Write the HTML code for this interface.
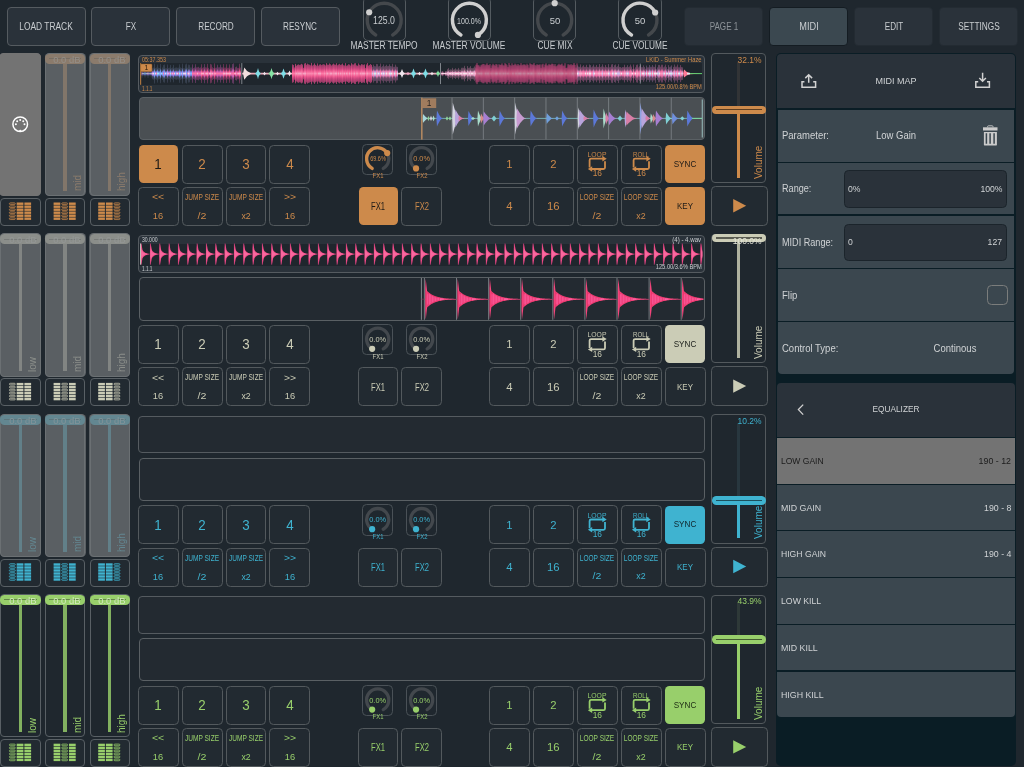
<!DOCTYPE html>
<html><head><meta charset="utf-8"><title>DJ</title>
<style>
html,body{margin:0;padding:0;}
body{width:1024px;height:767px;overflow:hidden;position:relative;background:#1f272e;
font-family:"Liberation Sans",sans-serif;}
.b{position:absolute;box-sizing:border-box;}
.t{position:absolute;white-space:nowrap;line-height:1;}
#root{position:absolute;left:0;top:0;width:1024px;height:767px;overflow:hidden;will-change:transform;}
svg{position:absolute;left:0;top:0;overflow:visible;}
</style></head><body><div id="root">
<div class="b" style="left:6.8px;top:6.8px;width:79.2px;height:39.2px;background:#2a323a;border:1px solid #555b60;border-radius:4px;"></div>
<div class="t" style="top:22px;font-size:10px;color:#c9cdd0;left:46.4px;transform:translateX(-50%) scaleX(0.84);">LOAD TRACK</div>
<div class="b" style="left:91.1px;top:6.8px;width:79.2px;height:39.2px;background:#2a323a;border:1px solid #555b60;border-radius:4px;"></div>
<div class="t" style="top:22px;font-size:10px;color:#c9cdd0;left:130.7px;transform:translateX(-50%) scaleX(0.81);">FX</div>
<div class="b" style="left:176px;top:6.8px;width:79.2px;height:39.2px;background:#2a323a;border:1px solid #555b60;border-radius:4px;"></div>
<div class="t" style="top:22px;font-size:10px;color:#c9cdd0;left:215.6px;transform:translateX(-50%) scaleX(0.82);">RECORD</div>
<div class="b" style="left:260.8px;top:6.8px;width:79.2px;height:39.2px;background:#2a323a;border:1px solid #555b60;border-radius:4px;"></div>
<div class="t" style="top:22px;font-size:10px;color:#c9cdd0;left:300.4px;transform:translateX(-50%) scaleX(0.81);">RESYNC</div>
<div class="b" style="left:362.6px;top:-3px;width:43.2px;height:44.4px;border:1px solid #545b60;border-radius:5px;"></div>
<div class="b" style="left:447.8px;top:-3px;width:43.2px;height:44.4px;border:1px solid #545b60;border-radius:5px;"></div>
<div class="b" style="left:533.1px;top:-3px;width:43.2px;height:44.4px;border:1px solid #545b60;border-radius:5px;"></div>
<div class="b" style="left:618.4px;top:-3px;width:43.2px;height:44.4px;border:1px solid #545b60;border-radius:5px;"></div>
<svg width="1024" height="767"><path d="M375.7 34.92A17 17 0 1 1 392.7 34.92" fill="none" stroke="#44484c" stroke-width="3.4" stroke-linecap="round"/><circle cx="369.18" cy="12.25" r="3.1" fill="#cfcfcf"/><path d="M460.9 34.92A17 17 0 1 1 477.9 34.92" fill="none" stroke="#44484c" stroke-width="3.4" stroke-linecap="round"/><path d="M460.9 34.92A17 17 0 1 1 477.9 34.92" fill="none" stroke="#cfcfcf" stroke-width="3.4" stroke-linecap="round"/><circle cx="477.9" cy="34.92" r="3.1" fill="#cfcfcf"/><path d="M546.2 34.92A17 17 0 1 1 563.2 34.92" fill="none" stroke="#44484c" stroke-width="3.4" stroke-linecap="round"/><circle cx="554.7" cy="3.2" r="3.1" fill="#cfcfcf"/><path d="M631.5 34.92A17 17 0 1 1 648.5 34.92" fill="none" stroke="#44484c" stroke-width="3.4" stroke-linecap="round"/><path d="M631.5 34.92A17 17 0 1 1 655.15 12.48" fill="none" stroke="#cfcfcf" stroke-width="3.4" stroke-linecap="round"/><circle cx="655.15" cy="12.48" r="3.1" fill="#cfcfcf"/></svg>
<div class="t" style="top:16px;font-size:10px;color:#c9cdd0;left:384.2px;transform:translateX(-50%) scaleX(0.87);">125.0</div>
<div class="t" style="top:41px;font-size:10px;color:#c9cdd0;left:384.2px;transform:translateX(-50%) scaleX(0.84);">MASTER TEMPO</div>
<div class="t" style="top:17px;font-size:8.3px;color:#c9cdd0;left:469.4px;transform:translateX(-50%) scaleX(0.85);">100.0%</div>
<div class="t" style="top:41px;font-size:10px;color:#c9cdd0;left:469.4px;transform:translateX(-50%) scaleX(0.84);">MASTER VOLUME</div>
<div class="t" style="top:16px;font-size:9.8px;color:#c9cdd0;left:554.7px;transform:translateX(-50%) scaleX(0.97);">50</div>
<div class="t" style="top:41px;font-size:10px;color:#c9cdd0;left:554.7px;transform:translateX(-50%) scaleX(0.84);">CUE MIX</div>
<div class="t" style="top:16px;font-size:9.8px;color:#c9cdd0;left:640px;transform:translateX(-50%) scaleX(0.97);">50</div>
<div class="t" style="top:41px;font-size:10px;color:#c9cdd0;left:640px;transform:translateX(-50%) scaleX(0.83);">CUE VOLUME</div>
<div class="b" style="left:684.4px;top:6.9px;width:79px;height:39px;background:#2a323a;border:1px solid #232b32;border-radius:4px;"></div>
<div class="t" style="top:22px;font-size:10px;color:#8d9398;left:723.9px;transform:translateX(-50%) scaleX(0.81);">PAGE 1</div>
<div class="b" style="left:769.3px;top:6.9px;width:79px;height:39px;background:#3b4850;border:1px solid #141c22;border-radius:4px;"></div>
<div class="t" style="top:22px;font-size:10px;color:#c9cdd0;left:808.8px;transform:translateX(-50%) scaleX(0.92);">MIDI</div>
<div class="b" style="left:854.2px;top:6.9px;width:79px;height:39px;background:#2a323a;border:1px solid #232b32;border-radius:4px;"></div>
<div class="t" style="top:22px;font-size:10px;color:#c9cdd0;left:893.7px;transform:translateX(-50%) scaleX(0.81);">EDIT</div>
<div class="b" style="left:939.1px;top:6.9px;width:79px;height:39px;background:#2a323a;border:1px solid #232b32;border-radius:4px;"></div>
<div class="t" style="top:22px;font-size:10px;color:#c9cdd0;left:978.6px;transform:translateX(-50%) scaleX(0.83);">SETTINGS</div>
<div class="b" style="left:0.3px;top:53px;width:40.5px;height:143.3px;border:1px solid #596065;border-radius:4px;"></div>
<div class="b" style="left:18.85px;top:59px;width:3.4px;height:132px;background:#ae7846"></div>
<div class="b" style="left:0.3px;top:53.7px;width:40.5px;height:10px;border-radius:4.5px;background:#cd8a4b"></div>
<div class="b" style="left:4.3px;top:58.2px;width:32.5px;height:1px;background:#855a31"></div>
<div class="t" style="top:55px;font-size:9.5px;color:#e8caae;right:987.8px;transform-origin:100% 50%;transform:scaleX(0.99);">0.0 dB</div>
<div class="t" style="left:32.2px;top:191.4px;font-size:10.5px;color:#cd8a4b;transform-origin:0 50%;transform:translate(0,-50%) rotate(-90deg) scaleX(0.95);">low</div>
<div class="b" style="left:-0.7px;top:52.8px;width:41.7px;height:143.6px;background:#737373;border-radius:4.5px;"></div>
<div class="b" style="left:0.3px;top:197.9px;width:40.5px;height:27.9px;background:#222a31;border:1px solid #596065;border-radius:4px;"></div>
<div class="b" style="left:44.9px;top:53px;width:40.5px;height:143.3px;border:1px solid #596065;border-radius:4px;"></div>
<div class="b" style="left:63.45px;top:59px;width:3.4px;height:132px;background:#ae7846"></div>
<div class="b" style="left:44.9px;top:53.7px;width:40.5px;height:10px;border-radius:4.5px;background:#cd8a4b"></div>
<div class="b" style="left:48.9px;top:58.2px;width:32.5px;height:1px;background:#855a31"></div>
<div class="t" style="top:55px;font-size:9.5px;color:#e8caae;right:943.2px;transform-origin:100% 50%;transform:scaleX(0.99);">0.0 dB</div>
<div class="t" style="left:76.8px;top:191.4px;font-size:10.5px;color:#cd8a4b;transform-origin:0 50%;transform:translate(0,-50%) rotate(-90deg) scaleX(0.95);">mid</div>
<div class="b" style="left:44.7px;top:52.8px;width:40.9px;height:143.6px;background:rgba(114,118,120,0.72);border-radius:4.5px;"></div>
<div class="b" style="left:44.9px;top:197.9px;width:40.5px;height:27.9px;background:#222a31;border:1px solid #596065;border-radius:4px;"></div>
<div class="b" style="left:89.5px;top:53px;width:40.5px;height:143.3px;border:1px solid #596065;border-radius:4px;"></div>
<div class="b" style="left:108.05px;top:59px;width:3.4px;height:132px;background:#ae7846"></div>
<div class="b" style="left:89.5px;top:53.7px;width:40.5px;height:10px;border-radius:4.5px;background:#cd8a4b"></div>
<div class="b" style="left:93.5px;top:58.2px;width:32.5px;height:1px;background:#855a31"></div>
<div class="t" style="top:55px;font-size:9.5px;color:#e8caae;right:898.6px;transform-origin:100% 50%;transform:scaleX(0.99);">0.0 dB</div>
<div class="t" style="left:121.4px;top:191.4px;font-size:10.5px;color:#cd8a4b;transform-origin:0 50%;transform:translate(0,-50%) rotate(-90deg) scaleX(0.95);">high</div>
<div class="b" style="left:89.3px;top:52.8px;width:40.9px;height:143.6px;background:rgba(114,118,120,0.72);border-radius:4.5px;"></div>
<div class="b" style="left:89.5px;top:197.9px;width:40.5px;height:27.9px;background:#222a31;border:1px solid #596065;border-radius:4px;"></div>
<div class="b" style="left:138.3px;top:54.9px;width:566.3px;height:37.7px;background:#2a323a;border:1px solid #555b60;border-radius:4px;"></div>
<div class="b" style="left:139.3px;top:63.2px;width:563.2px;height:22px;background:#1f262d"></div>
<div class="b" style="left:138.9px;top:97px;width:565.7px;height:43.2px;background:#4a4f53;border:1px solid #5a6064;border-radius:4px;"></div>
<div class="b" style="left:138.5px;top:145px;width:39.7px;height:38px;background:#cd8a4b;border-radius:4.5px;"></div>
<div class="t" style="top:156px;font-size:15.2px;color:#1d1a17;left:158.3px;transform:translateX(-50%) scaleX(0.88);">1</div>
<div class="b" style="left:138px;top:186.8px;width:40.7px;height:39.1px;background:#222a31;border:1px solid #53595d;border-radius:4.5px;"></div>
<div class="t" style="top:192px;font-size:9.5px;color:#cd8a4b;left:158.3px;transform:translateX(-50%) scaleX(1.1);">&lt;&lt;</div>
<div class="t" style="top:211px;font-size:9.6px;color:#cd8a4b;left:158.3px;transform:translateX(-50%) scaleX(0.97);">16</div>
<div class="b" style="left:181.83px;top:144.5px;width:40.7px;height:39px;background:#222a31;border:1px solid #53595d;border-radius:4.5px;"></div>
<div class="t" style="top:156px;font-size:15.2px;color:#cd8a4b;left:202.13px;transform:translateX(-50%) scaleX(0.88);">2</div>
<div class="b" style="left:181.83px;top:186.8px;width:40.7px;height:39.1px;background:#222a31;border:1px solid #53595d;border-radius:4.5px;"></div>
<div class="t" style="top:193px;font-size:8.6px;color:#cd8a4b;left:202.13px;transform:translateX(-50%) scaleX(0.76);">JUMP SIZE</div>
<div class="t" style="top:211px;font-size:9.6px;color:#cd8a4b;left:202.13px;transform:translateX(-50%) scaleX(1.11);">/2</div>
<div class="b" style="left:225.66px;top:144.5px;width:40.7px;height:39px;background:#222a31;border:1px solid #53595d;border-radius:4.5px;"></div>
<div class="t" style="top:156px;font-size:15.2px;color:#cd8a4b;left:245.96px;transform:translateX(-50%) scaleX(0.88);">3</div>
<div class="b" style="left:225.66px;top:186.8px;width:40.7px;height:39.1px;background:#222a31;border:1px solid #53595d;border-radius:4.5px;"></div>
<div class="t" style="top:193px;font-size:8.6px;color:#cd8a4b;left:245.96px;transform:translateX(-50%) scaleX(0.76);">JUMP SIZE</div>
<div class="t" style="top:211px;font-size:9.6px;color:#cd8a4b;left:245.96px;transform:translateX(-50%) scaleX(0.91);">x2</div>
<div class="b" style="left:269.49px;top:144.5px;width:40.7px;height:39px;background:#222a31;border:1px solid #53595d;border-radius:4.5px;"></div>
<div class="t" style="top:156px;font-size:15.2px;color:#cd8a4b;left:289.79px;transform:translateX(-50%) scaleX(0.88);">4</div>
<div class="b" style="left:269.49px;top:186.8px;width:40.7px;height:39.1px;background:#222a31;border:1px solid #53595d;border-radius:4.5px;"></div>
<div class="t" style="top:192px;font-size:9.5px;color:#cd8a4b;left:289.79px;transform:translateX(-50%) scaleX(1.1);">&gt;&gt;</div>
<div class="t" style="top:211px;font-size:9.6px;color:#cd8a4b;left:289.79px;transform:translateX(-50%) scaleX(0.97);">16</div>
<div class="b" style="left:362.3px;top:143.5px;width:30.6px;height:31.3px;border:1px solid #4a5157;border-radius:4.5px;"></div>
<div class="t" style="top:156px;font-size:6.4px;color:#cd8a4b;left:377.7px;transform:translateX(-50%) scaleX(0.86);">69.6%</div>
<div class="t" style="top:172px;font-size:7.4px;color:#cd8a4b;left:377.7px;transform:translateX(-50%) scaleX(0.8);">FX1</div>
<div class="b" style="left:358.5px;top:187.3px;width:39.4px;height:38.1px;background:#cd8a4b;border-radius:4.5px;"></div>
<div class="t" style="top:202px;font-size:10px;color:#1d1a17;left:378.2px;transform:translateX(-50%) scaleX(0.76);">FX1</div>
<div class="b" style="left:406.2px;top:143.5px;width:30.6px;height:31.3px;border:1px solid #4a5157;border-radius:4.5px;"></div>
<div class="t" style="top:155px;font-size:7.4px;color:#cd8a4b;left:421.6px;transform:translateX(-50%) scaleX(1);">0.0%</div>
<div class="t" style="top:172px;font-size:7.4px;color:#cd8a4b;left:421.6px;transform:translateX(-50%) scaleX(0.8);">FX2</div>
<div class="b" style="left:401.4px;top:186.8px;width:40.4px;height:39.1px;background:#222a31;border:1px solid #53595d;border-radius:4.5px;"></div>
<div class="t" style="top:202px;font-size:10px;color:#cd8a4b;left:421.6px;transform:translateX(-50%) scaleX(0.76);">FX2</div>
<div class="b" style="left:488.9px;top:144.5px;width:40.8px;height:39px;background:#222a31;border:1px solid #53595d;border-radius:4.5px;"></div>
<div class="b" style="left:488.9px;top:186.8px;width:40.8px;height:39.1px;background:#222a31;border:1px solid #53595d;border-radius:4.5px;"></div>
<div class="t" style="top:159px;font-size:11.3px;color:#cd8a4b;left:509.3px;transform:translateX(-50%) scaleX(1);">1</div>
<div class="t" style="top:201px;font-size:11.3px;color:#cd8a4b;left:509.3px;transform:translateX(-50%) scaleX(1);">4</div>
<div class="b" style="left:532.9px;top:144.5px;width:40.8px;height:39px;background:#222a31;border:1px solid #53595d;border-radius:4.5px;"></div>
<div class="b" style="left:532.9px;top:186.8px;width:40.8px;height:39.1px;background:#222a31;border:1px solid #53595d;border-radius:4.5px;"></div>
<div class="t" style="top:159px;font-size:11.3px;color:#cd8a4b;left:553.3px;transform:translateX(-50%) scaleX(1);">2</div>
<div class="t" style="top:201px;font-size:11.3px;color:#cd8a4b;left:553.3px;transform:translateX(-50%) scaleX(1);">16</div>
<div class="b" style="left:576.9px;top:144.5px;width:40.8px;height:39px;background:#222a31;border:1px solid #53595d;border-radius:4.5px;"></div>
<div class="b" style="left:576.9px;top:186.8px;width:40.8px;height:39.1px;background:#222a31;border:1px solid #53595d;border-radius:4.5px;"></div>
<div class="t" style="top:151px;font-size:7.8px;color:#cd8a4b;left:597.3px;transform:translateX(-50%) scaleX(0.87);">LOOP</div>
<div class="t" style="top:169px;font-size:8.4px;color:#cd8a4b;left:597.3px;transform:translateX(-50%) scaleX(1);">16</div>
<div class="t" style="top:193px;font-size:8.3px;color:#cd8a4b;left:597.3px;transform:translateX(-50%) scaleX(0.79);">LOOP SIZE</div>
<div class="t" style="top:211px;font-size:9.6px;color:#cd8a4b;left:597.3px;transform:translateX(-50%) scaleX(1.1);">/2</div>
<div class="b" style="left:620.9px;top:144.5px;width:40.8px;height:39px;background:#222a31;border:1px solid #53595d;border-radius:4.5px;"></div>
<div class="b" style="left:620.9px;top:186.8px;width:40.8px;height:39.1px;background:#222a31;border:1px solid #53595d;border-radius:4.5px;"></div>
<div class="t" style="top:151px;font-size:7.8px;color:#cd8a4b;left:641.3px;transform:translateX(-50%) scaleX(0.78);">ROLL</div>
<div class="t" style="top:169px;font-size:8.4px;color:#cd8a4b;left:641.3px;transform:translateX(-50%) scaleX(1);">16</div>
<div class="t" style="top:193px;font-size:8.3px;color:#cd8a4b;left:641.3px;transform:translateX(-50%) scaleX(0.79);">LOOP SIZE</div>
<div class="t" style="top:211px;font-size:9.6px;color:#cd8a4b;left:641.3px;transform:translateX(-50%) scaleX(0.92);">x2</div>
<div class="b" style="left:665.4px;top:145px;width:39.8px;height:38px;background:#cd8a4b;border-radius:4.5px;"></div>
<div class="b" style="left:665.4px;top:187.3px;width:39.8px;height:38.1px;background:#cd8a4b;border-radius:4.5px;"></div>
<div class="t" style="top:159px;font-size:9.6px;color:#1d1a17;left:685.3px;transform:translateX(-50%) scaleX(0.85);">SYNC</div>
<div class="t" style="top:201px;font-size:9.6px;color:#1d1a17;left:685.3px;transform:translateX(-50%) scaleX(0.83);">KEY</div>
<div class="b" style="left:710.9px;top:53.3px;width:54.9px;height:129.6px;border:1px solid #53595d;border-radius:4px;"></div>
<div class="b" style="left:737.1px;top:62px;width:3.4px;height:47.9px;background:#323436"></div>
<div class="b" style="left:737.1px;top:109.9px;width:3.4px;height:67.7px;background:#cd8a4b"></div>
<div class="b" style="left:711.9px;top:105.5px;width:54.2px;height:8.8px;border-radius:4.4px;background:#cd8a4b"></div>
<div class="b" style="left:716px;top:109.3px;width:46px;height:1.2px;background:#5c3e22"></div>
<div class="t" style="top:56px;font-size:9px;color:#cd8a4b;right:262.4px;transform-origin:100% 50%;transform:scaleX(0.94);">32.1%</div>
<div class="t" style="left:758.6px;top:178.6px;font-size:10px;color:#cd8a4b;transform-origin:0 50%;transform:translate(0,-50%) rotate(-90deg) scaleX(1);">Volume</div>
<div class="b" style="left:710.9px;top:185.8px;width:57.1px;height:40px;background:#222a31;border:1px solid #53595d;border-radius:4.5px;"></div>
<svg width="1024" height="767"><rect x="9.35" y="202.85" width="6" height="1.7" rx="1.1" fill="#423b34" stroke="#cd8a4b" stroke-width="0.7"/><rect x="9.35" y="205.85" width="6" height="1.7" rx="1.1" fill="#423b34" stroke="#cd8a4b" stroke-width="0.7"/><rect x="9.35" y="208.85" width="6" height="1.7" rx="1.1" fill="#423b34" stroke="#cd8a4b" stroke-width="0.7"/><rect x="9.35" y="211.85" width="6" height="1.7" rx="1.1" fill="#423b34" stroke="#cd8a4b" stroke-width="0.7"/><rect x="9.35" y="214.85" width="6" height="1.7" rx="1.1" fill="#423b34" stroke="#cd8a4b" stroke-width="0.7"/><rect x="9.35" y="217.85" width="6" height="1.7" rx="1.1" fill="#423b34" stroke="#cd8a4b" stroke-width="0.7"/><rect x="16.7" y="202.5" width="6.7" height="2.4" fill="#cd8a4b"/><rect x="16.7" y="205.5" width="6.7" height="2.4" fill="#cd8a4b"/><rect x="16.7" y="208.5" width="6.7" height="2.4" fill="#cd8a4b"/><rect x="16.7" y="211.5" width="6.7" height="2.4" fill="#cd8a4b"/><rect x="16.7" y="214.5" width="6.7" height="2.4" fill="#cd8a4b"/><rect x="16.7" y="217.5" width="6.7" height="2.4" fill="#cd8a4b"/><rect x="24.4" y="202.5" width="6.7" height="2.4" fill="#cd8a4b"/><rect x="24.4" y="205.5" width="6.7" height="2.4" fill="#cd8a4b"/><rect x="24.4" y="208.5" width="6.7" height="2.4" fill="#cd8a4b"/><rect x="24.4" y="211.5" width="6.7" height="2.4" fill="#cd8a4b"/><rect x="24.4" y="214.5" width="6.7" height="2.4" fill="#cd8a4b"/><rect x="24.4" y="217.5" width="6.7" height="2.4" fill="#cd8a4b"/><rect x="53.6" y="202.5" width="6.7" height="2.4" fill="#cd8a4b"/><rect x="53.6" y="205.5" width="6.7" height="2.4" fill="#cd8a4b"/><rect x="53.6" y="208.5" width="6.7" height="2.4" fill="#cd8a4b"/><rect x="53.6" y="211.5" width="6.7" height="2.4" fill="#cd8a4b"/><rect x="53.6" y="214.5" width="6.7" height="2.4" fill="#cd8a4b"/><rect x="53.6" y="217.5" width="6.7" height="2.4" fill="#cd8a4b"/><rect x="61.65" y="202.85" width="6" height="1.7" rx="1.1" fill="#423b34" stroke="#cd8a4b" stroke-width="0.7"/><rect x="61.65" y="205.85" width="6" height="1.7" rx="1.1" fill="#423b34" stroke="#cd8a4b" stroke-width="0.7"/><rect x="61.65" y="208.85" width="6" height="1.7" rx="1.1" fill="#423b34" stroke="#cd8a4b" stroke-width="0.7"/><rect x="61.65" y="211.85" width="6" height="1.7" rx="1.1" fill="#423b34" stroke="#cd8a4b" stroke-width="0.7"/><rect x="61.65" y="214.85" width="6" height="1.7" rx="1.1" fill="#423b34" stroke="#cd8a4b" stroke-width="0.7"/><rect x="61.65" y="217.85" width="6" height="1.7" rx="1.1" fill="#423b34" stroke="#cd8a4b" stroke-width="0.7"/><rect x="69" y="202.5" width="6.7" height="2.4" fill="#cd8a4b"/><rect x="69" y="205.5" width="6.7" height="2.4" fill="#cd8a4b"/><rect x="69" y="208.5" width="6.7" height="2.4" fill="#cd8a4b"/><rect x="69" y="211.5" width="6.7" height="2.4" fill="#cd8a4b"/><rect x="69" y="214.5" width="6.7" height="2.4" fill="#cd8a4b"/><rect x="69" y="217.5" width="6.7" height="2.4" fill="#cd8a4b"/><rect x="98.2" y="202.5" width="6.7" height="2.4" fill="#cd8a4b"/><rect x="98.2" y="205.5" width="6.7" height="2.4" fill="#cd8a4b"/><rect x="98.2" y="208.5" width="6.7" height="2.4" fill="#cd8a4b"/><rect x="98.2" y="211.5" width="6.7" height="2.4" fill="#cd8a4b"/><rect x="98.2" y="214.5" width="6.7" height="2.4" fill="#cd8a4b"/><rect x="98.2" y="217.5" width="6.7" height="2.4" fill="#cd8a4b"/><rect x="105.9" y="202.5" width="6.7" height="2.4" fill="#cd8a4b"/><rect x="105.9" y="205.5" width="6.7" height="2.4" fill="#cd8a4b"/><rect x="105.9" y="208.5" width="6.7" height="2.4" fill="#cd8a4b"/><rect x="105.9" y="211.5" width="6.7" height="2.4" fill="#cd8a4b"/><rect x="105.9" y="214.5" width="6.7" height="2.4" fill="#cd8a4b"/><rect x="105.9" y="217.5" width="6.7" height="2.4" fill="#cd8a4b"/><rect x="113.95" y="202.85" width="6" height="1.7" rx="1.1" fill="#423b34" stroke="#cd8a4b" stroke-width="0.7"/><rect x="113.95" y="205.85" width="6" height="1.7" rx="1.1" fill="#423b34" stroke="#cd8a4b" stroke-width="0.7"/><rect x="113.95" y="208.85" width="6" height="1.7" rx="1.1" fill="#423b34" stroke="#cd8a4b" stroke-width="0.7"/><rect x="113.95" y="211.85" width="6" height="1.7" rx="1.1" fill="#423b34" stroke="#cd8a4b" stroke-width="0.7"/><rect x="113.95" y="214.85" width="6" height="1.7" rx="1.1" fill="#423b34" stroke="#cd8a4b" stroke-width="0.7"/><rect x="113.95" y="217.85" width="6" height="1.7" rx="1.1" fill="#423b34" stroke="#cd8a4b" stroke-width="0.7"/><circle cx="20.2" cy="124.2" r="7.3" fill="none" stroke="#fff" stroke-width="1.5"/><circle cx="15.9" cy="124.2" r="1" fill="#fff"/><circle cx="17.16" cy="121.16" r="1" fill="#fff"/><circle cx="20.2" cy="119.9" r="1" fill="#fff"/><circle cx="23.24" cy="121.16" r="1" fill="#fff"/><circle cx="24.5" cy="124.2" r="1" fill="#fff"/><path d="M18.6 131.2L20.2 129.4L21.8 131.2Z" fill="#fff"/><defs><linearGradient id="wg0" x1="0" y1="0" x2="0" y2="1"><stop offset="0" stop-color="#6a6a90" stop-opacity="0.24"/><stop offset="0.22" stop-color="#6a6a90" stop-opacity="0.35"/><stop offset="0.36" stop-color="#a070d8"/><stop offset="0.5" stop-color="#e0b8f0"/><stop offset="0.64" stop-color="#a070d8"/><stop offset="0.78" stop-color="#6a6a90" stop-opacity="0.35"/><stop offset="1" stop-color="#6a6a90" stop-opacity="0.24"/></linearGradient><linearGradient id="wg1" x1="0" y1="0" x2="0" y2="1"><stop offset="0" stop-color="#5d6f8a" stop-opacity="0.24"/><stop offset="0.22" stop-color="#5d6f8a" stop-opacity="0.35"/><stop offset="0.36" stop-color="#8f74dc"/><stop offset="0.5" stop-color="#efe2f2"/><stop offset="0.64" stop-color="#8f74dc"/><stop offset="0.78" stop-color="#5d6f8a" stop-opacity="0.35"/><stop offset="1" stop-color="#5d6f8a" stop-opacity="0.24"/></linearGradient><linearGradient id="wg2" x1="0" y1="0" x2="0" y2="1"><stop offset="0" stop-color="#5d6f8a" stop-opacity="0.24"/><stop offset="0.22" stop-color="#5d6f8a" stop-opacity="0.35"/><stop offset="0.36" stop-color="#6f80e6"/><stop offset="0.5" stop-color="#a6ecf4"/><stop offset="0.64" stop-color="#6f80e6"/><stop offset="0.78" stop-color="#5d6f8a" stop-opacity="0.35"/><stop offset="1" stop-color="#5d6f8a" stop-opacity="0.24"/></linearGradient><linearGradient id="wg3" x1="0" y1="0" x2="0" y2="1"><stop offset="0" stop-color="#66728e" stop-opacity="0.24"/><stop offset="0.22" stop-color="#66728e" stop-opacity="0.35"/><stop offset="0.36" stop-color="#6f8ce8"/><stop offset="0.5" stop-color="#8fb4ff"/><stop offset="0.64" stop-color="#6f8ce8"/><stop offset="0.78" stop-color="#66728e" stop-opacity="0.35"/><stop offset="1" stop-color="#66728e" stop-opacity="0.24"/></linearGradient><linearGradient id="wg4" x1="0" y1="0" x2="0" y2="1"><stop offset="0" stop-color="#6a6a90" stop-opacity="0.28"/><stop offset="0.22" stop-color="#6a6a90" stop-opacity="0.4"/><stop offset="0.36" stop-color="#a070d8"/><stop offset="0.5" stop-color="#e0b8f0"/><stop offset="0.64" stop-color="#a070d8"/><stop offset="0.78" stop-color="#6a6a90" stop-opacity="0.4"/><stop offset="1" stop-color="#6a6a90" stop-opacity="0.28"/></linearGradient><linearGradient id="wg5" x1="0" y1="0" x2="0" y2="1"><stop offset="0" stop-color="#5d6f8a" stop-opacity="0.28"/><stop offset="0.22" stop-color="#5d6f8a" stop-opacity="0.4"/><stop offset="0.36" stop-color="#8f74dc"/><stop offset="0.5" stop-color="#efe2f2"/><stop offset="0.64" stop-color="#8f74dc"/><stop offset="0.78" stop-color="#5d6f8a" stop-opacity="0.4"/><stop offset="1" stop-color="#5d6f8a" stop-opacity="0.28"/></linearGradient><linearGradient id="wg6" x1="0" y1="0" x2="0" y2="1"><stop offset="0" stop-color="#66728e" stop-opacity="0.28"/><stop offset="0.22" stop-color="#66728e" stop-opacity="0.4"/><stop offset="0.36" stop-color="#6f8ce8"/><stop offset="0.5" stop-color="#8fb4ff"/><stop offset="0.64" stop-color="#6f8ce8"/><stop offset="0.78" stop-color="#66728e" stop-opacity="0.4"/><stop offset="1" stop-color="#66728e" stop-opacity="0.28"/></linearGradient><linearGradient id="wg7" x1="0" y1="0" x2="0" y2="1"><stop offset="0" stop-color="#5d6f8a" stop-opacity="0.28"/><stop offset="0.22" stop-color="#5d6f8a" stop-opacity="0.4"/><stop offset="0.36" stop-color="#7a7fe6"/><stop offset="0.5" stop-color="#ff80b4"/><stop offset="0.64" stop-color="#7a7fe6"/><stop offset="0.78" stop-color="#5d6f8a" stop-opacity="0.4"/><stop offset="1" stop-color="#5d6f8a" stop-opacity="0.28"/></linearGradient><linearGradient id="wg8" x1="0" y1="0" x2="0" y2="1"><stop offset="0" stop-color="#5d6f8a" stop-opacity="0.28"/><stop offset="0.22" stop-color="#5d6f8a" stop-opacity="0.4"/><stop offset="0.36" stop-color="#6f80e6"/><stop offset="0.5" stop-color="#a6ecf4"/><stop offset="0.64" stop-color="#6f80e6"/><stop offset="0.78" stop-color="#5d6f8a" stop-opacity="0.4"/><stop offset="1" stop-color="#5d6f8a" stop-opacity="0.28"/></linearGradient><linearGradient id="wg9" x1="0" y1="0" x2="0" y2="1"><stop offset="0" stop-color="#8c4680" stop-opacity="0.49"/><stop offset="0.22" stop-color="#8c4680" stop-opacity="0.7"/><stop offset="0.36" stop-color="#cc5cb0"/><stop offset="0.5" stop-color="#ff78a8"/><stop offset="0.64" stop-color="#cc5cb0"/><stop offset="0.78" stop-color="#8c4680" stop-opacity="0.7"/><stop offset="1" stop-color="#8c4680" stop-opacity="0.49"/></linearGradient><linearGradient id="wg10" x1="0" y1="0" x2="0" y2="1"><stop offset="0" stop-color="#9a3c6e" stop-opacity="0.49"/><stop offset="0.22" stop-color="#9a3c6e" stop-opacity="0.7"/><stop offset="0.36" stop-color="#e0569a"/><stop offset="0.5" stop-color="#f4b8d8"/><stop offset="0.64" stop-color="#e0569a"/><stop offset="0.78" stop-color="#9a3c6e" stop-opacity="0.7"/><stop offset="1" stop-color="#9a3c6e" stop-opacity="0.49"/></linearGradient><linearGradient id="wg11" x1="0" y1="0" x2="0" y2="1"><stop offset="0" stop-color="#9a3c6e" stop-opacity="0.49"/><stop offset="0.22" stop-color="#9a3c6e" stop-opacity="0.7"/><stop offset="0.36" stop-color="#ec4c86"/><stop offset="0.5" stop-color="#ffb0c8"/><stop offset="0.64" stop-color="#ec4c86"/><stop offset="0.78" stop-color="#9a3c6e" stop-opacity="0.7"/><stop offset="1" stop-color="#9a3c6e" stop-opacity="0.49"/></linearGradient><linearGradient id="wg12" x1="0" y1="0" x2="0" y2="1"><stop offset="0" stop-color="#9a3c6e" stop-opacity="0.49"/><stop offset="0.22" stop-color="#9a3c6e" stop-opacity="0.7"/><stop offset="0.36" stop-color="#e8508c"/><stop offset="0.5" stop-color="#ff9cc0"/><stop offset="0.64" stop-color="#e8508c"/><stop offset="0.78" stop-color="#9a3c6e" stop-opacity="0.7"/><stop offset="1" stop-color="#9a3c6e" stop-opacity="0.49"/></linearGradient><linearGradient id="wg13" x1="0" y1="0" x2="0" y2="1"><stop offset="0" stop-color="#c8427c" stop-opacity="0.66"/><stop offset="0.22" stop-color="#c8427c" stop-opacity="0.95"/><stop offset="0.36" stop-color="#ec568c"/><stop offset="0.5" stop-color="#ff7ca8"/><stop offset="0.64" stop-color="#ec568c"/><stop offset="0.78" stop-color="#c8427c" stop-opacity="0.95"/><stop offset="1" stop-color="#c8427c" stop-opacity="0.66"/></linearGradient><linearGradient id="wg14" x1="0" y1="0" x2="0" y2="1"><stop offset="0" stop-color="#d64a84" stop-opacity="0.66"/><stop offset="0.22" stop-color="#d64a84" stop-opacity="0.95"/><stop offset="0.36" stop-color="#f26698"/><stop offset="0.5" stop-color="#f896b8"/><stop offset="0.64" stop-color="#f26698"/><stop offset="0.78" stop-color="#d64a84" stop-opacity="0.95"/><stop offset="1" stop-color="#d64a84" stop-opacity="0.66"/></linearGradient><linearGradient id="wg15" x1="0" y1="0" x2="0" y2="1"><stop offset="0" stop-color="#d04680" stop-opacity="0.66"/><stop offset="0.22" stop-color="#d04680" stop-opacity="0.95"/><stop offset="0.36" stop-color="#f05c92"/><stop offset="0.5" stop-color="#f6a6c4"/><stop offset="0.64" stop-color="#f05c92"/><stop offset="0.78" stop-color="#d04680" stop-opacity="0.95"/><stop offset="1" stop-color="#d04680" stop-opacity="0.66"/></linearGradient><linearGradient id="wg16" x1="0" y1="0" x2="0" y2="1"><stop offset="0" stop-color="#d04680" stop-opacity="0.66"/><stop offset="0.22" stop-color="#d04680" stop-opacity="0.95"/><stop offset="0.36" stop-color="#f05c92"/><stop offset="0.5" stop-color="#fa8ab0"/><stop offset="0.64" stop-color="#f05c92"/><stop offset="0.78" stop-color="#d04680" stop-opacity="0.95"/><stop offset="1" stop-color="#d04680" stop-opacity="0.66"/></linearGradient><linearGradient id="wg17" x1="0" y1="0" x2="0" y2="1"><stop offset="0" stop-color="#8c5a80" stop-opacity="0.49"/><stop offset="0.22" stop-color="#8c5a80" stop-opacity="0.7"/><stop offset="0.36" stop-color="#d888c0"/><stop offset="0.5" stop-color="#d0c8f4"/><stop offset="0.64" stop-color="#d888c0"/><stop offset="0.78" stop-color="#8c5a80" stop-opacity="0.7"/><stop offset="1" stop-color="#8c5a80" stop-opacity="0.49"/></linearGradient><linearGradient id="wg18" x1="0" y1="0" x2="0" y2="1"><stop offset="0" stop-color="#94567c" stop-opacity="0.49"/><stop offset="0.22" stop-color="#94567c" stop-opacity="0.7"/><stop offset="0.36" stop-color="#ea7cae"/><stop offset="0.5" stop-color="#f8b8d2"/><stop offset="0.64" stop-color="#ea7cae"/><stop offset="0.78" stop-color="#94567c" stop-opacity="0.7"/><stop offset="1" stop-color="#94567c" stop-opacity="0.49"/></linearGradient><linearGradient id="wg19" x1="0" y1="0" x2="0" y2="1"><stop offset="0" stop-color="#84608c" stop-opacity="0.49"/><stop offset="0.22" stop-color="#84608c" stop-opacity="0.7"/><stop offset="0.36" stop-color="#c890d2"/><stop offset="0.5" stop-color="#d6f2f0"/><stop offset="0.64" stop-color="#c890d2"/><stop offset="0.78" stop-color="#84608c" stop-opacity="0.7"/><stop offset="1" stop-color="#84608c" stop-opacity="0.49"/></linearGradient><linearGradient id="wg20" x1="0" y1="0" x2="0" y2="1"><stop offset="0" stop-color="#8c5a80" stop-opacity="0.49"/><stop offset="0.22" stop-color="#8c5a80" stop-opacity="0.7"/><stop offset="0.36" stop-color="#e07cb0"/><stop offset="0.5" stop-color="#f6ecf2"/><stop offset="0.64" stop-color="#e07cb0"/><stop offset="0.78" stop-color="#8c5a80" stop-opacity="0.7"/><stop offset="1" stop-color="#8c5a80" stop-opacity="0.49"/></linearGradient><linearGradient id="wg21" x1="0" y1="0" x2="0" y2="1"><stop offset="0" stop-color="#9a507c" stop-opacity="0.49"/><stop offset="0.22" stop-color="#9a507c" stop-opacity="0.7"/><stop offset="0.36" stop-color="#ee6ca4"/><stop offset="0.5" stop-color="#ffa0c4"/><stop offset="0.64" stop-color="#ee6ca4"/><stop offset="0.78" stop-color="#9a507c" stop-opacity="0.7"/><stop offset="1" stop-color="#9a507c" stop-opacity="0.49"/></linearGradient><linearGradient id="wg22" x1="0" y1="0" x2="0" y2="1"><stop offset="0" stop-color="#94607e" stop-opacity="0.56"/><stop offset="0.22" stop-color="#94607e" stop-opacity="0.8"/><stop offset="0.36" stop-color="#dca0c6"/><stop offset="0.5" stop-color="#f2bcd4"/><stop offset="0.64" stop-color="#dca0c6"/><stop offset="0.78" stop-color="#94607e" stop-opacity="0.8"/><stop offset="1" stop-color="#94607e" stop-opacity="0.56"/></linearGradient><linearGradient id="wg23" x1="0" y1="0" x2="0" y2="1"><stop offset="0" stop-color="#94607e" stop-opacity="0.56"/><stop offset="0.22" stop-color="#94607e" stop-opacity="0.8"/><stop offset="0.36" stop-color="#e290b6"/><stop offset="0.5" stop-color="#f6e8f0"/><stop offset="0.64" stop-color="#e290b6"/><stop offset="0.78" stop-color="#94607e" stop-opacity="0.8"/><stop offset="1" stop-color="#94607e" stop-opacity="0.56"/></linearGradient><linearGradient id="wg24" x1="0" y1="0" x2="0" y2="1"><stop offset="0" stop-color="#94607e" stop-opacity="0.49"/><stop offset="0.22" stop-color="#94607e" stop-opacity="0.7"/><stop offset="0.36" stop-color="#dca0c6"/><stop offset="0.5" stop-color="#f2bcd4"/><stop offset="0.64" stop-color="#dca0c6"/><stop offset="0.78" stop-color="#94607e" stop-opacity="0.7"/><stop offset="1" stop-color="#94607e" stop-opacity="0.49"/></linearGradient><linearGradient id="wg25" x1="0" y1="0" x2="0" y2="1"><stop offset="0" stop-color="#94607e" stop-opacity="0.49"/><stop offset="0.22" stop-color="#94607e" stop-opacity="0.7"/><stop offset="0.36" stop-color="#e290b6"/><stop offset="0.5" stop-color="#f6e8f0"/><stop offset="0.64" stop-color="#e290b6"/><stop offset="0.78" stop-color="#94607e" stop-opacity="0.7"/><stop offset="1" stop-color="#94607e" stop-opacity="0.49"/></linearGradient><linearGradient id="wg26" x1="0" y1="0" x2="0" y2="1"><stop offset="0" stop-color="#8c5a80" stop-opacity="0.52"/><stop offset="0.22" stop-color="#8c5a80" stop-opacity="0.75"/><stop offset="0.36" stop-color="#e07cb0"/><stop offset="0.5" stop-color="#f6ecf2"/><stop offset="0.64" stop-color="#e07cb0"/><stop offset="0.78" stop-color="#8c5a80" stop-opacity="0.75"/><stop offset="1" stop-color="#8c5a80" stop-opacity="0.52"/></linearGradient><linearGradient id="wg27" x1="0" y1="0" x2="0" y2="1"><stop offset="0" stop-color="#8c5a80" stop-opacity="0.52"/><stop offset="0.22" stop-color="#8c5a80" stop-opacity="0.75"/><stop offset="0.36" stop-color="#d888c0"/><stop offset="0.5" stop-color="#d0c8f4"/><stop offset="0.64" stop-color="#d888c0"/><stop offset="0.78" stop-color="#8c5a80" stop-opacity="0.75"/><stop offset="1" stop-color="#8c5a80" stop-opacity="0.52"/></linearGradient><linearGradient id="wg28" x1="0" y1="0" x2="0" y2="1"><stop offset="0" stop-color="#94567c" stop-opacity="0.52"/><stop offset="0.22" stop-color="#94567c" stop-opacity="0.75"/><stop offset="0.36" stop-color="#ea7cae"/><stop offset="0.5" stop-color="#f8b8d2"/><stop offset="0.64" stop-color="#ea7cae"/><stop offset="0.78" stop-color="#94567c" stop-opacity="0.75"/><stop offset="1" stop-color="#94567c" stop-opacity="0.52"/></linearGradient><linearGradient id="wg29" x1="0" y1="0" x2="0" y2="1"><stop offset="0" stop-color="#9a507c" stop-opacity="0.52"/><stop offset="0.22" stop-color="#9a507c" stop-opacity="0.75"/><stop offset="0.36" stop-color="#ee6ca4"/><stop offset="0.5" stop-color="#ffa0c4"/><stop offset="0.64" stop-color="#ee6ca4"/><stop offset="0.78" stop-color="#9a507c" stop-opacity="0.75"/><stop offset="1" stop-color="#9a507c" stop-opacity="0.52"/></linearGradient></defs><rect x="141.5" y="69.43" width="1.02" height="8.34" fill="url(#wg0)"/><rect x="142.5" y="71.24" width="1.02" height="4.71" fill="url(#wg1)"/><rect x="143.5" y="71.01" width="1.02" height="5.19" fill="url(#wg2)"/><rect x="144.5" y="69.59" width="1.02" height="8.03" fill="url(#wg3)"/><rect x="145.5" y="71.05" width="1.02" height="5.11" fill="url(#wg2)"/><rect x="146.5" y="70.97" width="1.02" height="5.25" fill="url(#wg1)"/><rect x="147.5" y="69.25" width="1.02" height="8.7" fill="url(#wg1)"/><rect x="148.5" y="70.96" width="1.02" height="5.27" fill="url(#wg0)"/><rect x="149.5" y="71.02" width="1.02" height="5.16" fill="url(#wg2)"/><rect x="150.5" y="70.53" width="1.02" height="6.14" fill="url(#wg1)"/><rect x="151.5" y="69.22" width="1.02" height="8.75" fill="url(#wg1)"/><rect x="152" y="68.02" width="1.02" height="11.17" fill="url(#wg4)"/><rect x="153" y="67.51" width="1.02" height="12.18" fill="url(#wg5)"/><rect x="154" y="63.68" width="1.02" height="19.83" fill="url(#wg6)"/><rect x="155" y="68.01" width="1.02" height="11.18" fill="url(#wg5)"/><rect x="156" y="67.46" width="1.02" height="12.29" fill="url(#wg7)"/><rect x="157" y="64.58" width="1.02" height="18.04" fill="url(#wg8)"/><rect x="158" y="67.75" width="1.02" height="11.7" fill="url(#wg8)"/><rect x="159" y="68" width="1.02" height="11.2" fill="url(#wg6)"/><rect x="160" y="64.03" width="1.02" height="19.15" fill="url(#wg6)"/><rect x="161" y="69.44" width="1.02" height="8.32" fill="url(#wg8)"/><rect x="162" y="67.44" width="1.02" height="12.31" fill="url(#wg6)"/><rect x="163" y="64.97" width="1.02" height="17.25" fill="url(#wg7)"/><rect x="164" y="64.47" width="1.02" height="18.25" fill="url(#wg6)"/><rect x="165" y="68.23" width="1.02" height="10.75" fill="url(#wg5)"/><rect x="166" y="68.16" width="1.02" height="10.87" fill="url(#wg6)"/><rect x="167" y="64.52" width="1.02" height="18.16" fill="url(#wg4)"/><rect x="168" y="68.05" width="1.02" height="11.1" fill="url(#wg4)"/><rect x="169" y="67.62" width="1.02" height="11.96" fill="url(#wg7)"/><rect x="170" y="64.95" width="1.02" height="17.3" fill="url(#wg8)"/><rect x="171" y="68.09" width="1.02" height="11.03" fill="url(#wg7)"/><rect x="172" y="67.47" width="1.02" height="12.26" fill="url(#wg4)"/><rect x="173" y="64.87" width="1.02" height="17.46" fill="url(#wg7)"/><rect x="174" y="68.11" width="1.02" height="10.97" fill="url(#wg5)"/><rect x="175" y="67.64" width="1.02" height="11.92" fill="url(#wg6)"/><rect x="176" y="67.42" width="1.02" height="12.36" fill="url(#wg4)"/><rect x="177" y="67.8" width="1.02" height="11.59" fill="url(#wg5)"/><rect x="178" y="67.63" width="1.02" height="11.95" fill="url(#wg7)"/><rect x="179" y="64.36" width="1.02" height="18.48" fill="url(#wg8)"/><rect x="180" y="67.42" width="1.02" height="12.36" fill="url(#wg6)"/><rect x="181" y="67.98" width="1.02" height="11.24" fill="url(#wg4)"/><rect x="182" y="63.67" width="1.02" height="19.86" fill="url(#wg6)"/><rect x="183" y="68.18" width="1.02" height="10.85" fill="url(#wg5)"/><rect x="184" y="68.22" width="1.02" height="10.77" fill="url(#wg5)"/><rect x="185" y="64.37" width="1.02" height="18.47" fill="url(#wg5)"/><rect x="186" y="63.63" width="1.02" height="19.93" fill="url(#wg6)"/><rect x="187" y="67.67" width="1.02" height="11.86" fill="url(#wg7)"/><rect x="188" y="64.59" width="1.02" height="18.01" fill="url(#wg5)"/><rect x="189" y="64.84" width="1.02" height="17.52" fill="url(#wg4)"/><rect x="190" y="67.43" width="1.02" height="12.33" fill="url(#wg6)"/><rect x="191" y="67.51" width="1.02" height="12.17" fill="url(#wg6)"/><rect x="192" y="64.35" width="1.02" height="18.5" fill="url(#wg9)"/><rect x="193" y="68.05" width="1.02" height="11.1" fill="url(#wg9)"/><rect x="194" y="67.49" width="1.02" height="12.23" fill="url(#wg9)"/><rect x="195" y="64.22" width="1.02" height="18.76" fill="url(#wg9)"/><rect x="196" y="67.36" width="1.02" height="12.48" fill="url(#wg9)"/><rect x="197" y="67.25" width="1.02" height="12.69" fill="url(#wg10)"/><rect x="198" y="66.81" width="1.02" height="13.57" fill="url(#wg9)"/><rect x="199" y="67.82" width="1.02" height="11.57" fill="url(#wg9)"/><rect x="200" y="67.38" width="1.02" height="12.44" fill="url(#wg9)"/><rect x="201" y="64.24" width="1.02" height="18.72" fill="url(#wg11)"/><rect x="202" y="67.8" width="1.02" height="11.61" fill="url(#wg11)"/><rect x="203" y="67.24" width="1.02" height="12.73" fill="url(#wg10)"/><rect x="204" y="63.98" width="1.02" height="19.24" fill="url(#wg9)"/><rect x="205" y="67.27" width="1.02" height="12.66" fill="url(#wg12)"/><rect x="206" y="67.46" width="1.02" height="12.27" fill="url(#wg10)"/><rect x="207" y="63.85" width="1.02" height="19.49" fill="url(#wg11)"/><rect x="208" y="67.84" width="1.02" height="11.53" fill="url(#wg9)"/><rect x="209" y="69.3" width="1.02" height="8.59" fill="url(#wg10)"/><rect x="210" y="63.9" width="1.02" height="19.41" fill="url(#wg10)"/><rect x="211" y="64.43" width="1.02" height="18.35" fill="url(#wg12)"/><rect x="212" y="67.23" width="1.02" height="12.75" fill="url(#wg10)"/><rect x="213" y="68.06" width="1.02" height="11.08" fill="url(#wg9)"/><rect x="214" y="63.35" width="1.02" height="20.51" fill="url(#wg12)"/><rect x="215" y="67.74" width="1.02" height="11.73" fill="url(#wg12)"/><rect x="216" y="67.58" width="1.02" height="12.04" fill="url(#wg9)"/><rect x="217" y="64.74" width="1.02" height="17.72" fill="url(#wg9)"/><rect x="218" y="67.34" width="1.02" height="12.51" fill="url(#wg9)"/><rect x="219" y="67.25" width="1.02" height="12.71" fill="url(#wg9)"/><rect x="220" y="64.61" width="1.02" height="17.99" fill="url(#wg9)"/><rect x="221" y="67.26" width="1.02" height="12.68" fill="url(#wg9)"/><rect x="222" y="67.38" width="1.02" height="12.45" fill="url(#wg9)"/><rect x="223" y="64.07" width="1.02" height="19.06" fill="url(#wg11)"/><rect x="224" y="67.6" width="1.02" height="11.99" fill="url(#wg10)"/><rect x="225" y="67.56" width="1.02" height="12.07" fill="url(#wg12)"/><rect x="226" y="64.19" width="1.02" height="18.82" fill="url(#wg10)"/><rect x="227" y="67.82" width="1.02" height="11.57" fill="url(#wg11)"/><rect x="228" y="67.72" width="1.02" height="11.75" fill="url(#wg11)"/><rect x="229" y="64.32" width="1.02" height="18.56" fill="url(#wg11)"/><rect x="230" y="67.76" width="1.02" height="11.67" fill="url(#wg10)"/><rect x="231" y="67.58" width="1.02" height="12.05" fill="url(#wg9)"/><rect x="232" y="64.03" width="1.02" height="19.15" fill="url(#wg9)"/><rect x="233" y="63.38" width="1.02" height="20.44" fill="url(#wg9)"/><rect x="234" y="69.67" width="1.02" height="7.87" fill="url(#wg11)"/><rect x="235" y="67.15" width="1.02" height="12.9" fill="url(#wg10)"/><rect x="236" y="66.56" width="1.02" height="14.07" fill="url(#wg9)"/><rect x="237" y="67.89" width="1.02" height="11.42" fill="url(#wg12)"/><rect x="238" y="67.89" width="1.02" height="11.42" fill="url(#wg10)"/><rect x="239" y="63.7" width="1.02" height="19.8" fill="url(#wg11)"/><rect x="240" y="67.56" width="1.02" height="12.07" fill="url(#wg12)"/><rect x="292" y="64.37" width="1.02" height="18.45" fill="url(#wg13)"/><rect x="293" y="65" width="1.02" height="17.2" fill="url(#wg13)"/><rect x="294" y="67.4" width="1.02" height="12.4" fill="url(#wg13)"/><rect x="295" y="63.86" width="1.02" height="19.49" fill="url(#wg14)"/><rect x="296" y="65.64" width="1.02" height="15.92" fill="url(#wg15)"/><rect x="297" y="64.8" width="1.02" height="17.59" fill="url(#wg14)"/><rect x="298" y="64.38" width="1.02" height="18.45" fill="url(#wg15)"/><rect x="299" y="64.92" width="1.02" height="17.36" fill="url(#wg15)"/><rect x="300" y="64.58" width="1.02" height="18.04" fill="url(#wg15)"/><rect x="301" y="63.81" width="1.02" height="19.58" fill="url(#wg14)"/><rect x="302" y="64.53" width="1.02" height="18.14" fill="url(#wg16)"/><rect x="303" y="67.79" width="1.02" height="11.63" fill="url(#wg15)"/><rect x="304" y="63.53" width="1.02" height="20.15" fill="url(#wg15)"/><rect x="305" y="63.03" width="1.02" height="21.13" fill="url(#wg15)"/><rect x="306" y="64.79" width="1.02" height="17.62" fill="url(#wg13)"/><rect x="307" y="63.59" width="1.02" height="20.02" fill="url(#wg16)"/><rect x="308" y="64.3" width="1.02" height="18.61" fill="url(#wg16)"/><rect x="309" y="64.67" width="1.02" height="17.87" fill="url(#wg16)"/><rect x="310" y="65.26" width="1.02" height="16.69" fill="url(#wg16)"/><rect x="311" y="62.9" width="1.02" height="21.4" fill="url(#wg16)"/><rect x="312" y="65.53" width="1.02" height="16.15" fill="url(#wg16)"/><rect x="313" y="64.77" width="1.02" height="17.66" fill="url(#wg13)"/><rect x="314" y="63.34" width="1.02" height="20.52" fill="url(#wg14)"/><rect x="315" y="64.9" width="1.02" height="17.4" fill="url(#wg14)"/><rect x="316" y="65.6" width="1.02" height="16" fill="url(#wg16)"/><rect x="317" y="63.41" width="1.02" height="20.38" fill="url(#wg13)"/><rect x="318" y="65.61" width="1.02" height="15.98" fill="url(#wg15)"/><rect x="319" y="64.55" width="1.02" height="18.09" fill="url(#wg15)"/><rect x="320" y="64.26" width="1.02" height="18.68" fill="url(#wg15)"/><rect x="321" y="65.06" width="1.02" height="17.09" fill="url(#wg13)"/><rect x="322" y="64.51" width="1.02" height="18.18" fill="url(#wg13)"/><rect x="323" y="64.17" width="1.02" height="18.86" fill="url(#wg13)"/><rect x="324" y="64.51" width="1.02" height="18.17" fill="url(#wg14)"/><rect x="325" y="65.35" width="1.02" height="16.51" fill="url(#wg13)"/><rect x="326" y="63.15" width="1.02" height="20.9" fill="url(#wg14)"/><rect x="327" y="64.65" width="1.02" height="17.91" fill="url(#wg15)"/><rect x="328" y="64.74" width="1.02" height="17.73" fill="url(#wg16)"/><rect x="329" y="63.42" width="1.02" height="20.37" fill="url(#wg16)"/><rect x="330" y="64.26" width="1.02" height="18.68" fill="url(#wg15)"/><rect x="331" y="65.38" width="1.02" height="16.44" fill="url(#wg15)"/><rect x="332" y="64.45" width="1.02" height="18.31" fill="url(#wg16)"/><rect x="333" y="63.59" width="1.02" height="20.03" fill="url(#wg14)"/><rect x="334" y="64.47" width="1.02" height="18.26" fill="url(#wg14)"/><rect x="335" y="64.72" width="1.02" height="17.76" fill="url(#wg15)"/><rect x="336" y="63.17" width="1.02" height="20.86" fill="url(#wg15)"/><rect x="337" y="65.23" width="1.02" height="16.74" fill="url(#wg13)"/><rect x="338" y="64.49" width="1.02" height="18.23" fill="url(#wg15)"/><rect x="339" y="63.83" width="1.02" height="19.54" fill="url(#wg13)"/><rect x="340" y="64.85" width="1.02" height="17.5" fill="url(#wg15)"/><rect x="341" y="64.45" width="1.02" height="18.3" fill="url(#wg16)"/><rect x="342" y="63.51" width="1.02" height="20.18" fill="url(#wg14)"/><rect x="343" y="65.18" width="1.02" height="16.85" fill="url(#wg16)"/><rect x="344" y="65.45" width="1.02" height="16.31" fill="url(#wg15)"/><rect x="345" y="63.07" width="1.02" height="21.07" fill="url(#wg13)"/><rect x="346" y="65.69" width="1.02" height="15.83" fill="url(#wg15)"/><rect x="347" y="65.27" width="1.02" height="16.66" fill="url(#wg14)"/><rect x="348" y="64.17" width="1.02" height="18.87" fill="url(#wg13)"/><rect x="349" y="64.57" width="1.02" height="18.07" fill="url(#wg15)"/><rect x="350" y="65.49" width="1.02" height="16.22" fill="url(#wg13)"/><rect x="351" y="63.17" width="1.02" height="20.86" fill="url(#wg14)"/><rect x="352" y="64.35" width="1.02" height="18.5" fill="url(#wg13)"/><rect x="353" y="64.5" width="1.02" height="18.21" fill="url(#wg16)"/><rect x="354" y="63.37" width="1.02" height="20.46" fill="url(#wg15)"/><rect x="355" y="63.13" width="1.02" height="20.95" fill="url(#wg13)"/><rect x="356" y="65.31" width="1.02" height="16.58" fill="url(#wg14)"/><rect x="357" y="65.64" width="1.02" height="15.91" fill="url(#wg14)"/><rect x="358" y="63.41" width="1.02" height="20.37" fill="url(#wg13)"/><rect x="359" y="64.81" width="1.02" height="17.58" fill="url(#wg13)"/><rect x="360" y="65.32" width="1.02" height="16.56" fill="url(#wg15)"/><rect x="361" y="64.15" width="1.02" height="18.89" fill="url(#wg14)"/><rect x="362" y="64.47" width="1.02" height="18.25" fill="url(#wg15)"/><rect x="363" y="64.75" width="1.02" height="17.7" fill="url(#wg15)"/><rect x="364" y="64.31" width="1.02" height="18.59" fill="url(#wg15)"/><rect x="365" y="67.91" width="1.02" height="11.39" fill="url(#wg13)"/><rect x="366" y="64.48" width="1.02" height="18.25" fill="url(#wg14)"/><rect x="367" y="63.05" width="1.02" height="21.1" fill="url(#wg15)"/><rect x="368" y="65.62" width="1.02" height="15.97" fill="url(#wg16)"/><rect x="369" y="65.05" width="1.02" height="17.11" fill="url(#wg16)"/><rect x="370" y="64.02" width="1.02" height="19.17" fill="url(#wg13)"/><rect x="371" y="64.86" width="1.02" height="17.48" fill="url(#wg14)"/><rect x="372" y="66.74" width="1.02" height="13.72" fill="url(#wg17)"/><rect x="373" y="64.56" width="1.02" height="18.08" fill="url(#wg18)"/><rect x="374" y="66.08" width="1.02" height="15.05" fill="url(#wg19)"/><rect x="375" y="66.28" width="1.02" height="14.63" fill="url(#wg19)"/><rect x="376" y="63.94" width="1.02" height="19.33" fill="url(#wg18)"/><rect x="377" y="64.13" width="1.02" height="18.93" fill="url(#wg17)"/><rect x="378" y="66.37" width="1.02" height="14.47" fill="url(#wg20)"/><rect x="379" y="65.94" width="1.02" height="15.32" fill="url(#wg17)"/><rect x="380" y="63.55" width="1.02" height="20.09" fill="url(#wg21)"/><rect x="381" y="66.81" width="1.02" height="13.58" fill="url(#wg20)"/><rect x="382" y="66.09" width="1.02" height="15.03" fill="url(#wg17)"/><rect x="383" y="64.38" width="1.02" height="18.44" fill="url(#wg20)"/><rect x="384" y="66.42" width="1.02" height="14.36" fill="url(#wg17)"/><rect x="385" y="65.88" width="1.02" height="15.43" fill="url(#wg18)"/><rect x="386" y="64.74" width="1.02" height="17.72" fill="url(#wg20)"/><rect x="387" y="66.17" width="1.02" height="14.86" fill="url(#wg18)"/><rect x="388" y="65.97" width="1.02" height="15.26" fill="url(#wg18)"/><rect x="389" y="64.29" width="1.02" height="18.63" fill="url(#wg20)"/><rect x="390" y="65.96" width="1.02" height="15.28" fill="url(#wg19)"/><rect x="391" y="66.31" width="1.02" height="14.58" fill="url(#wg20)"/><rect x="392" y="63.79" width="1.02" height="19.62" fill="url(#wg18)"/><rect x="393" y="66.82" width="1.02" height="13.56" fill="url(#wg21)"/><rect x="394" y="66.79" width="1.02" height="13.62" fill="url(#wg19)"/><rect x="395" y="64.63" width="1.02" height="17.94" fill="url(#wg18)"/><rect x="396" y="66.62" width="1.02" height="13.95" fill="url(#wg21)"/><rect x="397" y="66.9" width="1.02" height="13.39" fill="url(#wg19)"/><rect x="441" y="71.67" width="1.02" height="3.86" fill="url(#wg22)"/><rect x="442" y="71.02" width="1.02" height="5.16" fill="url(#wg23)"/><rect x="443" y="71.75" width="1.02" height="3.69" fill="url(#wg23)"/><rect x="444" y="72.35" width="1.02" height="2.51" fill="url(#wg23)"/><rect x="445" y="71.1" width="1.02" height="5" fill="url(#wg23)"/><rect x="446" y="71.13" width="1.02" height="4.93" fill="url(#wg22)"/><rect x="447" y="69.17" width="1.02" height="8.86" fill="url(#wg24)"/><rect x="448" y="68.07" width="1.02" height="11.07" fill="url(#wg24)"/><rect x="449" y="69.89" width="1.02" height="7.43" fill="url(#wg25)"/><rect x="450" y="69.34" width="1.02" height="8.52" fill="url(#wg25)"/><rect x="451" y="69.61" width="1.02" height="7.98" fill="url(#wg24)"/><rect x="452" y="67.86" width="1.02" height="11.47" fill="url(#wg25)"/><rect x="453" y="69.66" width="1.02" height="7.89" fill="url(#wg24)"/><rect x="454" y="69.23" width="1.02" height="8.74" fill="url(#wg24)"/><rect x="455" y="68.26" width="1.02" height="10.68" fill="url(#wg25)"/><rect x="456" y="69.48" width="1.02" height="8.23" fill="url(#wg25)"/><rect x="457" y="69.44" width="1.02" height="8.31" fill="url(#wg25)"/><rect x="458" y="67.92" width="1.02" height="11.36" fill="url(#wg25)"/><rect x="459" y="69.59" width="1.02" height="8.03" fill="url(#wg24)"/><rect x="460" y="69.65" width="1.02" height="7.89" fill="url(#wg25)"/><rect x="461" y="67.81" width="1.02" height="11.59" fill="url(#wg25)"/><rect x="462" y="67.69" width="1.02" height="11.81" fill="url(#wg24)"/><rect x="463" y="67.79" width="1.02" height="11.62" fill="url(#wg25)"/><rect x="464" y="65.82" width="1.02" height="15.55" fill="url(#wg25)"/><rect x="465" y="68.28" width="1.02" height="10.63" fill="url(#wg25)"/><rect x="466" y="69.46" width="1.02" height="8.29" fill="url(#wg25)"/><rect x="467" y="66.04" width="1.02" height="15.13" fill="url(#wg24)"/><rect x="468" y="67.91" width="1.02" height="11.39" fill="url(#wg24)"/><rect x="469" y="67.53" width="1.02" height="12.13" fill="url(#wg25)"/><rect x="470" y="66.12" width="1.02" height="14.96" fill="url(#wg24)"/><rect x="471" y="68.03" width="1.02" height="11.13" fill="url(#wg25)"/><rect x="472" y="68.13" width="1.02" height="10.94" fill="url(#wg25)"/><rect x="473" y="67.71" width="1.02" height="11.77" fill="url(#wg24)"/><rect x="474" y="66.38" width="1.02" height="14.45" fill="url(#wg24)"/><rect x="475" y="67.58" width="1.02" height="12.04" fill="url(#wg25)"/><rect x="475.5" y="64.72" width="1.02" height="17.77" fill="url(#wg13)"/><rect x="476.5" y="63.05" width="1.02" height="21.09" fill="url(#wg14)"/><rect x="477.5" y="65.06" width="1.02" height="17.07" fill="url(#wg16)"/><rect x="478.5" y="65.38" width="1.02" height="16.44" fill="url(#wg15)"/><rect x="479.5" y="66.75" width="1.02" height="13.71" fill="url(#wg15)"/><rect x="480.5" y="65.2" width="1.02" height="16.8" fill="url(#wg14)"/><rect x="481.5" y="64.51" width="1.02" height="18.17" fill="url(#wg15)"/><rect x="482.5" y="63.91" width="1.02" height="19.38" fill="url(#wg13)"/><rect x="483.5" y="64.02" width="1.02" height="19.15" fill="url(#wg13)"/><rect x="484.5" y="65.29" width="1.02" height="16.61" fill="url(#wg16)"/><rect x="485.5" y="64.53" width="1.02" height="18.14" fill="url(#wg15)"/><rect x="486.5" y="63.25" width="1.02" height="20.7" fill="url(#wg16)"/><rect x="487.5" y="64.95" width="1.02" height="17.3" fill="url(#wg15)"/><rect x="488.5" y="65.15" width="1.02" height="16.9" fill="url(#wg14)"/><rect x="489.5" y="63.95" width="1.02" height="19.31" fill="url(#wg13)"/><rect x="490.5" y="67.89" width="1.02" height="11.42" fill="url(#wg16)"/><rect x="491.5" y="65.31" width="1.02" height="16.59" fill="url(#wg14)"/><rect x="492.5" y="63.75" width="1.02" height="19.7" fill="url(#wg16)"/><rect x="493.5" y="64.85" width="1.02" height="17.49" fill="url(#wg16)"/><rect x="494.5" y="65.61" width="1.02" height="15.99" fill="url(#wg16)"/><rect x="495.5" y="63.92" width="1.02" height="19.36" fill="url(#wg15)"/><rect x="496.5" y="64.49" width="1.02" height="18.22" fill="url(#wg15)"/><rect x="497.5" y="67.3" width="1.02" height="12.59" fill="url(#wg14)"/><rect x="498.5" y="64.23" width="1.02" height="18.74" fill="url(#wg13)"/><rect x="499.5" y="64.89" width="1.02" height="17.41" fill="url(#wg15)"/><rect x="500.5" y="64.74" width="1.02" height="17.72" fill="url(#wg14)"/><rect x="501.5" y="63.33" width="1.02" height="20.54" fill="url(#wg16)"/><rect x="502.5" y="65.22" width="1.02" height="16.77" fill="url(#wg14)"/><rect x="503.5" y="65.42" width="1.02" height="16.36" fill="url(#wg15)"/><rect x="504.5" y="63.06" width="1.02" height="21.07" fill="url(#wg16)"/><rect x="505.5" y="64.03" width="1.02" height="19.14" fill="url(#wg15)"/><rect x="506.5" y="65.2" width="1.02" height="16.79" fill="url(#wg13)"/><rect x="507.5" y="67.02" width="1.02" height="13.16" fill="url(#wg15)"/><rect x="508.5" y="62.96" width="1.02" height="21.29" fill="url(#wg16)"/><rect x="509.5" y="65.05" width="1.02" height="17.09" fill="url(#wg13)"/><rect x="510.5" y="65.67" width="1.02" height="15.87" fill="url(#wg13)"/><rect x="511.5" y="63.27" width="1.02" height="20.65" fill="url(#wg13)"/><rect x="512.5" y="65.19" width="1.02" height="16.81" fill="url(#wg15)"/><rect x="513.5" y="64.86" width="1.02" height="17.48" fill="url(#wg16)"/><rect x="514.5" y="63.54" width="1.02" height="20.13" fill="url(#wg13)"/><rect x="515.5" y="64.47" width="1.02" height="18.26" fill="url(#wg15)"/><rect x="516.5" y="65.62" width="1.02" height="15.96" fill="url(#wg14)"/><rect x="517.5" y="63.99" width="1.02" height="19.22" fill="url(#wg14)"/><rect x="518.5" y="65.34" width="1.02" height="16.53" fill="url(#wg15)"/><rect x="519.5" y="65.13" width="1.02" height="16.94" fill="url(#wg15)"/><rect x="520.5" y="63.12" width="1.02" height="20.97" fill="url(#wg15)"/><rect x="521.5" y="65.23" width="1.02" height="16.74" fill="url(#wg16)"/><rect x="522.5" y="64.63" width="1.02" height="17.94" fill="url(#wg16)"/><rect x="523.5" y="64.37" width="1.02" height="18.47" fill="url(#wg15)"/><rect x="524.5" y="64.57" width="1.02" height="18.06" fill="url(#wg14)"/><rect x="525.5" y="65.44" width="1.02" height="16.33" fill="url(#wg16)"/><rect x="526.5" y="63.69" width="1.02" height="19.82" fill="url(#wg13)"/><rect x="527.5" y="64.92" width="1.02" height="17.37" fill="url(#wg15)"/><rect x="528.5" y="67.6" width="1.02" height="12" fill="url(#wg15)"/><rect x="529.5" y="63.24" width="1.02" height="20.71" fill="url(#wg16)"/><rect x="530.5" y="64.08" width="1.02" height="19.05" fill="url(#wg15)"/><rect x="531.5" y="64.64" width="1.02" height="17.92" fill="url(#wg15)"/><rect x="532.5" y="64.51" width="1.02" height="18.19" fill="url(#wg14)"/><rect x="533.5" y="63.06" width="1.02" height="21.08" fill="url(#wg14)"/><rect x="534.5" y="65.14" width="1.02" height="16.92" fill="url(#wg13)"/><rect x="535.5" y="65.41" width="1.02" height="16.39" fill="url(#wg13)"/><rect x="536.5" y="64.19" width="1.02" height="18.82" fill="url(#wg16)"/><rect x="537.5" y="64.83" width="1.02" height="17.54" fill="url(#wg14)"/><rect x="538.5" y="64.71" width="1.02" height="17.78" fill="url(#wg15)"/><rect x="539.5" y="64.34" width="1.02" height="18.51" fill="url(#wg14)"/><rect x="540.5" y="67.88" width="1.02" height="11.43" fill="url(#wg15)"/><rect x="541.5" y="64.45" width="1.02" height="18.3" fill="url(#wg14)"/><rect x="542.5" y="63.7" width="1.02" height="19.81" fill="url(#wg13)"/><rect x="543.5" y="67.21" width="1.02" height="12.77" fill="url(#wg14)"/><rect x="544.5" y="64.64" width="1.02" height="17.92" fill="url(#wg14)"/><rect x="545.5" y="63.27" width="1.02" height="20.66" fill="url(#wg14)"/><rect x="546.5" y="65.49" width="1.02" height="16.22" fill="url(#wg16)"/><rect x="547.5" y="65.32" width="1.02" height="16.56" fill="url(#wg15)"/><rect x="548.5" y="63.84" width="1.02" height="19.53" fill="url(#wg15)"/><rect x="549.5" y="64.98" width="1.02" height="17.24" fill="url(#wg14)"/><rect x="550.5" y="64.44" width="1.02" height="18.31" fill="url(#wg16)"/><rect x="551.5" y="63.58" width="1.02" height="20.04" fill="url(#wg14)"/><rect x="552.5" y="64.04" width="1.02" height="19.12" fill="url(#wg16)"/><rect x="553.5" y="65.68" width="1.02" height="15.85" fill="url(#wg15)"/><rect x="554.5" y="64.05" width="1.02" height="19.1" fill="url(#wg14)"/><rect x="555.5" y="66.33" width="1.02" height="14.55" fill="url(#wg14)"/><rect x="556.5" y="65.64" width="1.02" height="15.93" fill="url(#wg13)"/><rect x="557.5" y="64.69" width="1.02" height="17.83" fill="url(#wg15)"/><rect x="558.5" y="63.72" width="1.02" height="19.75" fill="url(#wg13)"/><rect x="559.5" y="64.95" width="1.02" height="17.29" fill="url(#wg15)"/><rect x="560.5" y="64.41" width="1.02" height="18.37" fill="url(#wg14)"/><rect x="561.5" y="63.51" width="1.02" height="20.17" fill="url(#wg15)"/><rect x="562.5" y="65.62" width="1.02" height="15.97" fill="url(#wg15)"/><rect x="563.5" y="65.56" width="1.02" height="16.08" fill="url(#wg13)"/><rect x="564.5" y="63.16" width="1.02" height="20.89" fill="url(#wg13)"/><rect x="565.5" y="68" width="1.02" height="11.19" fill="url(#wg14)"/><rect x="566.5" y="67.55" width="1.02" height="12.1" fill="url(#wg16)"/><rect x="567.5" y="64.22" width="1.02" height="18.75" fill="url(#wg13)"/><rect x="568.5" y="64.44" width="1.02" height="18.32" fill="url(#wg13)"/><rect x="569.5" y="65.06" width="1.02" height="17.07" fill="url(#wg16)"/><rect x="570.5" y="64.01" width="1.02" height="19.19" fill="url(#wg13)"/><rect x="571.5" y="65.19" width="1.02" height="16.83" fill="url(#wg14)"/><rect x="572.5" y="64.78" width="1.02" height="17.64" fill="url(#wg15)"/><rect x="573.5" y="63.03" width="1.02" height="21.15" fill="url(#wg14)"/><rect x="574.5" y="64.96" width="1.02" height="17.28" fill="url(#wg13)"/><rect x="575.5" y="67.55" width="1.02" height="12.09" fill="url(#wg16)"/><rect x="576.5" y="63.36" width="1.02" height="20.48" fill="url(#wg16)"/><rect x="577" y="65.31" width="1.02" height="16.58" fill="url(#wg26)"/><rect x="578" y="66.59" width="1.02" height="14.02" fill="url(#wg27)"/><rect x="579" y="66.78" width="1.02" height="13.64" fill="url(#wg28)"/><rect x="580" y="64.38" width="1.02" height="18.45" fill="url(#wg28)"/><rect x="581" y="67.26" width="1.02" height="12.69" fill="url(#wg28)"/><rect x="582" y="66.35" width="1.02" height="14.5" fill="url(#wg29)"/><rect x="583" y="65.18" width="1.02" height="16.84" fill="url(#wg29)"/><rect x="584" y="66.86" width="1.02" height="13.48" fill="url(#wg29)"/><rect x="585" y="66.8" width="1.02" height="13.6" fill="url(#wg26)"/><rect x="586" y="64.83" width="1.02" height="17.54" fill="url(#wg29)"/><rect x="587" y="67" width="1.02" height="13.19" fill="url(#wg26)"/><rect x="588" y="67.24" width="1.02" height="12.73" fill="url(#wg28)"/><rect x="589" y="64.48" width="1.02" height="18.23" fill="url(#wg26)"/><rect x="590" y="65.11" width="1.02" height="16.98" fill="url(#wg26)"/><rect x="591" y="67.15" width="1.02" height="12.9" fill="url(#wg29)"/><rect x="592" y="66.39" width="1.02" height="14.41" fill="url(#wg29)"/><rect x="593" y="64.59" width="1.02" height="18.03" fill="url(#wg27)"/><rect x="594" y="66.76" width="1.02" height="13.68" fill="url(#wg26)"/><rect x="595" y="66.76" width="1.02" height="13.68" fill="url(#wg29)"/><rect x="596" y="64.95" width="1.02" height="17.3" fill="url(#wg29)"/><rect x="597" y="66.89" width="1.02" height="13.42" fill="url(#wg29)"/><rect x="598" y="66.83" width="1.02" height="13.54" fill="url(#wg28)"/><rect x="599" y="64.06" width="1.02" height="19.08" fill="url(#wg28)"/><rect x="600" y="66.98" width="1.02" height="13.24" fill="url(#wg29)"/><rect x="601" y="66.46" width="1.02" height="14.27" fill="url(#wg28)"/><rect x="602" y="64.3" width="1.02" height="18.6" fill="url(#wg27)"/><rect x="603" y="66.68" width="1.02" height="13.85" fill="url(#wg29)"/><rect x="604" y="67.22" width="1.02" height="12.75" fill="url(#wg28)"/><rect x="605" y="64.92" width="1.02" height="17.35" fill="url(#wg29)"/><rect x="606" y="66.91" width="1.02" height="13.39" fill="url(#wg28)"/><rect x="607" y="67.26" width="1.02" height="12.68" fill="url(#wg28)"/><rect x="608" y="64.08" width="1.02" height="19.05" fill="url(#wg26)"/><rect x="609" y="67.22" width="1.02" height="12.76" fill="url(#wg27)"/><rect x="610" y="66.89" width="1.02" height="13.41" fill="url(#wg29)"/><rect x="611" y="64.47" width="1.02" height="18.26" fill="url(#wg29)"/><rect x="612" y="64.09" width="1.02" height="19.02" fill="url(#wg26)"/><rect x="613" y="66.94" width="1.02" height="13.33" fill="url(#wg27)"/><rect x="614" y="65.19" width="1.02" height="16.82" fill="url(#wg28)"/><rect x="615" y="64.46" width="1.02" height="18.27" fill="url(#wg26)"/><rect x="616" y="66.88" width="1.02" height="13.44" fill="url(#wg26)"/><rect x="617" y="66.33" width="1.02" height="14.54" fill="url(#wg27)"/><rect x="618" y="64.16" width="1.02" height="18.88" fill="url(#wg27)"/><rect x="619" y="66.94" width="1.02" height="13.33" fill="url(#wg27)"/><rect x="620" y="66.99" width="1.02" height="13.21" fill="url(#wg28)"/><rect x="621" y="67.69" width="1.02" height="11.82" fill="url(#wg26)"/><rect x="622" y="67.01" width="1.02" height="13.18" fill="url(#wg29)"/><rect x="623" y="67.04" width="1.02" height="13.13" fill="url(#wg29)"/><rect x="624" y="64.73" width="1.02" height="17.74" fill="url(#wg28)"/><rect x="625" y="67.19" width="1.02" height="12.82" fill="url(#wg28)"/><rect x="626" y="66.87" width="1.02" height="13.46" fill="url(#wg27)"/><rect x="627" y="65.12" width="1.02" height="16.96" fill="url(#wg26)"/><rect x="628" y="67.06" width="1.02" height="13.07" fill="url(#wg27)"/><rect x="629" y="66.51" width="1.02" height="14.19" fill="url(#wg29)"/><rect x="630" y="64.56" width="1.02" height="18.07" fill="url(#wg29)"/><rect x="631" y="66.61" width="1.02" height="13.97" fill="url(#wg28)"/><rect x="632" y="69.06" width="1.02" height="9.08" fill="url(#wg26)"/><rect x="633" y="64.49" width="1.02" height="18.23" fill="url(#wg29)"/><rect x="634" y="68.77" width="1.02" height="9.65" fill="url(#wg29)"/><rect x="635" y="67.19" width="1.02" height="12.82" fill="url(#wg26)"/><rect x="636" y="64.85" width="1.02" height="17.51" fill="url(#wg29)"/><rect x="637" y="64.46" width="1.02" height="18.27" fill="url(#wg28)"/><rect x="638" y="67.32" width="1.02" height="12.55" fill="url(#wg29)"/><rect x="639" y="66.34" width="1.02" height="14.52" fill="url(#wg29)"/><rect x="640" y="64.96" width="1.02" height="17.28" fill="url(#wg17)"/><rect x="641" y="67.12" width="1.02" height="12.97" fill="url(#wg21)"/><rect x="642" y="67.13" width="1.02" height="12.94" fill="url(#wg20)"/><rect x="643" y="65.31" width="1.02" height="16.59" fill="url(#wg20)"/><rect x="644" y="66.92" width="1.02" height="13.37" fill="url(#wg17)"/><rect x="645" y="68.71" width="1.02" height="9.77" fill="url(#wg21)"/><rect x="646" y="65.51" width="1.02" height="16.17" fill="url(#wg19)"/><rect x="647" y="67.29" width="1.02" height="12.63" fill="url(#wg21)"/><rect x="648" y="67.22" width="1.02" height="12.76" fill="url(#wg20)"/><rect x="649" y="65.01" width="1.02" height="17.18" fill="url(#wg19)"/><rect x="650" y="66.81" width="1.02" height="13.58" fill="url(#wg19)"/><rect x="651" y="66.8" width="1.02" height="13.6" fill="url(#wg21)"/><rect x="652" y="65.02" width="1.02" height="17.15" fill="url(#wg19)"/><rect x="653" y="66.72" width="1.02" height="13.76" fill="url(#wg21)"/><rect x="654" y="66.91" width="1.02" height="13.39" fill="url(#wg20)"/><rect x="655" y="64.34" width="1.02" height="18.52" fill="url(#wg20)"/><rect x="656" y="69.2" width="1.02" height="8.81" fill="url(#wg20)"/><rect x="657" y="67.27" width="1.02" height="12.67" fill="url(#wg19)"/><rect x="658" y="64.91" width="1.02" height="17.37" fill="url(#wg17)"/><rect x="659" y="64.89" width="1.02" height="17.42" fill="url(#wg20)"/><rect x="660" y="66.69" width="1.02" height="13.83" fill="url(#wg21)"/><rect x="661" y="64.7" width="1.02" height="17.81" fill="url(#wg21)"/><rect x="662" y="64.72" width="1.02" height="17.76" fill="url(#wg21)"/><rect x="663" y="67.25" width="1.02" height="12.7" fill="url(#wg17)"/><rect x="664" y="66.47" width="1.02" height="14.27" fill="url(#wg20)"/><rect x="665" y="64.6" width="1.02" height="18" fill="url(#wg21)"/><rect x="666" y="67.09" width="1.02" height="13.03" fill="url(#wg19)"/><rect x="667" y="69.02" width="1.02" height="9.16" fill="url(#wg20)"/><rect x="668" y="65.12" width="1.02" height="16.96" fill="url(#wg17)"/><rect x="669" y="67.06" width="1.02" height="13.07" fill="url(#wg20)"/><rect x="670" y="66.56" width="1.02" height="14.08" fill="url(#wg19)"/><rect x="671" y="65.34" width="1.02" height="16.52" fill="url(#wg19)"/><rect x="672" y="69.01" width="1.02" height="9.17" fill="url(#wg17)"/><rect x="673" y="66.93" width="1.02" height="13.34" fill="url(#wg18)"/><rect x="674" y="64.51" width="1.02" height="18.18" fill="url(#wg17)"/><rect x="675" y="66.66" width="1.02" height="13.87" fill="url(#wg21)"/><rect x="676" y="66.57" width="1.02" height="14.05" fill="url(#wg17)"/><rect x="677" y="64.55" width="1.02" height="18.1" fill="url(#wg21)"/><rect x="678" y="67.21" width="1.02" height="12.79" fill="url(#wg20)"/><rect x="679" y="67.26" width="1.02" height="12.67" fill="url(#wg19)"/><rect x="680" y="65.03" width="1.02" height="17.13" fill="url(#wg21)"/><rect x="681" y="67.02" width="1.02" height="13.15" fill="url(#wg18)"/><rect x="682" y="67.27" width="1.02" height="12.65" fill="url(#wg17)"/><path d="M242 73.6H292M398 73.6H441" stroke="#eaa8b8" stroke-width="1.7"/><path d="M243 73.6L244.3 67.4L247 71L251.5 73.6L247 76.2L244.3 79.8Z" fill="#f3dede"/><path d="M255 73.6Q257.1 72.48 258 68Q258.9 72.48 261 73.6Q258.9 74.72 258 79.2Q257.1 74.72 255 73.6Z" fill="#7fdde6"/><path d="M262.5 73.6Q263.9 73.24 264.5 71.8Q265.1 73.24 266.5 73.6Q265.1 73.96 264.5 75.4Q263.9 73.96 262.5 73.6Z" fill="#efe6ee"/><path d="M268.2 73.6Q270.51 72.48 271.5 68Q272.49 72.48 274.8 73.6Q272.49 74.72 271.5 79.2Q270.51 74.72 268.2 73.6Z" fill="#86e3a4"/><path d="M275.5 73.6Q276.9 73.24 277.5 71.8Q278.1 73.24 279.5 73.6Q278.1 73.96 277.5 75.4Q276.9 73.96 275.5 73.6Z" fill="#efe6ee"/><path d="M280.5 73.6Q282.6 72.56 283.5 68.4Q284.4 72.56 286.5 73.6Q284.4 74.64 283.5 78.8Q282.6 74.64 280.5 73.6Z" fill="#7fdde6"/><path d="M287.3 73.6Q288.84 73 289.5 70.6Q290.16 73 291.7 73.6Q290.16 74.2 289.5 76.6Q288.84 74.2 287.3 73.6Z" fill="#efe6ee"/><path d="M399 73.6Q401.1 72.7 402 69.1Q402.9 72.7 405 73.6Q402.9 74.5 402 78.1Q401.1 74.5 399 73.6Z" fill="#efe6ee"/><path d="M406 73.6Q407.4 73.24 408 71.8Q408.6 73.24 410 73.6Q408.6 73.96 408 75.4Q407.4 73.96 406 73.6Z" fill="#f0a8c8"/><path d="M410.5 73.6Q412.6 72.6 413.5 68.6Q414.4 72.6 416.5 73.6Q414.4 74.6 413.5 78.6Q412.6 74.6 410.5 73.6Z" fill="#7fdde6"/><path d="M417.5 73.6Q418.9 73.24 419.5 71.8Q420.1 73.24 421.5 73.6Q420.1 73.96 419.5 75.4Q418.9 73.96 417.5 73.6Z" fill="#efe6ee"/><path d="M422.5 73.6Q424.6 72.6 425.5 68.6Q426.4 72.6 428.5 73.6Q426.4 74.6 425.5 78.6Q424.6 74.6 422.5 73.6Z" fill="#7fdde6"/><path d="M430 73.6Q431.4 73.24 432 71.8Q432.6 73.24 434 73.6Q432.6 73.96 432 75.4Q431.4 73.96 430 73.6Z" fill="#efe6ee"/><path d="M435.8 73.6Q437.34 72.92 438 70.2Q438.66 72.92 440.2 73.6Q438.66 74.28 438 77Q437.34 74.28 435.8 73.6Z" fill="#86e3a4"/><path d="M241.8 63.1V84.1M440.5 63.1V84.1" stroke="#8a9096" stroke-width="0.9"/><path d="M640.3 63.6V83.6" stroke="#c8ccd8" stroke-opacity="0.6" stroke-width="0.9"/><path d="M683 73.6L684.2 69.6L686.5 71.8L690 72.9L702 73.6L690 74.3L686.5 75.4L684.2 77.6Z" fill="#ff7a98"/><path d="M687 73.6H690" stroke="#d8f0f0" stroke-width="1.6"/><path d="M690 73.6H702" stroke="#5fd070" stroke-width="1"/><path d="M452.02 97.6V139.4M483.34 97.6V139.4M514.66 97.6V139.4M545.98 97.6V139.4M577.3 97.6V139.4M608.62 97.6V139.4M639.94 97.6V139.4M671.26 97.6V139.4" stroke="#7b8084" stroke-width="0.9"/><path d="M423 118.4H702" stroke="#7fc4c6" stroke-width="0.8"/><filter id="soft" x="-5%" y="-20%" width="110%" height="140%"><feGaussianBlur stdDeviation="0.45"/></filter><g filter="url(#soft)"><path d="M422.4 118.4L423 113.9L423.7 114.77L424.41 115.56L425.11 116.28L425.81 116.92L426.52 117.46L427.22 117.95L427.92 118.03L428.62 118.1L428.62 118.7L427.92 118.78L427.22 118.85L426.52 119.34L425.81 119.88L425.11 120.52L424.41 121.24L423.7 122.03L423 122.9Z" fill="#a8d8dc"/><path d="M436.4 118.4L437 110.4L437.7 111.94L438.41 113.35L439.11 114.63L439.81 115.76L440.52 116.73L441.22 117.53L441.92 118.03L442.62 118.1L442.62 118.7L441.92 118.78L441.22 119.27L440.52 120.07L439.81 121.04L439.11 122.17L438.41 123.45L437.7 124.86L437 126.4Z" fill="#5b78d8"/><path d="M452.2 118.4L452.8 102.4L453.58 105.48L454.36 108.3L455.14 110.86L455.93 113.12L456.71 115.07L457.49 116.66L458.27 118.03L459.05 118.1L459.05 118.7L458.27 118.78L457.49 120.14L456.71 121.73L455.93 123.68L455.14 125.94L454.36 128.5L453.58 131.32L452.8 134.4Z" fill="#d4d4e0"/><path d="M454.9 118.4L455.5 109.4L456.36 111.13L457.22 112.72L458.08 114.16L458.94 115.43L459.8 116.53L460.66 117.42L461.52 118.03L462.38 118.1L462.38 118.7L461.52 118.78L460.66 119.38L459.8 120.27L458.94 121.37L458.08 122.64L457.22 124.08L456.36 125.67L455.5 127.4Z" fill="#b8a4dc"/><path d="M458.4 118.4L459 115.4L459.62 115.98L460.25 116.51L460.88 116.99L461.5 117.41L462.12 117.78L462.75 117.95L463.38 118.03L464 118.1L464 118.7L463.38 118.78L462.75 118.85L462.12 119.02L461.5 119.39L460.88 119.81L460.25 120.29L459.62 120.82L459 121.4Z" fill="#d87ea6"/><path d="M467.9 118.4L468.5 110.9L469.2 112.34L469.91 113.67L470.61 114.86L471.31 115.93L472.02 116.84L472.72 117.58L473.42 118.03L474.12 118.1L474.12 118.7L473.42 118.78L472.72 119.22L472.02 119.96L471.31 120.87L470.61 121.94L469.91 123.13L469.2 124.46L468.5 125.9Z" fill="#5b78d8"/><path d="M477.4 118.4L478 110.4L478.55 111.94L479.09 113.35L479.64 114.63L480.19 115.76L480.73 116.73L481.28 117.53L481.83 118.03L482.38 118.1L482.38 118.7L481.83 118.78L481.28 119.27L480.73 120.07L480.19 121.04L479.64 122.17L479.09 123.45L478.55 124.86L478 126.4Z" fill="#a9dccb"/><path d="M480.4 118.4L481 113.4L481.47 114.36L481.94 115.24L482.41 116.04L482.88 116.75L483.34 117.36L483.81 117.95L484.28 118.03L484.75 118.1L484.75 118.7L484.28 118.78L483.81 118.85L483.34 119.44L482.88 120.05L482.41 120.76L481.94 121.56L481.47 122.44L481 123.4Z" fill="#d88a8a"/><path d="M483.2 118.4L483.8 111.4L484.74 112.75L485.68 113.98L486.61 115.1L487.55 116.09L488.49 116.94L489.43 117.64L490.36 118.03L491.3 118.1L491.3 118.7L490.36 118.78L489.43 119.16L488.49 119.86L487.55 120.71L486.61 121.7L485.68 122.82L484.74 124.05L483.8 125.4Z" fill="#a77fd2"/><path d="M499.1 118.4L499.7 110.4L500.4 111.94L501.11 113.35L501.81 114.63L502.51 115.76L503.22 116.73L503.92 117.53L504.62 118.03L505.32 118.1L505.32 118.7L504.62 118.78L503.92 119.27L503.22 120.07L502.51 121.04L501.81 122.17L501.11 123.45L500.4 124.86L499.7 126.4Z" fill="#5b78d8"/><path d="M514.7 118.4L515.3 102.4L515.85 105.48L516.39 108.3L516.94 110.86L517.49 113.12L518.03 115.07L518.58 116.66L519.13 118.03L519.67 118.1L519.67 118.7L519.13 118.78L518.58 120.14L518.03 121.73L517.49 123.68L516.94 125.94L516.39 128.5L515.85 131.32L515.3 134.4Z" fill="#d4d4e0"/><path d="M516.4 118.4L517 108.4L518.09 110.32L519.19 112.09L520.28 113.69L521.38 115.1L522.47 116.32L523.56 117.31L524.66 118.03L525.75 118.1L525.75 118.7L524.66 118.78L523.56 119.49L522.47 120.48L521.38 121.7L520.28 123.11L519.19 124.71L518.09 126.48L517 128.4Z" fill="#c79ad0"/><path d="M530.1 118.4L530.7 110.4L531.48 111.94L532.26 113.35L533.04 114.63L533.83 115.76L534.61 116.73L535.39 117.53L536.17 118.03L536.95 118.1L536.95 118.7L536.17 118.78L535.39 119.27L534.61 120.07L533.83 121.04L533.04 122.17L532.26 123.45L531.48 124.86L530.7 126.4Z" fill="#5b78d8"/><path d="M546.2 118.4L546.8 112.9L547.58 113.96L548.36 114.93L549.14 115.81L549.92 116.59L550.71 117.25L551.49 117.95L552.27 118.03L553.05 118.1L553.05 118.7L552.27 118.78L551.49 118.85L550.71 119.55L549.92 120.21L549.14 120.99L548.36 121.87L547.58 122.84L546.8 123.9Z" fill="#6f9fdc"/><path d="M561.6 118.4L562.2 110.4L562.9 111.94L563.61 113.35L564.31 114.63L565.01 115.76L565.72 116.73L566.42 117.53L567.12 118.03L567.83 118.1L567.83 118.7L567.12 118.78L566.42 119.27L565.72 120.07L565.01 121.04L564.31 122.17L563.61 123.45L562.9 124.86L562.2 126.4Z" fill="#5b78d8"/><path d="M577.7 118.4L578.3 107.4L578.85 109.52L579.39 111.46L579.94 113.21L580.49 114.77L581.03 116.11L581.58 117.2L582.13 118.03L582.67 118.1L582.67 118.7L582.13 118.78L581.58 119.6L581.03 120.69L580.49 122.03L579.94 123.59L579.39 125.34L578.85 127.28L578.3 129.4Z" fill="#d4d4e0"/><path d="M578.9 118.4L579.5 109.4L580.59 111.13L581.69 112.72L582.78 114.16L583.88 115.43L584.97 116.53L586.06 117.42L587.16 118.03L588.25 118.1L588.25 118.7L587.16 118.78L586.06 119.38L584.97 120.27L583.88 121.37L582.78 122.64L581.69 124.08L580.59 125.67L579.5 127.4Z" fill="#b8a4dc"/><path d="M583.4 118.4L584 115.9L584.62 116.38L585.25 116.82L585.88 117.22L586.5 117.58L587.12 117.88L587.75 117.95L588.38 118.03L589 118.1L589 118.7L588.38 118.78L587.75 118.85L587.12 118.93L586.5 119.22L585.88 119.58L585.25 119.98L584.62 120.42L584 120.9Z" fill="#d87ea6"/><path d="M593.1 118.4L593.7 109.4L594.4 111.13L595.11 112.72L595.81 114.16L596.51 115.43L597.22 116.53L597.92 117.42L598.62 118.03L599.33 118.1L599.33 118.7L598.62 118.78L597.92 119.38L597.22 120.27L596.51 121.37L595.81 122.64L595.11 124.08L594.4 125.67L593.7 127.4Z" fill="#5b78d8"/><path d="M603 118.4L603.6 108.4L604.07 110.32L604.54 112.09L605.01 113.69L605.48 115.1L605.94 116.32L606.41 117.31L606.88 118.03L607.35 118.1L607.35 118.7L606.88 118.78L606.41 119.49L605.94 120.48L605.48 121.7L605.01 123.11L604.54 124.71L604.07 126.48L603.6 128.4Z" fill="#a9dccb"/><path d="M605.4 118.4L606 112.4L606.47 113.55L606.94 114.61L607.41 115.57L607.88 116.42L608.34 117.15L608.81 117.75L609.28 118.03L609.75 118.1L609.75 118.7L609.28 118.78L608.81 119.05L608.34 119.65L607.88 120.38L607.41 121.23L606.94 122.19L606.47 123.25L606 124.4Z" fill="#d87ea6"/><path d="M608.4 118.4L609 111.6L609.94 112.91L610.88 114.11L611.81 115.19L612.75 116.16L613.69 116.98L614.62 117.66L615.56 118.03L616.5 118.1L616.5 118.7L615.56 118.78L614.62 119.14L613.69 119.82L612.75 120.64L611.81 121.61L610.88 122.69L609.94 123.89L609 125.2Z" fill="#a77fd2"/><path d="M624.6 118.4L625.2 109.4L625.67 111.13L626.14 112.72L626.61 114.16L627.08 115.43L627.54 116.53L628.01 117.42L628.48 118.03L628.95 118.1L628.95 118.7L628.48 118.78L628.01 119.38L627.54 120.27L627.08 121.37L626.61 122.64L626.14 124.08L625.67 125.67L625.2 127.4Z" fill="#b8a4dc"/><path d="M625.9 118.4L626.5 111.4L627.75 112.75L629 113.98L630.25 115.1L631.5 116.09L632.75 116.94L634 117.64L635.25 118.03L636.5 118.1L636.5 118.7L635.25 118.78L634 119.16L632.75 119.86L631.5 120.71L630.25 121.7L629 122.82L627.75 124.05L626.5 125.4Z" fill="#d87ea6"/><path d="M639.7 118.4L640.3 102.4L640.77 105.48L641.24 108.3L641.71 110.86L642.17 113.12L642.64 115.07L643.11 116.66L643.58 118.03L644.05 118.1L644.05 118.7L643.58 118.78L643.11 120.14L642.64 121.73L642.17 123.68L641.71 125.94L641.24 128.5L640.77 131.32L640.3 134.4Z" fill="#8fa2e0"/><path d="M641.2 118.4L641.8 108.4L642.89 110.32L643.99 112.09L645.08 113.69L646.17 115.1L647.27 116.32L648.36 117.31L649.46 118.03L650.55 118.1L650.55 118.7L649.46 118.78L648.36 119.49L647.27 120.48L646.17 121.7L645.08 123.11L643.99 124.71L642.89 126.48L641.8 128.4Z" fill="#b8a4dc"/><path d="M645.4 118.4L646 115.4L646.62 115.98L647.25 116.51L647.88 116.99L648.5 117.41L649.12 117.78L649.75 117.95L650.38 118.03L651 118.1L651 118.7L650.38 118.78L649.75 118.85L649.12 119.02L648.5 119.39L647.88 119.81L647.25 120.29L646.62 120.82L646 121.4Z" fill="#d87ea6"/><path d="M650.2 118.4L650.8 113.4L651.24 114.36L651.67 115.24L652.11 116.04L652.55 116.75L652.99 117.36L653.42 117.95L653.86 118.03L654.3 118.1L654.3 118.7L653.86 118.78L653.42 118.85L652.99 119.44L652.55 120.05L652.11 120.76L651.67 121.56L651.24 122.44L650.8 123.4Z" fill="#a9dccb"/><path d="M652.4 118.4L653 113.9L653.47 114.77L653.94 115.56L654.41 116.28L654.88 116.92L655.34 117.46L655.81 117.95L656.28 118.03L656.75 118.1L656.75 118.7L656.28 118.78L655.81 118.85L655.34 119.34L654.88 119.88L654.41 120.52L653.94 121.24L653.47 122.03L653 122.9Z" fill="#d88a8a"/><path d="M655.4 118.4L656 110.4L656.94 111.94L657.88 113.35L658.81 114.63L659.75 115.76L660.69 116.73L661.62 117.53L662.56 118.03L663.5 118.1L663.5 118.7L662.56 118.78L661.62 119.27L660.69 120.07L659.75 121.04L658.81 122.17L657.88 123.45L656.94 124.86L656 126.4Z" fill="#a77fd2"/><path d="M665.6 118.4L666.2 112.4L666.9 113.55L667.61 114.61L668.31 115.57L669.01 116.42L669.72 117.15L670.42 117.75L671.12 118.03L671.83 118.1L671.83 118.7L671.12 118.78L670.42 119.05L669.72 119.65L669.01 120.38L668.31 121.23L667.61 122.19L666.9 123.25L666.2 124.4Z" fill="#7fcfd4"/><path d="M671.9 118.4L672.5 112.4L673.28 113.55L674.06 114.61L674.84 115.57L675.62 116.42L676.41 117.15L677.19 117.75L677.97 118.03L678.75 118.1L678.75 118.7L677.97 118.78L677.19 119.05L676.41 119.65L675.62 120.38L674.84 121.23L674.06 122.19L673.28 123.25L672.5 124.4Z" fill="#6f8fdc"/><path d="M686.8 118.4L687.4 110.4L688.18 111.94L688.96 113.35L689.74 114.63L690.52 115.76L691.31 116.73L692.09 117.53L692.87 118.03L693.65 118.1L693.65 118.7L692.87 118.78L692.09 119.27L691.31 120.07L690.52 121.04L689.74 122.17L688.96 123.45L688.18 124.86L687.4 126.4Z" fill="#5b78d8"/><path d="M427.3 118.4L428.5 115.9L429.7 118.4L428.5 120.9Z" fill="#8fd39a"/><path d="M429.8 118.4L431 115.8L432.2 118.4L431 121Z" fill="#d4d4e0"/><path d="M432.3 118.4L433.5 115.6L434.7 118.4L433.5 121.2Z" fill="#a9dccb"/><path d="M445.6 118.4L447 116.2L448.4 118.4L447 120.6Z" fill="#8fd39a"/><path d="M448.6 118.4L450 116.2L451.4 118.4L450 120.6Z" fill="#8fd39a"/><path d="M471 118.4L473 116.9L475 118.4L473 119.9Z" fill="#a9dccb"/><path d="M491.5 118.4L494 115.4L496.5 118.4L494 121.4Z" fill="#7fcfd4"/><path d="M555 118.4L557 116.2L559 118.4L557 120.6Z" fill="#6f9fdc"/><path d="M617.6 118.4L620 115.6L622.4 118.4L620 121.2Z" fill="#7fcfd4"/><path d="M680.1 118.4L682.3 116.2L684.5 118.4L682.3 120.6Z" fill="#7fcfd4"/></g><path d="M692 118.4H702" stroke="#7fdc9a" stroke-width="0.9"/><path d="M702.3 99.6V137.4" stroke="#9cc4c4" stroke-opacity="0.8" stroke-width="1.2"/><rect x="421" y="97.6" width="1.6" height="42" fill="#b08760"/><rect x="421.4" y="98.3" width="14.8" height="9.7" fill="#a07c5e"/><rect x="140" y="63.2" width="1.2" height="21.6" fill="#a8733f"/><rect x="140.6" y="64" width="11.4" height="7.8" rx="0.8" fill="#cd8a4b" stroke="#8a5a2c" stroke-width="0.5"/><path d="M372.15 168.41A11.1 11.1 0 1 1 383.25 168.41" fill="none" stroke="#43484d" stroke-width="3.3" stroke-linecap="round"/><path d="M372.15 168.41A11.1 11.1 0 1 1 387.19 153.05" fill="none" stroke="#cd8a4b" stroke-width="3.3" stroke-linecap="round"/><circle cx="387.19" cy="153.05" r="3.1" fill="#cd8a4b"/><path d="M416.05 168.41A11.1 11.1 0 1 1 427.15 168.41" fill="none" stroke="#43484d" stroke-width="3.3" stroke-linecap="round"/><circle cx="416.05" cy="168.41" r="3.1" fill="#cd8a4b"/><path d="M589.6 167.5V160.2Q589.6 158.7 591.1 158.7H604M605 161.2V167.5Q605 169 603.5 169H590.6" fill="none" stroke="#cd8a4b" stroke-width="1.8"/><path d="M602.4 156L606.7 158.7L602.4 161.4Z" fill="#cd8a4b"/><path d="M592.2 166.3L587.9 169L592.2 171.7Z" fill="#cd8a4b"/><path d="M633.6 167.5V160.2Q633.6 158.7 635.1 158.7H648M649 161.2V167.5Q649 169 647.5 169H634.6" fill="none" stroke="#cd8a4b" stroke-width="1.8"/><path d="M646.4 156L650.7 158.7L646.4 161.4Z" fill="#cd8a4b"/><path d="M636.2 166.3L631.9 169L636.2 171.7Z" fill="#cd8a4b"/><path d="M733.2 199L746.2 205.7L733.2 212.4Z" fill="#cd8a4b"/></svg>
<div class="t" style="top:57px;font-size:6.8px;color:#cd8a4b;left:141.6px;transform-origin:0 50%;transform:scaleX(0.79);">05:37.353</div>
<div class="t" style="top:86px;font-size:6.8px;color:#cd8a4b;left:141.8px;transform-origin:0 50%;transform:scaleX(0.69);">1.1.1</div>
<div class="t" style="top:57px;font-size:6.8px;color:#cd8a4b;right:322.7px;transform-origin:100% 50%;transform:scaleX(0.86);">LKID - Summer Haze</div>
<div class="t" style="top:84px;font-size:6.8px;color:#cd8a4b;right:322.7px;transform-origin:100% 50%;transform:scaleX(0.84);">125.00/0.8% BPM</div>
<div class="t" style="top:65px;font-size:6.8px;color:#2a1a0c;left:146.4px;transform:translateX(-50%) scaleX(1);">1</div>
<div class="t" style="top:99px;font-size:8.4px;color:#2b2622;left:429px;transform:translateX(-50%) scaleX(1);">1</div>
<div class="b" style="left:0.3px;top:233.4px;width:40.5px;height:143.3px;border:1px solid #596065;border-radius:4px;"></div>
<div class="b" style="left:18.85px;top:239.4px;width:3.4px;height:132px;background:#acae9e"></div>
<div class="b" style="left:0.3px;top:234.1px;width:40.5px;height:10px;border-radius:4.5px;background:#cbccb6"></div>
<div class="b" style="left:4.3px;top:238.6px;width:32.5px;height:1px;background:#848576"></div>
<div class="t" style="top:235px;font-size:9.5px;color:#e8e8de;right:987.8px;transform-origin:100% 50%;transform:scaleX(0.99);">0.0 dB</div>
<div class="t" style="left:32.2px;top:371.8px;font-size:10.5px;color:#cbccb6;transform-origin:0 50%;transform:translate(0,-50%) rotate(-90deg) scaleX(0.95);">low</div>
<div class="b" style="left:0.1px;top:233.2px;width:40.9px;height:143.6px;background:rgba(114,118,120,0.72);border-radius:4.5px;"></div>
<div class="b" style="left:0.3px;top:378.3px;width:40.5px;height:27.9px;background:#222a31;border:1px solid #596065;border-radius:4px;"></div>
<div class="b" style="left:44.9px;top:233.4px;width:40.5px;height:143.3px;border:1px solid #596065;border-radius:4px;"></div>
<div class="b" style="left:63.45px;top:239.4px;width:3.4px;height:132px;background:#acae9e"></div>
<div class="b" style="left:44.9px;top:234.1px;width:40.5px;height:10px;border-radius:4.5px;background:#cbccb6"></div>
<div class="b" style="left:48.9px;top:238.6px;width:32.5px;height:1px;background:#848576"></div>
<div class="t" style="top:235px;font-size:9.5px;color:#e8e8de;right:943.2px;transform-origin:100% 50%;transform:scaleX(0.99);">0.0 dB</div>
<div class="t" style="left:76.8px;top:371.8px;font-size:10.5px;color:#cbccb6;transform-origin:0 50%;transform:translate(0,-50%) rotate(-90deg) scaleX(0.95);">mid</div>
<div class="b" style="left:44.7px;top:233.2px;width:40.9px;height:143.6px;background:rgba(114,118,120,0.72);border-radius:4.5px;"></div>
<div class="b" style="left:44.9px;top:378.3px;width:40.5px;height:27.9px;background:#222a31;border:1px solid #596065;border-radius:4px;"></div>
<div class="b" style="left:89.5px;top:233.4px;width:40.5px;height:143.3px;border:1px solid #596065;border-radius:4px;"></div>
<div class="b" style="left:108.05px;top:239.4px;width:3.4px;height:132px;background:#acae9e"></div>
<div class="b" style="left:89.5px;top:234.1px;width:40.5px;height:10px;border-radius:4.5px;background:#cbccb6"></div>
<div class="b" style="left:93.5px;top:238.6px;width:32.5px;height:1px;background:#848576"></div>
<div class="t" style="top:235px;font-size:9.5px;color:#e8e8de;right:898.6px;transform-origin:100% 50%;transform:scaleX(0.99);">0.0 dB</div>
<div class="t" style="left:121.4px;top:371.8px;font-size:10.5px;color:#cbccb6;transform-origin:0 50%;transform:translate(0,-50%) rotate(-90deg) scaleX(0.95);">high</div>
<div class="b" style="left:89.3px;top:233.2px;width:40.9px;height:143.6px;background:rgba(114,118,120,0.72);border-radius:4.5px;"></div>
<div class="b" style="left:89.5px;top:378.3px;width:40.5px;height:27.9px;background:#222a31;border:1px solid #596065;border-radius:4px;"></div>
<div class="b" style="left:138.3px;top:235.3px;width:566.3px;height:37.7px;background:#2a323a;border:1px solid #555b60;border-radius:4px;"></div>
<div class="b" style="left:139.3px;top:243.6px;width:563.2px;height:22px;background:#1f262d"></div>
<div class="b" style="left:138.9px;top:277.4px;width:565.7px;height:43.2px;background:#232a31;border:1px solid #5a6064;border-radius:4px;"></div>
<div class="b" style="left:138px;top:324.9px;width:40.7px;height:39px;background:#222a31;border:1px solid #53595d;border-radius:4.5px;"></div>
<div class="t" style="top:336px;font-size:15.2px;color:#cbccb6;left:158.3px;transform:translateX(-50%) scaleX(0.88);">1</div>
<div class="b" style="left:138px;top:367.2px;width:40.7px;height:39.1px;background:#222a31;border:1px solid #53595d;border-radius:4.5px;"></div>
<div class="t" style="top:373px;font-size:9.5px;color:#cbccb6;left:158.3px;transform:translateX(-50%) scaleX(1.1);">&lt;&lt;</div>
<div class="t" style="top:391px;font-size:9.6px;color:#cbccb6;left:158.3px;transform:translateX(-50%) scaleX(0.97);">16</div>
<div class="b" style="left:181.83px;top:324.9px;width:40.7px;height:39px;background:#222a31;border:1px solid #53595d;border-radius:4.5px;"></div>
<div class="t" style="top:336px;font-size:15.2px;color:#cbccb6;left:202.13px;transform:translateX(-50%) scaleX(0.88);">2</div>
<div class="b" style="left:181.83px;top:367.2px;width:40.7px;height:39.1px;background:#222a31;border:1px solid #53595d;border-radius:4.5px;"></div>
<div class="t" style="top:373px;font-size:8.6px;color:#cbccb6;left:202.13px;transform:translateX(-50%) scaleX(0.76);">JUMP SIZE</div>
<div class="t" style="top:391px;font-size:9.6px;color:#cbccb6;left:202.13px;transform:translateX(-50%) scaleX(1.11);">/2</div>
<div class="b" style="left:225.66px;top:324.9px;width:40.7px;height:39px;background:#222a31;border:1px solid #53595d;border-radius:4.5px;"></div>
<div class="t" style="top:336px;font-size:15.2px;color:#cbccb6;left:245.96px;transform:translateX(-50%) scaleX(0.88);">3</div>
<div class="b" style="left:225.66px;top:367.2px;width:40.7px;height:39.1px;background:#222a31;border:1px solid #53595d;border-radius:4.5px;"></div>
<div class="t" style="top:373px;font-size:8.6px;color:#cbccb6;left:245.96px;transform:translateX(-50%) scaleX(0.76);">JUMP SIZE</div>
<div class="t" style="top:391px;font-size:9.6px;color:#cbccb6;left:245.96px;transform:translateX(-50%) scaleX(0.91);">x2</div>
<div class="b" style="left:269.49px;top:324.9px;width:40.7px;height:39px;background:#222a31;border:1px solid #53595d;border-radius:4.5px;"></div>
<div class="t" style="top:336px;font-size:15.2px;color:#cbccb6;left:289.79px;transform:translateX(-50%) scaleX(0.88);">4</div>
<div class="b" style="left:269.49px;top:367.2px;width:40.7px;height:39.1px;background:#222a31;border:1px solid #53595d;border-radius:4.5px;"></div>
<div class="t" style="top:373px;font-size:9.5px;color:#cbccb6;left:289.79px;transform:translateX(-50%) scaleX(1.1);">&gt;&gt;</div>
<div class="t" style="top:391px;font-size:9.6px;color:#cbccb6;left:289.79px;transform:translateX(-50%) scaleX(0.97);">16</div>
<div class="b" style="left:362.3px;top:323.9px;width:30.6px;height:31.3px;border:1px solid #4a5157;border-radius:4.5px;"></div>
<div class="t" style="top:336px;font-size:7.4px;color:#cbccb6;left:377.7px;transform:translateX(-50%) scaleX(1);">0.0%</div>
<div class="t" style="top:353px;font-size:7.4px;color:#cbccb6;left:377.7px;transform:translateX(-50%) scaleX(0.8);">FX1</div>
<div class="b" style="left:358px;top:367.2px;width:40.4px;height:39.1px;background:#222a31;border:1px solid #53595d;border-radius:4.5px;"></div>
<div class="t" style="top:383px;font-size:10px;color:#cbccb6;left:378.2px;transform:translateX(-50%) scaleX(0.76);">FX1</div>
<div class="b" style="left:406.2px;top:323.9px;width:30.6px;height:31.3px;border:1px solid #4a5157;border-radius:4.5px;"></div>
<div class="t" style="top:336px;font-size:7.4px;color:#cbccb6;left:421.6px;transform:translateX(-50%) scaleX(1);">0.0%</div>
<div class="t" style="top:353px;font-size:7.4px;color:#cbccb6;left:421.6px;transform:translateX(-50%) scaleX(0.8);">FX2</div>
<div class="b" style="left:401.4px;top:367.2px;width:40.4px;height:39.1px;background:#222a31;border:1px solid #53595d;border-radius:4.5px;"></div>
<div class="t" style="top:383px;font-size:10px;color:#cbccb6;left:421.6px;transform:translateX(-50%) scaleX(0.76);">FX2</div>
<div class="b" style="left:488.9px;top:324.9px;width:40.8px;height:39px;background:#222a31;border:1px solid #53595d;border-radius:4.5px;"></div>
<div class="b" style="left:488.9px;top:367.2px;width:40.8px;height:39.1px;background:#222a31;border:1px solid #53595d;border-radius:4.5px;"></div>
<div class="t" style="top:339px;font-size:11.3px;color:#cbccb6;left:509.3px;transform:translateX(-50%) scaleX(1);">1</div>
<div class="t" style="top:382px;font-size:11.3px;color:#cbccb6;left:509.3px;transform:translateX(-50%) scaleX(1);">4</div>
<div class="b" style="left:532.9px;top:324.9px;width:40.8px;height:39px;background:#222a31;border:1px solid #53595d;border-radius:4.5px;"></div>
<div class="b" style="left:532.9px;top:367.2px;width:40.8px;height:39.1px;background:#222a31;border:1px solid #53595d;border-radius:4.5px;"></div>
<div class="t" style="top:339px;font-size:11.3px;color:#cbccb6;left:553.3px;transform:translateX(-50%) scaleX(1);">2</div>
<div class="t" style="top:382px;font-size:11.3px;color:#cbccb6;left:553.3px;transform:translateX(-50%) scaleX(1);">16</div>
<div class="b" style="left:576.9px;top:324.9px;width:40.8px;height:39px;background:#222a31;border:1px solid #53595d;border-radius:4.5px;"></div>
<div class="b" style="left:576.9px;top:367.2px;width:40.8px;height:39.1px;background:#222a31;border:1px solid #53595d;border-radius:4.5px;"></div>
<div class="t" style="top:331px;font-size:7.8px;color:#cbccb6;left:597.3px;transform:translateX(-50%) scaleX(0.87);">LOOP</div>
<div class="t" style="top:350px;font-size:8.4px;color:#cbccb6;left:597.3px;transform:translateX(-50%) scaleX(1);">16</div>
<div class="t" style="top:373px;font-size:8.3px;color:#cbccb6;left:597.3px;transform:translateX(-50%) scaleX(0.79);">LOOP SIZE</div>
<div class="t" style="top:391px;font-size:9.6px;color:#cbccb6;left:597.3px;transform:translateX(-50%) scaleX(1.1);">/2</div>
<div class="b" style="left:620.9px;top:324.9px;width:40.8px;height:39px;background:#222a31;border:1px solid #53595d;border-radius:4.5px;"></div>
<div class="b" style="left:620.9px;top:367.2px;width:40.8px;height:39.1px;background:#222a31;border:1px solid #53595d;border-radius:4.5px;"></div>
<div class="t" style="top:331px;font-size:7.8px;color:#cbccb6;left:641.3px;transform:translateX(-50%) scaleX(0.78);">ROLL</div>
<div class="t" style="top:350px;font-size:8.4px;color:#cbccb6;left:641.3px;transform:translateX(-50%) scaleX(1);">16</div>
<div class="t" style="top:373px;font-size:8.3px;color:#cbccb6;left:641.3px;transform:translateX(-50%) scaleX(0.79);">LOOP SIZE</div>
<div class="t" style="top:391px;font-size:9.6px;color:#cbccb6;left:641.3px;transform:translateX(-50%) scaleX(0.92);">x2</div>
<div class="b" style="left:665.4px;top:325.4px;width:39.8px;height:38px;background:#cbccb6;border-radius:4.5px;"></div>
<div class="b" style="left:664.9px;top:367.2px;width:40.8px;height:39.1px;background:#222a31;border:1px solid #53595d;border-radius:4.5px;"></div>
<div class="t" style="top:339px;font-size:9.6px;color:#20231f;left:685.3px;transform:translateX(-50%) scaleX(0.85);">SYNC</div>
<div class="t" style="top:382px;font-size:9.6px;color:#cbccb6;left:685.3px;transform:translateX(-50%) scaleX(0.83);">KEY</div>
<div class="b" style="left:710.9px;top:233.7px;width:54.9px;height:129.6px;border:1px solid #53595d;border-radius:4px;"></div>
<div class="b" style="left:737.1px;top:242.4px;width:3.4px;height:-4.4px;background:#32393d"></div>
<div class="b" style="left:737.1px;top:238px;width:3.4px;height:120px;background:#afb2a0"></div>
<div class="b" style="left:711.9px;top:233.6px;width:54.2px;height:8.8px;border-radius:4.4px;background:#cbccb6"></div>
<div class="b" style="left:716px;top:237.4px;width:46px;height:1.2px;background:#5b5c52"></div>
<div class="t" style="top:237px;font-size:9px;color:#e5e6da;right:262.4px;transform-origin:100% 50%;transform:scaleX(0.94);">100.0%</div>
<div class="t" style="left:758.6px;top:359px;font-size:10px;color:#cbccb6;transform-origin:0 50%;transform:translate(0,-50%) rotate(-90deg) scaleX(1);">Volume</div>
<div class="b" style="left:710.9px;top:366.2px;width:57.1px;height:40px;background:#222a31;border:1px solid #53595d;border-radius:4.5px;"></div>
<svg width="1024" height="767"><rect x="9.35" y="383.25" width="6" height="1.7" rx="1.1" fill="#414849" stroke="#cbccb6" stroke-width="0.7"/><rect x="9.35" y="386.25" width="6" height="1.7" rx="1.1" fill="#414849" stroke="#cbccb6" stroke-width="0.7"/><rect x="9.35" y="389.25" width="6" height="1.7" rx="1.1" fill="#414849" stroke="#cbccb6" stroke-width="0.7"/><rect x="9.35" y="392.25" width="6" height="1.7" rx="1.1" fill="#414849" stroke="#cbccb6" stroke-width="0.7"/><rect x="9.35" y="395.25" width="6" height="1.7" rx="1.1" fill="#414849" stroke="#cbccb6" stroke-width="0.7"/><rect x="9.35" y="398.25" width="6" height="1.7" rx="1.1" fill="#414849" stroke="#cbccb6" stroke-width="0.7"/><rect x="16.7" y="382.9" width="6.7" height="2.4" fill="#cbccb6"/><rect x="16.7" y="385.9" width="6.7" height="2.4" fill="#cbccb6"/><rect x="16.7" y="388.9" width="6.7" height="2.4" fill="#cbccb6"/><rect x="16.7" y="391.9" width="6.7" height="2.4" fill="#cbccb6"/><rect x="16.7" y="394.9" width="6.7" height="2.4" fill="#cbccb6"/><rect x="16.7" y="397.9" width="6.7" height="2.4" fill="#cbccb6"/><rect x="24.4" y="382.9" width="6.7" height="2.4" fill="#cbccb6"/><rect x="24.4" y="385.9" width="6.7" height="2.4" fill="#cbccb6"/><rect x="24.4" y="388.9" width="6.7" height="2.4" fill="#cbccb6"/><rect x="24.4" y="391.9" width="6.7" height="2.4" fill="#cbccb6"/><rect x="24.4" y="394.9" width="6.7" height="2.4" fill="#cbccb6"/><rect x="24.4" y="397.9" width="6.7" height="2.4" fill="#cbccb6"/><rect x="53.6" y="382.9" width="6.7" height="2.4" fill="#cbccb6"/><rect x="53.6" y="385.9" width="6.7" height="2.4" fill="#cbccb6"/><rect x="53.6" y="388.9" width="6.7" height="2.4" fill="#cbccb6"/><rect x="53.6" y="391.9" width="6.7" height="2.4" fill="#cbccb6"/><rect x="53.6" y="394.9" width="6.7" height="2.4" fill="#cbccb6"/><rect x="53.6" y="397.9" width="6.7" height="2.4" fill="#cbccb6"/><rect x="61.65" y="383.25" width="6" height="1.7" rx="1.1" fill="#414849" stroke="#cbccb6" stroke-width="0.7"/><rect x="61.65" y="386.25" width="6" height="1.7" rx="1.1" fill="#414849" stroke="#cbccb6" stroke-width="0.7"/><rect x="61.65" y="389.25" width="6" height="1.7" rx="1.1" fill="#414849" stroke="#cbccb6" stroke-width="0.7"/><rect x="61.65" y="392.25" width="6" height="1.7" rx="1.1" fill="#414849" stroke="#cbccb6" stroke-width="0.7"/><rect x="61.65" y="395.25" width="6" height="1.7" rx="1.1" fill="#414849" stroke="#cbccb6" stroke-width="0.7"/><rect x="61.65" y="398.25" width="6" height="1.7" rx="1.1" fill="#414849" stroke="#cbccb6" stroke-width="0.7"/><rect x="69" y="382.9" width="6.7" height="2.4" fill="#cbccb6"/><rect x="69" y="385.9" width="6.7" height="2.4" fill="#cbccb6"/><rect x="69" y="388.9" width="6.7" height="2.4" fill="#cbccb6"/><rect x="69" y="391.9" width="6.7" height="2.4" fill="#cbccb6"/><rect x="69" y="394.9" width="6.7" height="2.4" fill="#cbccb6"/><rect x="69" y="397.9" width="6.7" height="2.4" fill="#cbccb6"/><rect x="98.2" y="382.9" width="6.7" height="2.4" fill="#cbccb6"/><rect x="98.2" y="385.9" width="6.7" height="2.4" fill="#cbccb6"/><rect x="98.2" y="388.9" width="6.7" height="2.4" fill="#cbccb6"/><rect x="98.2" y="391.9" width="6.7" height="2.4" fill="#cbccb6"/><rect x="98.2" y="394.9" width="6.7" height="2.4" fill="#cbccb6"/><rect x="98.2" y="397.9" width="6.7" height="2.4" fill="#cbccb6"/><rect x="105.9" y="382.9" width="6.7" height="2.4" fill="#cbccb6"/><rect x="105.9" y="385.9" width="6.7" height="2.4" fill="#cbccb6"/><rect x="105.9" y="388.9" width="6.7" height="2.4" fill="#cbccb6"/><rect x="105.9" y="391.9" width="6.7" height="2.4" fill="#cbccb6"/><rect x="105.9" y="394.9" width="6.7" height="2.4" fill="#cbccb6"/><rect x="105.9" y="397.9" width="6.7" height="2.4" fill="#cbccb6"/><rect x="113.95" y="383.25" width="6" height="1.7" rx="1.1" fill="#414849" stroke="#cbccb6" stroke-width="0.7"/><rect x="113.95" y="386.25" width="6" height="1.7" rx="1.1" fill="#414849" stroke="#cbccb6" stroke-width="0.7"/><rect x="113.95" y="389.25" width="6" height="1.7" rx="1.1" fill="#414849" stroke="#cbccb6" stroke-width="0.7"/><rect x="113.95" y="392.25" width="6" height="1.7" rx="1.1" fill="#414849" stroke="#cbccb6" stroke-width="0.7"/><rect x="113.95" y="395.25" width="6" height="1.7" rx="1.1" fill="#414849" stroke="#cbccb6" stroke-width="0.7"/><rect x="113.95" y="398.25" width="6" height="1.7" rx="1.1" fill="#414849" stroke="#cbccb6" stroke-width="0.7"/><clipPath id="co2"><rect x="140" y="243.1" width="562.4" height="22"/></clipPath><g clip-path="url(#co2)"><path d="M141.1 243.5V264.7M150.43 243.5V264.7M159.76 243.5V264.7M169.09 243.5V264.7M178.42 243.5V264.7M187.75 243.5V264.7M197.08 243.5V264.7M206.41 243.5V264.7M215.74 243.5V264.7M225.07 243.5V264.7M234.4 243.5V264.7M243.73 243.5V264.7M253.06 243.5V264.7M262.39 243.5V264.7M271.72 243.5V264.7M281.05 243.5V264.7M290.38 243.5V264.7M299.71 243.5V264.7M309.04 243.5V264.7M318.37 243.5V264.7M327.7 243.5V264.7M337.03 243.5V264.7M346.36 243.5V264.7M355.69 243.5V264.7M365.02 243.5V264.7M374.35 243.5V264.7M383.68 243.5V264.7M393.01 243.5V264.7M402.34 243.5V264.7M411.67 243.5V264.7M421 243.5V264.7M430.33 243.5V264.7M439.66 243.5V264.7M448.99 243.5V264.7M458.32 243.5V264.7M467.65 243.5V264.7M476.98 243.5V264.7M486.31 243.5V264.7M495.64 243.5V264.7M504.97 243.5V264.7M514.3 243.5V264.7M523.63 243.5V264.7M532.96 243.5V264.7M542.29 243.5V264.7M551.62 243.5V264.7M560.95 243.5V264.7M570.28 243.5V264.7M579.61 243.5V264.7M588.94 243.5V264.7M598.27 243.5V264.7M607.6 243.5V264.7M616.93 243.5V264.7M626.26 243.5V264.7M635.59 243.5V264.7M644.92 243.5V264.7M654.25 243.5V264.7M663.58 243.5V264.7M672.91 243.5V264.7M682.24 243.5V264.7M691.57 243.5V264.7M700.9 243.5V264.7" stroke="#a83a6c" stroke-width="0.9"/><path d="M140.7 248.27L141.2 243.5L141.7 245.62L142.6 250.25L143.6 251.48L144.6 252.32L145.6 252.88L146.6 253.27L147.6 253.54L148.6 253.72L149.6 253.84L149.6 254.36L148.6 254.48L147.6 254.66L146.6 254.93L145.6 255.32L144.6 255.88L143.6 256.72L142.6 257.95L141.7 262.58L141.2 264.7L140.7 259.93ZM150.03 248.27L150.53 243.5L151.03 245.62L151.93 250.25L152.93 251.48L153.93 252.32L154.93 252.88L155.93 253.27L156.93 253.54L157.93 253.72L158.93 253.84L158.93 254.36L157.93 254.48L156.93 254.66L155.93 254.93L154.93 255.32L153.93 255.88L152.93 256.72L151.93 257.95L151.03 262.58L150.53 264.7L150.03 259.93ZM159.36 248.27L159.86 243.5L160.36 245.62L161.26 250.25L162.26 251.48L163.26 252.32L164.26 252.88L165.26 253.27L166.26 253.54L167.26 253.72L168.26 253.84L168.26 254.36L167.26 254.48L166.26 254.66L165.26 254.93L164.26 255.32L163.26 255.88L162.26 256.72L161.26 257.95L160.36 262.58L159.86 264.7L159.36 259.93ZM168.69 248.27L169.19 243.5L169.69 245.62L170.59 250.25L171.59 251.48L172.59 252.32L173.59 252.88L174.59 253.27L175.59 253.54L176.59 253.72L177.59 253.84L177.59 254.36L176.59 254.48L175.59 254.66L174.59 254.93L173.59 255.32L172.59 255.88L171.59 256.72L170.59 257.95L169.69 262.58L169.19 264.7L168.69 259.93ZM178.02 248.27L178.52 243.5L179.02 245.62L179.92 250.25L180.92 251.48L181.92 252.32L182.92 252.88L183.92 253.27L184.92 253.54L185.92 253.72L186.92 253.84L186.92 254.36L185.92 254.48L184.92 254.66L183.92 254.93L182.92 255.32L181.92 255.88L180.92 256.72L179.92 257.95L179.02 262.58L178.52 264.7L178.02 259.93ZM187.35 248.27L187.85 243.5L188.35 245.62L189.25 250.25L190.25 251.48L191.25 252.32L192.25 252.88L193.25 253.27L194.25 253.54L195.25 253.72L196.25 253.84L196.25 254.36L195.25 254.48L194.25 254.66L193.25 254.93L192.25 255.32L191.25 255.88L190.25 256.72L189.25 257.95L188.35 262.58L187.85 264.7L187.35 259.93ZM196.68 248.27L197.18 243.5L197.68 245.62L198.58 250.25L199.58 251.48L200.58 252.32L201.58 252.88L202.58 253.27L203.58 253.54L204.58 253.72L205.58 253.84L205.58 254.36L204.58 254.48L203.58 254.66L202.58 254.93L201.58 255.32L200.58 255.88L199.58 256.72L198.58 257.95L197.68 262.58L197.18 264.7L196.68 259.93ZM206.01 248.27L206.51 243.5L207.01 245.62L207.91 250.25L208.91 251.48L209.91 252.32L210.91 252.88L211.91 253.27L212.91 253.54L213.91 253.72L214.91 253.84L214.91 254.36L213.91 254.48L212.91 254.66L211.91 254.93L210.91 255.32L209.91 255.88L208.91 256.72L207.91 257.95L207.01 262.58L206.51 264.7L206.01 259.93ZM215.34 248.27L215.84 243.5L216.34 245.62L217.24 250.25L218.24 251.48L219.24 252.32L220.24 252.88L221.24 253.27L222.24 253.54L223.24 253.72L224.24 253.84L224.24 254.36L223.24 254.48L222.24 254.66L221.24 254.93L220.24 255.32L219.24 255.88L218.24 256.72L217.24 257.95L216.34 262.58L215.84 264.7L215.34 259.93ZM224.67 248.27L225.17 243.5L225.67 245.62L226.57 250.25L227.57 251.48L228.57 252.32L229.57 252.88L230.57 253.27L231.57 253.54L232.57 253.72L233.57 253.84L233.57 254.36L232.57 254.48L231.57 254.66L230.57 254.93L229.57 255.32L228.57 255.88L227.57 256.72L226.57 257.95L225.67 262.58L225.17 264.7L224.67 259.93ZM234 248.27L234.5 243.5L235 245.62L235.9 250.25L236.9 251.48L237.9 252.32L238.9 252.88L239.9 253.27L240.9 253.54L241.9 253.72L242.9 253.84L242.9 254.36L241.9 254.48L240.9 254.66L239.9 254.93L238.9 255.32L237.9 255.88L236.9 256.72L235.9 257.95L235 262.58L234.5 264.7L234 259.93ZM243.33 248.27L243.83 243.5L244.33 245.62L245.23 250.25L246.23 251.48L247.23 252.32L248.23 252.88L249.23 253.27L250.23 253.54L251.23 253.72L252.23 253.84L252.23 254.36L251.23 254.48L250.23 254.66L249.23 254.93L248.23 255.32L247.23 255.88L246.23 256.72L245.23 257.95L244.33 262.58L243.83 264.7L243.33 259.93ZM252.66 248.27L253.16 243.5L253.66 245.62L254.56 250.25L255.56 251.48L256.56 252.32L257.56 252.88L258.56 253.27L259.56 253.54L260.56 253.72L261.56 253.84L261.56 254.36L260.56 254.48L259.56 254.66L258.56 254.93L257.56 255.32L256.56 255.88L255.56 256.72L254.56 257.95L253.66 262.58L253.16 264.7L252.66 259.93ZM261.99 248.27L262.49 243.5L262.99 245.62L263.89 250.25L264.89 251.48L265.89 252.32L266.89 252.88L267.89 253.27L268.89 253.54L269.89 253.72L270.89 253.84L270.89 254.36L269.89 254.48L268.89 254.66L267.89 254.93L266.89 255.32L265.89 255.88L264.89 256.72L263.89 257.95L262.99 262.58L262.49 264.7L261.99 259.93ZM271.32 248.27L271.82 243.5L272.32 245.62L273.22 250.25L274.22 251.48L275.22 252.32L276.22 252.88L277.22 253.27L278.22 253.54L279.22 253.72L280.22 253.84L280.22 254.36L279.22 254.48L278.22 254.66L277.22 254.93L276.22 255.32L275.22 255.88L274.22 256.72L273.22 257.95L272.32 262.58L271.82 264.7L271.32 259.93ZM280.65 248.27L281.15 243.5L281.65 245.62L282.55 250.25L283.55 251.48L284.55 252.32L285.55 252.88L286.55 253.27L287.55 253.54L288.55 253.72L289.55 253.84L289.55 254.36L288.55 254.48L287.55 254.66L286.55 254.93L285.55 255.32L284.55 255.88L283.55 256.72L282.55 257.95L281.65 262.58L281.15 264.7L280.65 259.93ZM289.98 248.27L290.48 243.5L290.98 245.62L291.88 250.25L292.88 251.48L293.88 252.32L294.88 252.88L295.88 253.27L296.88 253.54L297.88 253.72L298.88 253.84L298.88 254.36L297.88 254.48L296.88 254.66L295.88 254.93L294.88 255.32L293.88 255.88L292.88 256.72L291.88 257.95L290.98 262.58L290.48 264.7L289.98 259.93ZM299.31 248.27L299.81 243.5L300.31 245.62L301.21 250.25L302.21 251.48L303.21 252.32L304.21 252.88L305.21 253.27L306.21 253.54L307.21 253.72L308.21 253.84L308.21 254.36L307.21 254.48L306.21 254.66L305.21 254.93L304.21 255.32L303.21 255.88L302.21 256.72L301.21 257.95L300.31 262.58L299.81 264.7L299.31 259.93ZM308.64 248.27L309.14 243.5L309.64 245.62L310.54 250.25L311.54 251.48L312.54 252.32L313.54 252.88L314.54 253.27L315.54 253.54L316.54 253.72L317.54 253.84L317.54 254.36L316.54 254.48L315.54 254.66L314.54 254.93L313.54 255.32L312.54 255.88L311.54 256.72L310.54 257.95L309.64 262.58L309.14 264.7L308.64 259.93ZM317.97 248.27L318.47 243.5L318.97 245.62L319.87 250.25L320.87 251.48L321.87 252.32L322.87 252.88L323.87 253.27L324.87 253.54L325.87 253.72L326.87 253.84L326.87 254.36L325.87 254.48L324.87 254.66L323.87 254.93L322.87 255.32L321.87 255.88L320.87 256.72L319.87 257.95L318.97 262.58L318.47 264.7L317.97 259.93ZM327.3 248.27L327.8 243.5L328.3 245.62L329.2 250.25L330.2 251.48L331.2 252.32L332.2 252.88L333.2 253.27L334.2 253.54L335.2 253.72L336.2 253.84L336.2 254.36L335.2 254.48L334.2 254.66L333.2 254.93L332.2 255.32L331.2 255.88L330.2 256.72L329.2 257.95L328.3 262.58L327.8 264.7L327.3 259.93ZM336.63 248.27L337.13 243.5L337.63 245.62L338.53 250.25L339.53 251.48L340.53 252.32L341.53 252.88L342.53 253.27L343.53 253.54L344.53 253.72L345.53 253.84L345.53 254.36L344.53 254.48L343.53 254.66L342.53 254.93L341.53 255.32L340.53 255.88L339.53 256.72L338.53 257.95L337.63 262.58L337.13 264.7L336.63 259.93ZM345.96 248.27L346.46 243.5L346.96 245.62L347.86 250.25L348.86 251.48L349.86 252.32L350.86 252.88L351.86 253.27L352.86 253.54L353.86 253.72L354.86 253.84L354.86 254.36L353.86 254.48L352.86 254.66L351.86 254.93L350.86 255.32L349.86 255.88L348.86 256.72L347.86 257.95L346.96 262.58L346.46 264.7L345.96 259.93ZM355.29 248.27L355.79 243.5L356.29 245.62L357.19 250.25L358.19 251.48L359.19 252.32L360.19 252.88L361.19 253.27L362.19 253.54L363.19 253.72L364.19 253.84L364.19 254.36L363.19 254.48L362.19 254.66L361.19 254.93L360.19 255.32L359.19 255.88L358.19 256.72L357.19 257.95L356.29 262.58L355.79 264.7L355.29 259.93ZM364.62 248.27L365.12 243.5L365.62 245.62L366.52 250.25L367.52 251.48L368.52 252.32L369.52 252.88L370.52 253.27L371.52 253.54L372.52 253.72L373.52 253.84L373.52 254.36L372.52 254.48L371.52 254.66L370.52 254.93L369.52 255.32L368.52 255.88L367.52 256.72L366.52 257.95L365.62 262.58L365.12 264.7L364.62 259.93ZM373.95 248.27L374.45 243.5L374.95 245.62L375.85 250.25L376.85 251.48L377.85 252.32L378.85 252.88L379.85 253.27L380.85 253.54L381.85 253.72L382.85 253.84L382.85 254.36L381.85 254.48L380.85 254.66L379.85 254.93L378.85 255.32L377.85 255.88L376.85 256.72L375.85 257.95L374.95 262.58L374.45 264.7L373.95 259.93ZM383.28 248.27L383.78 243.5L384.28 245.62L385.18 250.25L386.18 251.48L387.18 252.32L388.18 252.88L389.18 253.27L390.18 253.54L391.18 253.72L392.18 253.84L392.18 254.36L391.18 254.48L390.18 254.66L389.18 254.93L388.18 255.32L387.18 255.88L386.18 256.72L385.18 257.95L384.28 262.58L383.78 264.7L383.28 259.93ZM392.61 248.27L393.11 243.5L393.61 245.62L394.51 250.25L395.51 251.48L396.51 252.32L397.51 252.88L398.51 253.27L399.51 253.54L400.51 253.72L401.51 253.84L401.51 254.36L400.51 254.48L399.51 254.66L398.51 254.93L397.51 255.32L396.51 255.88L395.51 256.72L394.51 257.95L393.61 262.58L393.11 264.7L392.61 259.93ZM401.94 248.27L402.44 243.5L402.94 245.62L403.84 250.25L404.84 251.48L405.84 252.32L406.84 252.88L407.84 253.27L408.84 253.54L409.84 253.72L410.84 253.84L410.84 254.36L409.84 254.48L408.84 254.66L407.84 254.93L406.84 255.32L405.84 255.88L404.84 256.72L403.84 257.95L402.94 262.58L402.44 264.7L401.94 259.93ZM411.27 248.27L411.77 243.5L412.27 245.62L413.17 250.25L414.17 251.48L415.17 252.32L416.17 252.88L417.17 253.27L418.17 253.54L419.17 253.72L420.17 253.84L420.17 254.36L419.17 254.48L418.17 254.66L417.17 254.93L416.17 255.32L415.17 255.88L414.17 256.72L413.17 257.95L412.27 262.58L411.77 264.7L411.27 259.93ZM420.6 248.27L421.1 243.5L421.6 245.62L422.5 250.25L423.5 251.48L424.5 252.32L425.5 252.88L426.5 253.27L427.5 253.54L428.5 253.72L429.5 253.84L429.5 254.36L428.5 254.48L427.5 254.66L426.5 254.93L425.5 255.32L424.5 255.88L423.5 256.72L422.5 257.95L421.6 262.58L421.1 264.7L420.6 259.93ZM429.93 248.27L430.43 243.5L430.93 245.62L431.83 250.25L432.83 251.48L433.83 252.32L434.83 252.88L435.83 253.27L436.83 253.54L437.83 253.72L438.83 253.84L438.83 254.36L437.83 254.48L436.83 254.66L435.83 254.93L434.83 255.32L433.83 255.88L432.83 256.72L431.83 257.95L430.93 262.58L430.43 264.7L429.93 259.93ZM439.26 248.27L439.76 243.5L440.26 245.62L441.16 250.25L442.16 251.48L443.16 252.32L444.16 252.88L445.16 253.27L446.16 253.54L447.16 253.72L448.16 253.84L448.16 254.36L447.16 254.48L446.16 254.66L445.16 254.93L444.16 255.32L443.16 255.88L442.16 256.72L441.16 257.95L440.26 262.58L439.76 264.7L439.26 259.93ZM448.59 248.27L449.09 243.5L449.59 245.62L450.49 250.25L451.49 251.48L452.49 252.32L453.49 252.88L454.49 253.27L455.49 253.54L456.49 253.72L457.49 253.84L457.49 254.36L456.49 254.48L455.49 254.66L454.49 254.93L453.49 255.32L452.49 255.88L451.49 256.72L450.49 257.95L449.59 262.58L449.09 264.7L448.59 259.93ZM457.92 248.27L458.42 243.5L458.92 245.62L459.82 250.25L460.82 251.48L461.82 252.32L462.82 252.88L463.82 253.27L464.82 253.54L465.82 253.72L466.82 253.84L466.82 254.36L465.82 254.48L464.82 254.66L463.82 254.93L462.82 255.32L461.82 255.88L460.82 256.72L459.82 257.95L458.92 262.58L458.42 264.7L457.92 259.93ZM467.25 248.27L467.75 243.5L468.25 245.62L469.15 250.25L470.15 251.48L471.15 252.32L472.15 252.88L473.15 253.27L474.15 253.54L475.15 253.72L476.15 253.84L476.15 254.36L475.15 254.48L474.15 254.66L473.15 254.93L472.15 255.32L471.15 255.88L470.15 256.72L469.15 257.95L468.25 262.58L467.75 264.7L467.25 259.93ZM476.58 248.27L477.08 243.5L477.58 245.62L478.48 250.25L479.48 251.48L480.48 252.32L481.48 252.88L482.48 253.27L483.48 253.54L484.48 253.72L485.48 253.84L485.48 254.36L484.48 254.48L483.48 254.66L482.48 254.93L481.48 255.32L480.48 255.88L479.48 256.72L478.48 257.95L477.58 262.58L477.08 264.7L476.58 259.93ZM485.91 248.27L486.41 243.5L486.91 245.62L487.81 250.25L488.81 251.48L489.81 252.32L490.81 252.88L491.81 253.27L492.81 253.54L493.81 253.72L494.81 253.84L494.81 254.36L493.81 254.48L492.81 254.66L491.81 254.93L490.81 255.32L489.81 255.88L488.81 256.72L487.81 257.95L486.91 262.58L486.41 264.7L485.91 259.93ZM495.24 248.27L495.74 243.5L496.24 245.62L497.14 250.25L498.14 251.48L499.14 252.32L500.14 252.88L501.14 253.27L502.14 253.54L503.14 253.72L504.14 253.84L504.14 254.36L503.14 254.48L502.14 254.66L501.14 254.93L500.14 255.32L499.14 255.88L498.14 256.72L497.14 257.95L496.24 262.58L495.74 264.7L495.24 259.93ZM504.57 248.27L505.07 243.5L505.57 245.62L506.47 250.25L507.47 251.48L508.47 252.32L509.47 252.88L510.47 253.27L511.47 253.54L512.47 253.72L513.47 253.84L513.47 254.36L512.47 254.48L511.47 254.66L510.47 254.93L509.47 255.32L508.47 255.88L507.47 256.72L506.47 257.95L505.57 262.58L505.07 264.7L504.57 259.93ZM513.9 248.27L514.4 243.5L514.9 245.62L515.8 250.25L516.8 251.48L517.8 252.32L518.8 252.88L519.8 253.27L520.8 253.54L521.8 253.72L522.8 253.84L522.8 254.36L521.8 254.48L520.8 254.66L519.8 254.93L518.8 255.32L517.8 255.88L516.8 256.72L515.8 257.95L514.9 262.58L514.4 264.7L513.9 259.93ZM523.23 248.27L523.73 243.5L524.23 245.62L525.13 250.25L526.13 251.48L527.13 252.32L528.13 252.88L529.13 253.27L530.13 253.54L531.13 253.72L532.13 253.84L532.13 254.36L531.13 254.48L530.13 254.66L529.13 254.93L528.13 255.32L527.13 255.88L526.13 256.72L525.13 257.95L524.23 262.58L523.73 264.7L523.23 259.93ZM532.56 248.27L533.06 243.5L533.56 245.62L534.46 250.25L535.46 251.48L536.46 252.32L537.46 252.88L538.46 253.27L539.46 253.54L540.46 253.72L541.46 253.84L541.46 254.36L540.46 254.48L539.46 254.66L538.46 254.93L537.46 255.32L536.46 255.88L535.46 256.72L534.46 257.95L533.56 262.58L533.06 264.7L532.56 259.93ZM541.89 248.27L542.39 243.5L542.89 245.62L543.79 250.25L544.79 251.48L545.79 252.32L546.79 252.88L547.79 253.27L548.79 253.54L549.79 253.72L550.79 253.84L550.79 254.36L549.79 254.48L548.79 254.66L547.79 254.93L546.79 255.32L545.79 255.88L544.79 256.72L543.79 257.95L542.89 262.58L542.39 264.7L541.89 259.93ZM551.22 248.27L551.72 243.5L552.22 245.62L553.12 250.25L554.12 251.48L555.12 252.32L556.12 252.88L557.12 253.27L558.12 253.54L559.12 253.72L560.12 253.84L560.12 254.36L559.12 254.48L558.12 254.66L557.12 254.93L556.12 255.32L555.12 255.88L554.12 256.72L553.12 257.95L552.22 262.58L551.72 264.7L551.22 259.93ZM560.55 248.27L561.05 243.5L561.55 245.62L562.45 250.25L563.45 251.48L564.45 252.32L565.45 252.88L566.45 253.27L567.45 253.54L568.45 253.72L569.45 253.84L569.45 254.36L568.45 254.48L567.45 254.66L566.45 254.93L565.45 255.32L564.45 255.88L563.45 256.72L562.45 257.95L561.55 262.58L561.05 264.7L560.55 259.93ZM569.88 248.27L570.38 243.5L570.88 245.62L571.78 250.25L572.78 251.48L573.78 252.32L574.78 252.88L575.78 253.27L576.78 253.54L577.78 253.72L578.78 253.84L578.78 254.36L577.78 254.48L576.78 254.66L575.78 254.93L574.78 255.32L573.78 255.88L572.78 256.72L571.78 257.95L570.88 262.58L570.38 264.7L569.88 259.93ZM579.21 248.27L579.71 243.5L580.21 245.62L581.11 250.25L582.11 251.48L583.11 252.32L584.11 252.88L585.11 253.27L586.11 253.54L587.11 253.72L588.11 253.84L588.11 254.36L587.11 254.48L586.11 254.66L585.11 254.93L584.11 255.32L583.11 255.88L582.11 256.72L581.11 257.95L580.21 262.58L579.71 264.7L579.21 259.93ZM588.54 248.27L589.04 243.5L589.54 245.62L590.44 250.25L591.44 251.48L592.44 252.32L593.44 252.88L594.44 253.27L595.44 253.54L596.44 253.72L597.44 253.84L597.44 254.36L596.44 254.48L595.44 254.66L594.44 254.93L593.44 255.32L592.44 255.88L591.44 256.72L590.44 257.95L589.54 262.58L589.04 264.7L588.54 259.93ZM597.87 248.27L598.37 243.5L598.87 245.62L599.77 250.25L600.77 251.48L601.77 252.32L602.77 252.88L603.77 253.27L604.77 253.54L605.77 253.72L606.77 253.84L606.77 254.36L605.77 254.48L604.77 254.66L603.77 254.93L602.77 255.32L601.77 255.88L600.77 256.72L599.77 257.95L598.87 262.58L598.37 264.7L597.87 259.93ZM607.2 248.27L607.7 243.5L608.2 245.62L609.1 250.25L610.1 251.48L611.1 252.32L612.1 252.88L613.1 253.27L614.1 253.54L615.1 253.72L616.1 253.84L616.1 254.36L615.1 254.48L614.1 254.66L613.1 254.93L612.1 255.32L611.1 255.88L610.1 256.72L609.1 257.95L608.2 262.58L607.7 264.7L607.2 259.93ZM616.53 248.27L617.03 243.5L617.53 245.62L618.43 250.25L619.43 251.48L620.43 252.32L621.43 252.88L622.43 253.27L623.43 253.54L624.43 253.72L625.43 253.84L625.43 254.36L624.43 254.48L623.43 254.66L622.43 254.93L621.43 255.32L620.43 255.88L619.43 256.72L618.43 257.95L617.53 262.58L617.03 264.7L616.53 259.93ZM625.86 248.27L626.36 243.5L626.86 245.62L627.76 250.25L628.76 251.48L629.76 252.32L630.76 252.88L631.76 253.27L632.76 253.54L633.76 253.72L634.76 253.84L634.76 254.36L633.76 254.48L632.76 254.66L631.76 254.93L630.76 255.32L629.76 255.88L628.76 256.72L627.76 257.95L626.86 262.58L626.36 264.7L625.86 259.93ZM635.19 248.27L635.69 243.5L636.19 245.62L637.09 250.25L638.09 251.48L639.09 252.32L640.09 252.88L641.09 253.27L642.09 253.54L643.09 253.72L644.09 253.84L644.09 254.36L643.09 254.48L642.09 254.66L641.09 254.93L640.09 255.32L639.09 255.88L638.09 256.72L637.09 257.95L636.19 262.58L635.69 264.7L635.19 259.93ZM644.52 248.27L645.02 243.5L645.52 245.62L646.42 250.25L647.42 251.48L648.42 252.32L649.42 252.88L650.42 253.27L651.42 253.54L652.42 253.72L653.42 253.84L653.42 254.36L652.42 254.48L651.42 254.66L650.42 254.93L649.42 255.32L648.42 255.88L647.42 256.72L646.42 257.95L645.52 262.58L645.02 264.7L644.52 259.93ZM653.85 248.27L654.35 243.5L654.85 245.62L655.75 250.25L656.75 251.48L657.75 252.32L658.75 252.88L659.75 253.27L660.75 253.54L661.75 253.72L662.75 253.84L662.75 254.36L661.75 254.48L660.75 254.66L659.75 254.93L658.75 255.32L657.75 255.88L656.75 256.72L655.75 257.95L654.85 262.58L654.35 264.7L653.85 259.93ZM663.18 248.27L663.68 243.5L664.18 245.62L665.08 250.25L666.08 251.48L667.08 252.32L668.08 252.88L669.08 253.27L670.08 253.54L671.08 253.72L672.08 253.84L672.08 254.36L671.08 254.48L670.08 254.66L669.08 254.93L668.08 255.32L667.08 255.88L666.08 256.72L665.08 257.95L664.18 262.58L663.68 264.7L663.18 259.93ZM672.51 248.27L673.01 243.5L673.51 245.62L674.41 250.25L675.41 251.48L676.41 252.32L677.41 252.88L678.41 253.27L679.41 253.54L680.41 253.72L681.41 253.84L681.41 254.36L680.41 254.48L679.41 254.66L678.41 254.93L677.41 255.32L676.41 255.88L675.41 256.72L674.41 257.95L673.51 262.58L673.01 264.7L672.51 259.93ZM681.84 248.27L682.34 243.5L682.84 245.62L683.74 250.25L684.74 251.48L685.74 252.32L686.74 252.88L687.74 253.27L688.74 253.54L689.74 253.72L690.74 253.84L690.74 254.36L689.74 254.48L688.74 254.66L687.74 254.93L686.74 255.32L685.74 255.88L684.74 256.72L683.74 257.95L682.84 262.58L682.34 264.7L681.84 259.93ZM691.17 248.27L691.67 243.5L692.17 245.62L693.07 250.25L694.07 251.48L695.07 252.32L696.07 252.88L697.07 253.27L698.07 253.54L699.07 253.72L700.07 253.84L700.07 254.36L699.07 254.48L698.07 254.66L697.07 254.93L696.07 255.32L695.07 255.88L694.07 256.72L693.07 257.95L692.17 262.58L691.67 264.7L691.17 259.93ZM700.5 248.27L701 243.5L701.5 245.62L702.4 250.25L703.4 251.48L704.4 252.32L705.4 252.88L706.4 253.27L707.4 253.54L708.4 253.72L709.4 253.84L709.4 254.36L708.4 254.48L707.4 254.66L706.4 254.93L705.4 255.32L704.4 255.88L703.4 256.72L702.4 257.95L701.5 262.58L701 264.7L700.5 259.93Z" fill="#ee4a86"/><path d="M141.1 251.35L141.6 249.1L142.1 250.1L143 252.19L144 252.89L145 253.33L146 253.61L147 253.79L147 254.41L146 254.59L145 254.87L144 255.31L143 256.01L142.1 258.1L141.6 259.1L141.1 256.85ZM150.43 251.35L150.93 249.1L151.43 250.1L152.33 252.19L153.33 252.89L154.33 253.33L155.33 253.61L156.33 253.79L156.33 254.41L155.33 254.59L154.33 254.87L153.33 255.31L152.33 256.01L151.43 258.1L150.93 259.1L150.43 256.85ZM159.76 251.35L160.26 249.1L160.76 250.1L161.66 252.19L162.66 252.89L163.66 253.33L164.66 253.61L165.66 253.79L165.66 254.41L164.66 254.59L163.66 254.87L162.66 255.31L161.66 256.01L160.76 258.1L160.26 259.1L159.76 256.85ZM169.09 251.35L169.59 249.1L170.09 250.1L170.99 252.19L171.99 252.89L172.99 253.33L173.99 253.61L174.99 253.79L174.99 254.41L173.99 254.59L172.99 254.87L171.99 255.31L170.99 256.01L170.09 258.1L169.59 259.1L169.09 256.85ZM178.42 251.35L178.92 249.1L179.42 250.1L180.32 252.19L181.32 252.89L182.32 253.33L183.32 253.61L184.32 253.79L184.32 254.41L183.32 254.59L182.32 254.87L181.32 255.31L180.32 256.01L179.42 258.1L178.92 259.1L178.42 256.85ZM187.75 251.35L188.25 249.1L188.75 250.1L189.65 252.19L190.65 252.89L191.65 253.33L192.65 253.61L193.65 253.79L193.65 254.41L192.65 254.59L191.65 254.87L190.65 255.31L189.65 256.01L188.75 258.1L188.25 259.1L187.75 256.85ZM197.08 251.35L197.58 249.1L198.08 250.1L198.98 252.19L199.98 252.89L200.98 253.33L201.98 253.61L202.98 253.79L202.98 254.41L201.98 254.59L200.98 254.87L199.98 255.31L198.98 256.01L198.08 258.1L197.58 259.1L197.08 256.85ZM206.41 251.35L206.91 249.1L207.41 250.1L208.31 252.19L209.31 252.89L210.31 253.33L211.31 253.61L212.31 253.79L212.31 254.41L211.31 254.59L210.31 254.87L209.31 255.31L208.31 256.01L207.41 258.1L206.91 259.1L206.41 256.85ZM215.74 251.35L216.24 249.1L216.74 250.1L217.64 252.19L218.64 252.89L219.64 253.33L220.64 253.61L221.64 253.79L221.64 254.41L220.64 254.59L219.64 254.87L218.64 255.31L217.64 256.01L216.74 258.1L216.24 259.1L215.74 256.85ZM225.07 251.35L225.57 249.1L226.07 250.1L226.97 252.19L227.97 252.89L228.97 253.33L229.97 253.61L230.97 253.79L230.97 254.41L229.97 254.59L228.97 254.87L227.97 255.31L226.97 256.01L226.07 258.1L225.57 259.1L225.07 256.85ZM234.4 251.35L234.9 249.1L235.4 250.1L236.3 252.19L237.3 252.89L238.3 253.33L239.3 253.61L240.3 253.79L240.3 254.41L239.3 254.59L238.3 254.87L237.3 255.31L236.3 256.01L235.4 258.1L234.9 259.1L234.4 256.85ZM243.73 251.35L244.23 249.1L244.73 250.1L245.63 252.19L246.63 252.89L247.63 253.33L248.63 253.61L249.63 253.79L249.63 254.41L248.63 254.59L247.63 254.87L246.63 255.31L245.63 256.01L244.73 258.1L244.23 259.1L243.73 256.85ZM253.06 251.35L253.56 249.1L254.06 250.1L254.96 252.19L255.96 252.89L256.96 253.33L257.96 253.61L258.96 253.79L258.96 254.41L257.96 254.59L256.96 254.87L255.96 255.31L254.96 256.01L254.06 258.1L253.56 259.1L253.06 256.85ZM262.39 251.35L262.89 249.1L263.39 250.1L264.29 252.19L265.29 252.89L266.29 253.33L267.29 253.61L268.29 253.79L268.29 254.41L267.29 254.59L266.29 254.87L265.29 255.31L264.29 256.01L263.39 258.1L262.89 259.1L262.39 256.85ZM271.72 251.35L272.22 249.1L272.72 250.1L273.62 252.19L274.62 252.89L275.62 253.33L276.62 253.61L277.62 253.79L277.62 254.41L276.62 254.59L275.62 254.87L274.62 255.31L273.62 256.01L272.72 258.1L272.22 259.1L271.72 256.85ZM281.05 251.35L281.55 249.1L282.05 250.1L282.95 252.19L283.95 252.89L284.95 253.33L285.95 253.61L286.95 253.79L286.95 254.41L285.95 254.59L284.95 254.87L283.95 255.31L282.95 256.01L282.05 258.1L281.55 259.1L281.05 256.85ZM290.38 251.35L290.88 249.1L291.38 250.1L292.28 252.19L293.28 252.89L294.28 253.33L295.28 253.61L296.28 253.79L296.28 254.41L295.28 254.59L294.28 254.87L293.28 255.31L292.28 256.01L291.38 258.1L290.88 259.1L290.38 256.85ZM299.71 251.35L300.21 249.1L300.71 250.1L301.61 252.19L302.61 252.89L303.61 253.33L304.61 253.61L305.61 253.79L305.61 254.41L304.61 254.59L303.61 254.87L302.61 255.31L301.61 256.01L300.71 258.1L300.21 259.1L299.71 256.85ZM309.04 251.35L309.54 249.1L310.04 250.1L310.94 252.19L311.94 252.89L312.94 253.33L313.94 253.61L314.94 253.79L314.94 254.41L313.94 254.59L312.94 254.87L311.94 255.31L310.94 256.01L310.04 258.1L309.54 259.1L309.04 256.85ZM318.37 251.35L318.87 249.1L319.37 250.1L320.27 252.19L321.27 252.89L322.27 253.33L323.27 253.61L324.27 253.79L324.27 254.41L323.27 254.59L322.27 254.87L321.27 255.31L320.27 256.01L319.37 258.1L318.87 259.1L318.37 256.85ZM327.7 251.35L328.2 249.1L328.7 250.1L329.6 252.19L330.6 252.89L331.6 253.33L332.6 253.61L333.6 253.79L333.6 254.41L332.6 254.59L331.6 254.87L330.6 255.31L329.6 256.01L328.7 258.1L328.2 259.1L327.7 256.85ZM337.03 251.35L337.53 249.1L338.03 250.1L338.93 252.19L339.93 252.89L340.93 253.33L341.93 253.61L342.93 253.79L342.93 254.41L341.93 254.59L340.93 254.87L339.93 255.31L338.93 256.01L338.03 258.1L337.53 259.1L337.03 256.85ZM346.36 251.35L346.86 249.1L347.36 250.1L348.26 252.19L349.26 252.89L350.26 253.33L351.26 253.61L352.26 253.79L352.26 254.41L351.26 254.59L350.26 254.87L349.26 255.31L348.26 256.01L347.36 258.1L346.86 259.1L346.36 256.85ZM355.69 251.35L356.19 249.1L356.69 250.1L357.59 252.19L358.59 252.89L359.59 253.33L360.59 253.61L361.59 253.79L361.59 254.41L360.59 254.59L359.59 254.87L358.59 255.31L357.59 256.01L356.69 258.1L356.19 259.1L355.69 256.85ZM365.02 251.35L365.52 249.1L366.02 250.1L366.92 252.19L367.92 252.89L368.92 253.33L369.92 253.61L370.92 253.79L370.92 254.41L369.92 254.59L368.92 254.87L367.92 255.31L366.92 256.01L366.02 258.1L365.52 259.1L365.02 256.85ZM374.35 251.35L374.85 249.1L375.35 250.1L376.25 252.19L377.25 252.89L378.25 253.33L379.25 253.61L380.25 253.79L380.25 254.41L379.25 254.59L378.25 254.87L377.25 255.31L376.25 256.01L375.35 258.1L374.85 259.1L374.35 256.85ZM383.68 251.35L384.18 249.1L384.68 250.1L385.58 252.19L386.58 252.89L387.58 253.33L388.58 253.61L389.58 253.79L389.58 254.41L388.58 254.59L387.58 254.87L386.58 255.31L385.58 256.01L384.68 258.1L384.18 259.1L383.68 256.85ZM393.01 251.35L393.51 249.1L394.01 250.1L394.91 252.19L395.91 252.89L396.91 253.33L397.91 253.61L398.91 253.79L398.91 254.41L397.91 254.59L396.91 254.87L395.91 255.31L394.91 256.01L394.01 258.1L393.51 259.1L393.01 256.85ZM402.34 251.35L402.84 249.1L403.34 250.1L404.24 252.19L405.24 252.89L406.24 253.33L407.24 253.61L408.24 253.79L408.24 254.41L407.24 254.59L406.24 254.87L405.24 255.31L404.24 256.01L403.34 258.1L402.84 259.1L402.34 256.85ZM411.67 251.35L412.17 249.1L412.67 250.1L413.57 252.19L414.57 252.89L415.57 253.33L416.57 253.61L417.57 253.79L417.57 254.41L416.57 254.59L415.57 254.87L414.57 255.31L413.57 256.01L412.67 258.1L412.17 259.1L411.67 256.85ZM421 251.35L421.5 249.1L422 250.1L422.9 252.19L423.9 252.89L424.9 253.33L425.9 253.61L426.9 253.79L426.9 254.41L425.9 254.59L424.9 254.87L423.9 255.31L422.9 256.01L422 258.1L421.5 259.1L421 256.85ZM430.33 251.35L430.83 249.1L431.33 250.1L432.23 252.19L433.23 252.89L434.23 253.33L435.23 253.61L436.23 253.79L436.23 254.41L435.23 254.59L434.23 254.87L433.23 255.31L432.23 256.01L431.33 258.1L430.83 259.1L430.33 256.85ZM439.66 251.35L440.16 249.1L440.66 250.1L441.56 252.19L442.56 252.89L443.56 253.33L444.56 253.61L445.56 253.79L445.56 254.41L444.56 254.59L443.56 254.87L442.56 255.31L441.56 256.01L440.66 258.1L440.16 259.1L439.66 256.85ZM448.99 251.35L449.49 249.1L449.99 250.1L450.89 252.19L451.89 252.89L452.89 253.33L453.89 253.61L454.89 253.79L454.89 254.41L453.89 254.59L452.89 254.87L451.89 255.31L450.89 256.01L449.99 258.1L449.49 259.1L448.99 256.85ZM458.32 251.35L458.82 249.1L459.32 250.1L460.22 252.19L461.22 252.89L462.22 253.33L463.22 253.61L464.22 253.79L464.22 254.41L463.22 254.59L462.22 254.87L461.22 255.31L460.22 256.01L459.32 258.1L458.82 259.1L458.32 256.85ZM467.65 251.35L468.15 249.1L468.65 250.1L469.55 252.19L470.55 252.89L471.55 253.33L472.55 253.61L473.55 253.79L473.55 254.41L472.55 254.59L471.55 254.87L470.55 255.31L469.55 256.01L468.65 258.1L468.15 259.1L467.65 256.85ZM476.98 251.35L477.48 249.1L477.98 250.1L478.88 252.19L479.88 252.89L480.88 253.33L481.88 253.61L482.88 253.79L482.88 254.41L481.88 254.59L480.88 254.87L479.88 255.31L478.88 256.01L477.98 258.1L477.48 259.1L476.98 256.85ZM486.31 251.35L486.81 249.1L487.31 250.1L488.21 252.19L489.21 252.89L490.21 253.33L491.21 253.61L492.21 253.79L492.21 254.41L491.21 254.59L490.21 254.87L489.21 255.31L488.21 256.01L487.31 258.1L486.81 259.1L486.31 256.85ZM495.64 251.35L496.14 249.1L496.64 250.1L497.54 252.19L498.54 252.89L499.54 253.33L500.54 253.61L501.54 253.79L501.54 254.41L500.54 254.59L499.54 254.87L498.54 255.31L497.54 256.01L496.64 258.1L496.14 259.1L495.64 256.85ZM504.97 251.35L505.47 249.1L505.97 250.1L506.87 252.19L507.87 252.89L508.87 253.33L509.87 253.61L510.87 253.79L510.87 254.41L509.87 254.59L508.87 254.87L507.87 255.31L506.87 256.01L505.97 258.1L505.47 259.1L504.97 256.85ZM514.3 251.35L514.8 249.1L515.3 250.1L516.2 252.19L517.2 252.89L518.2 253.33L519.2 253.61L520.2 253.79L520.2 254.41L519.2 254.59L518.2 254.87L517.2 255.31L516.2 256.01L515.3 258.1L514.8 259.1L514.3 256.85ZM523.63 251.35L524.13 249.1L524.63 250.1L525.53 252.19L526.53 252.89L527.53 253.33L528.53 253.61L529.53 253.79L529.53 254.41L528.53 254.59L527.53 254.87L526.53 255.31L525.53 256.01L524.63 258.1L524.13 259.1L523.63 256.85ZM532.96 251.35L533.46 249.1L533.96 250.1L534.86 252.19L535.86 252.89L536.86 253.33L537.86 253.61L538.86 253.79L538.86 254.41L537.86 254.59L536.86 254.87L535.86 255.31L534.86 256.01L533.96 258.1L533.46 259.1L532.96 256.85ZM542.29 251.35L542.79 249.1L543.29 250.1L544.19 252.19L545.19 252.89L546.19 253.33L547.19 253.61L548.19 253.79L548.19 254.41L547.19 254.59L546.19 254.87L545.19 255.31L544.19 256.01L543.29 258.1L542.79 259.1L542.29 256.85ZM551.62 251.35L552.12 249.1L552.62 250.1L553.52 252.19L554.52 252.89L555.52 253.33L556.52 253.61L557.52 253.79L557.52 254.41L556.52 254.59L555.52 254.87L554.52 255.31L553.52 256.01L552.62 258.1L552.12 259.1L551.62 256.85ZM560.95 251.35L561.45 249.1L561.95 250.1L562.85 252.19L563.85 252.89L564.85 253.33L565.85 253.61L566.85 253.79L566.85 254.41L565.85 254.59L564.85 254.87L563.85 255.31L562.85 256.01L561.95 258.1L561.45 259.1L560.95 256.85ZM570.28 251.35L570.78 249.1L571.28 250.1L572.18 252.19L573.18 252.89L574.18 253.33L575.18 253.61L576.18 253.79L576.18 254.41L575.18 254.59L574.18 254.87L573.18 255.31L572.18 256.01L571.28 258.1L570.78 259.1L570.28 256.85ZM579.61 251.35L580.11 249.1L580.61 250.1L581.51 252.19L582.51 252.89L583.51 253.33L584.51 253.61L585.51 253.79L585.51 254.41L584.51 254.59L583.51 254.87L582.51 255.31L581.51 256.01L580.61 258.1L580.11 259.1L579.61 256.85ZM588.94 251.35L589.44 249.1L589.94 250.1L590.84 252.19L591.84 252.89L592.84 253.33L593.84 253.61L594.84 253.79L594.84 254.41L593.84 254.59L592.84 254.87L591.84 255.31L590.84 256.01L589.94 258.1L589.44 259.1L588.94 256.85ZM598.27 251.35L598.77 249.1L599.27 250.1L600.17 252.19L601.17 252.89L602.17 253.33L603.17 253.61L604.17 253.79L604.17 254.41L603.17 254.59L602.17 254.87L601.17 255.31L600.17 256.01L599.27 258.1L598.77 259.1L598.27 256.85ZM607.6 251.35L608.1 249.1L608.6 250.1L609.5 252.19L610.5 252.89L611.5 253.33L612.5 253.61L613.5 253.79L613.5 254.41L612.5 254.59L611.5 254.87L610.5 255.31L609.5 256.01L608.6 258.1L608.1 259.1L607.6 256.85ZM616.93 251.35L617.43 249.1L617.93 250.1L618.83 252.19L619.83 252.89L620.83 253.33L621.83 253.61L622.83 253.79L622.83 254.41L621.83 254.59L620.83 254.87L619.83 255.31L618.83 256.01L617.93 258.1L617.43 259.1L616.93 256.85ZM626.26 251.35L626.76 249.1L627.26 250.1L628.16 252.19L629.16 252.89L630.16 253.33L631.16 253.61L632.16 253.79L632.16 254.41L631.16 254.59L630.16 254.87L629.16 255.31L628.16 256.01L627.26 258.1L626.76 259.1L626.26 256.85ZM635.59 251.35L636.09 249.1L636.59 250.1L637.49 252.19L638.49 252.89L639.49 253.33L640.49 253.61L641.49 253.79L641.49 254.41L640.49 254.59L639.49 254.87L638.49 255.31L637.49 256.01L636.59 258.1L636.09 259.1L635.59 256.85ZM644.92 251.35L645.42 249.1L645.92 250.1L646.82 252.19L647.82 252.89L648.82 253.33L649.82 253.61L650.82 253.79L650.82 254.41L649.82 254.59L648.82 254.87L647.82 255.31L646.82 256.01L645.92 258.1L645.42 259.1L644.92 256.85ZM654.25 251.35L654.75 249.1L655.25 250.1L656.15 252.19L657.15 252.89L658.15 253.33L659.15 253.61L660.15 253.79L660.15 254.41L659.15 254.59L658.15 254.87L657.15 255.31L656.15 256.01L655.25 258.1L654.75 259.1L654.25 256.85ZM663.58 251.35L664.08 249.1L664.58 250.1L665.48 252.19L666.48 252.89L667.48 253.33L668.48 253.61L669.48 253.79L669.48 254.41L668.48 254.59L667.48 254.87L666.48 255.31L665.48 256.01L664.58 258.1L664.08 259.1L663.58 256.85ZM672.91 251.35L673.41 249.1L673.91 250.1L674.81 252.19L675.81 252.89L676.81 253.33L677.81 253.61L678.81 253.79L678.81 254.41L677.81 254.59L676.81 254.87L675.81 255.31L674.81 256.01L673.91 258.1L673.41 259.1L672.91 256.85ZM682.24 251.35L682.74 249.1L683.24 250.1L684.14 252.19L685.14 252.89L686.14 253.33L687.14 253.61L688.14 253.79L688.14 254.41L687.14 254.59L686.14 254.87L685.14 255.31L684.14 256.01L683.24 258.1L682.74 259.1L682.24 256.85ZM691.57 251.35L692.07 249.1L692.57 250.1L693.47 252.19L694.47 252.89L695.47 253.33L696.47 253.61L697.47 253.79L697.47 254.41L696.47 254.59L695.47 254.87L694.47 255.31L693.47 256.01L692.57 258.1L692.07 259.1L691.57 256.85ZM700.9 251.35L701.4 249.1L701.9 250.1L702.8 252.19L703.8 252.89L704.8 253.33L705.8 253.61L706.8 253.79L706.8 254.41L705.8 254.59L704.8 254.87L703.8 255.31L702.8 256.01L701.9 258.1L701.4 259.1L700.9 256.85Z" fill="#f9699f"/></g><path d="M140.6 243.5V264.7" stroke="#c9c9c0" stroke-width="1"/><path d="M421.4 278V319.8" stroke="#8b9095" stroke-width="0.9"/><path d="M424.4 278V319.8M456.5 278V319.8M488.6 278V319.8M520.7 278V319.8M552.8 278V319.8M584.9 278V319.8M617 278V319.8M649.1 278V319.8M681.2 278V319.8" stroke="#7d8388" stroke-width="0.9"/><path d="M421 299.2H703" stroke="#8c3a5e" stroke-width="0.6"/><clipPath id="cz2"><rect x="139.5" y="278" width="564" height="41.8"/></clipPath><g clip-path="url(#cz2)"><path d="M425.2 287.98L425.7 278.8L426.2 282.88L427.1 290.94L428.1 291.89L429.1 292.73L430.1 293.47L431.1 294.13L432.1 294.71L433.1 295.23L434.1 295.68L435.1 296.09L436.1 296.44L437.1 296.76L438.1 297.04L439.1 297.29L440.1 297.51L441.1 297.7L442.1 297.87L443.1 298.03L444.1 298.16L445.1 298.28L446.1 298.39L447.1 298.48L448.1 298.56L449.1 298.64L450.1 298.7L451.1 298.76L452.1 298.81L453.1 298.85L454.1 298.89L455.1 298.93L456.1 298.95L456.1 299.45L455.1 299.47L454.1 299.51L453.1 299.55L452.1 299.59L451.1 299.64L450.1 299.7L449.1 299.76L448.1 299.84L447.1 299.92L446.1 300.01L445.1 300.12L444.1 300.24L443.1 300.37L442.1 300.53L441.1 300.7L440.1 300.89L439.1 301.11L438.1 301.36L437.1 301.64L436.1 301.96L435.1 302.31L434.1 302.72L433.1 303.17L432.1 303.69L431.1 304.27L430.1 304.93L429.1 305.67L428.1 306.51L427.1 307.46L426.2 315.52L425.7 319.6L425.2 310.42ZM457.3 287.98L457.8 278.8L458.3 282.88L459.2 290.94L460.2 291.89L461.2 292.73L462.2 293.47L463.2 294.13L464.2 294.71L465.2 295.23L466.2 295.68L467.2 296.09L468.2 296.44L469.2 296.76L470.2 297.04L471.2 297.29L472.2 297.51L473.2 297.7L474.2 297.87L475.2 298.03L476.2 298.16L477.2 298.28L478.2 298.39L479.2 298.48L480.2 298.56L481.2 298.64L482.2 298.7L483.2 298.76L484.2 298.81L485.2 298.85L486.2 298.89L487.2 298.93L488.2 298.95L488.2 299.45L487.2 299.47L486.2 299.51L485.2 299.55L484.2 299.59L483.2 299.64L482.2 299.7L481.2 299.76L480.2 299.84L479.2 299.92L478.2 300.01L477.2 300.12L476.2 300.24L475.2 300.37L474.2 300.53L473.2 300.7L472.2 300.89L471.2 301.11L470.2 301.36L469.2 301.64L468.2 301.96L467.2 302.31L466.2 302.72L465.2 303.17L464.2 303.69L463.2 304.27L462.2 304.93L461.2 305.67L460.2 306.51L459.2 307.46L458.3 315.52L457.8 319.6L457.3 310.42ZM489.4 287.98L489.9 278.8L490.4 282.88L491.3 290.94L492.3 291.89L493.3 292.73L494.3 293.47L495.3 294.13L496.3 294.71L497.3 295.23L498.3 295.68L499.3 296.09L500.3 296.44L501.3 296.76L502.3 297.04L503.3 297.29L504.3 297.51L505.3 297.7L506.3 297.87L507.3 298.03L508.3 298.16L509.3 298.28L510.3 298.39L511.3 298.48L512.3 298.56L513.3 298.64L514.3 298.7L515.3 298.76L516.3 298.81L517.3 298.85L518.3 298.89L519.3 298.93L520.3 298.95L520.3 299.45L519.3 299.47L518.3 299.51L517.3 299.55L516.3 299.59L515.3 299.64L514.3 299.7L513.3 299.76L512.3 299.84L511.3 299.92L510.3 300.01L509.3 300.12L508.3 300.24L507.3 300.37L506.3 300.53L505.3 300.7L504.3 300.89L503.3 301.11L502.3 301.36L501.3 301.64L500.3 301.96L499.3 302.31L498.3 302.72L497.3 303.17L496.3 303.69L495.3 304.27L494.3 304.93L493.3 305.67L492.3 306.51L491.3 307.46L490.4 315.52L489.9 319.6L489.4 310.42ZM521.5 287.98L522 278.8L522.5 282.88L523.4 290.94L524.4 291.89L525.4 292.73L526.4 293.47L527.4 294.13L528.4 294.71L529.4 295.23L530.4 295.68L531.4 296.09L532.4 296.44L533.4 296.76L534.4 297.04L535.4 297.29L536.4 297.51L537.4 297.7L538.4 297.87L539.4 298.03L540.4 298.16L541.4 298.28L542.4 298.39L543.4 298.48L544.4 298.56L545.4 298.64L546.4 298.7L547.4 298.76L548.4 298.81L549.4 298.85L550.4 298.89L551.4 298.93L552.4 298.95L552.4 299.45L551.4 299.47L550.4 299.51L549.4 299.55L548.4 299.59L547.4 299.64L546.4 299.7L545.4 299.76L544.4 299.84L543.4 299.92L542.4 300.01L541.4 300.12L540.4 300.24L539.4 300.37L538.4 300.53L537.4 300.7L536.4 300.89L535.4 301.11L534.4 301.36L533.4 301.64L532.4 301.96L531.4 302.31L530.4 302.72L529.4 303.17L528.4 303.69L527.4 304.27L526.4 304.93L525.4 305.67L524.4 306.51L523.4 307.46L522.5 315.52L522 319.6L521.5 310.42ZM553.6 287.98L554.1 278.8L554.6 282.88L555.5 290.94L556.5 291.89L557.5 292.73L558.5 293.47L559.5 294.13L560.5 294.71L561.5 295.23L562.5 295.68L563.5 296.09L564.5 296.44L565.5 296.76L566.5 297.04L567.5 297.29L568.5 297.51L569.5 297.7L570.5 297.87L571.5 298.03L572.5 298.16L573.5 298.28L574.5 298.39L575.5 298.48L576.5 298.56L577.5 298.64L578.5 298.7L579.5 298.76L580.5 298.81L581.5 298.85L582.5 298.89L583.5 298.93L584.5 298.95L584.5 299.45L583.5 299.47L582.5 299.51L581.5 299.55L580.5 299.59L579.5 299.64L578.5 299.7L577.5 299.76L576.5 299.84L575.5 299.92L574.5 300.01L573.5 300.12L572.5 300.24L571.5 300.37L570.5 300.53L569.5 300.7L568.5 300.89L567.5 301.11L566.5 301.36L565.5 301.64L564.5 301.96L563.5 302.31L562.5 302.72L561.5 303.17L560.5 303.69L559.5 304.27L558.5 304.93L557.5 305.67L556.5 306.51L555.5 307.46L554.6 315.52L554.1 319.6L553.6 310.42ZM585.7 287.98L586.2 278.8L586.7 282.88L587.6 290.94L588.6 291.89L589.6 292.73L590.6 293.47L591.6 294.13L592.6 294.71L593.6 295.23L594.6 295.68L595.6 296.09L596.6 296.44L597.6 296.76L598.6 297.04L599.6 297.29L600.6 297.51L601.6 297.7L602.6 297.87L603.6 298.03L604.6 298.16L605.6 298.28L606.6 298.39L607.6 298.48L608.6 298.56L609.6 298.64L610.6 298.7L611.6 298.76L612.6 298.81L613.6 298.85L614.6 298.89L615.6 298.93L616.6 298.95L616.6 299.45L615.6 299.47L614.6 299.51L613.6 299.55L612.6 299.59L611.6 299.64L610.6 299.7L609.6 299.76L608.6 299.84L607.6 299.92L606.6 300.01L605.6 300.12L604.6 300.24L603.6 300.37L602.6 300.53L601.6 300.7L600.6 300.89L599.6 301.11L598.6 301.36L597.6 301.64L596.6 301.96L595.6 302.31L594.6 302.72L593.6 303.17L592.6 303.69L591.6 304.27L590.6 304.93L589.6 305.67L588.6 306.51L587.6 307.46L586.7 315.52L586.2 319.6L585.7 310.42ZM617.8 287.98L618.3 278.8L618.8 282.88L619.7 290.94L620.7 291.89L621.7 292.73L622.7 293.47L623.7 294.13L624.7 294.71L625.7 295.23L626.7 295.68L627.7 296.09L628.7 296.44L629.7 296.76L630.7 297.04L631.7 297.29L632.7 297.51L633.7 297.7L634.7 297.87L635.7 298.03L636.7 298.16L637.7 298.28L638.7 298.39L639.7 298.48L640.7 298.56L641.7 298.64L642.7 298.7L643.7 298.76L644.7 298.81L645.7 298.85L646.7 298.89L647.7 298.93L648.7 298.95L648.7 299.45L647.7 299.47L646.7 299.51L645.7 299.55L644.7 299.59L643.7 299.64L642.7 299.7L641.7 299.76L640.7 299.84L639.7 299.92L638.7 300.01L637.7 300.12L636.7 300.24L635.7 300.37L634.7 300.53L633.7 300.7L632.7 300.89L631.7 301.11L630.7 301.36L629.7 301.64L628.7 301.96L627.7 302.31L626.7 302.72L625.7 303.17L624.7 303.69L623.7 304.27L622.7 304.93L621.7 305.67L620.7 306.51L619.7 307.46L618.8 315.52L618.3 319.6L617.8 310.42ZM649.9 287.98L650.4 278.8L650.9 282.88L651.8 290.94L652.8 291.89L653.8 292.73L654.8 293.47L655.8 294.13L656.8 294.71L657.8 295.23L658.8 295.68L659.8 296.09L660.8 296.44L661.8 296.76L662.8 297.04L663.8 297.29L664.8 297.51L665.8 297.7L666.8 297.87L667.8 298.03L668.8 298.16L669.8 298.28L670.8 298.39L671.8 298.48L672.8 298.56L673.8 298.64L674.8 298.7L675.8 298.76L676.8 298.81L677.8 298.85L678.8 298.89L679.8 298.93L680.8 298.95L680.8 299.45L679.8 299.47L678.8 299.51L677.8 299.55L676.8 299.59L675.8 299.64L674.8 299.7L673.8 299.76L672.8 299.84L671.8 299.92L670.8 300.01L669.8 300.12L668.8 300.24L667.8 300.37L666.8 300.53L665.8 300.7L664.8 300.89L663.8 301.11L662.8 301.36L661.8 301.64L660.8 301.96L659.8 302.31L658.8 302.72L657.8 303.17L656.8 303.69L655.8 304.27L654.8 304.93L653.8 305.67L652.8 306.51L651.8 307.46L650.9 315.52L650.4 319.6L649.9 310.42ZM682 287.98L682.5 278.8L683 282.88L683.9 290.94L684.9 291.89L685.9 292.73L686.9 293.47L687.9 294.13L688.9 294.71L689.9 295.23L690.9 295.68L691.9 296.09L692.9 296.44L693.9 296.76L694.9 297.04L695.9 297.29L696.9 297.51L697.9 297.7L698.9 297.87L699.9 298.03L700.9 298.16L701.9 298.28L702.9 298.39L703.9 298.48L704.9 298.56L705.9 298.64L706.9 298.7L707.9 298.76L708.9 298.81L709.9 298.85L710.9 298.89L711.9 298.93L712.9 298.95L712.9 299.45L711.9 299.47L710.9 299.51L709.9 299.55L708.9 299.59L707.9 299.64L706.9 299.7L705.9 299.76L704.9 299.84L703.9 299.92L702.9 300.01L701.9 300.12L700.9 300.24L699.9 300.37L698.9 300.53L697.9 300.7L696.9 300.89L695.9 301.11L694.9 301.36L693.9 301.64L692.9 301.96L691.9 302.31L690.9 302.72L689.9 303.17L688.9 303.69L687.9 304.27L686.9 304.93L685.9 305.67L684.9 306.51L683.9 307.46L683 315.52L682.5 319.6L682 310.42Z" fill="#f4457c"/><path d="M426.9 295.9L427.4 293.2L427.9 294.4L428.8 293.5L429.8 294.37L430.8 295.11L431.8 295.74L432.8 296.27L433.8 296.72L434.8 297.1L435.8 297.42L436.8 297.7L437.8 297.93L438.8 298.12L439.8 298.29L440.8 298.43L441.8 298.55L442.8 298.65L443.8 298.73L443.8 299.67L442.8 299.75L441.8 299.85L440.8 299.97L439.8 300.11L438.8 300.28L437.8 300.47L436.8 300.7L435.8 300.98L434.8 301.3L433.8 301.68L432.8 302.13L431.8 302.66L430.8 303.29L429.8 304.03L428.8 304.9L427.9 304L427.4 305.2L426.9 302.5ZM459 295.9L459.5 293.2L460 294.4L460.9 293.5L461.9 294.37L462.9 295.11L463.9 295.74L464.9 296.27L465.9 296.72L466.9 297.1L467.9 297.42L468.9 297.7L469.9 297.93L470.9 298.12L471.9 298.29L472.9 298.43L473.9 298.55L474.9 298.65L475.9 298.73L475.9 299.67L474.9 299.75L473.9 299.85L472.9 299.97L471.9 300.11L470.9 300.28L469.9 300.47L468.9 300.7L467.9 300.98L466.9 301.3L465.9 301.68L464.9 302.13L463.9 302.66L462.9 303.29L461.9 304.03L460.9 304.9L460 304L459.5 305.2L459 302.5ZM491.1 295.9L491.6 293.2L492.1 294.4L493 293.5L494 294.37L495 295.11L496 295.74L497 296.27L498 296.72L499 297.1L500 297.42L501 297.7L502 297.93L503 298.12L504 298.29L505 298.43L506 298.55L507 298.65L508 298.73L508 299.67L507 299.75L506 299.85L505 299.97L504 300.11L503 300.28L502 300.47L501 300.7L500 300.98L499 301.3L498 301.68L497 302.13L496 302.66L495 303.29L494 304.03L493 304.9L492.1 304L491.6 305.2L491.1 302.5ZM523.2 295.9L523.7 293.2L524.2 294.4L525.1 293.5L526.1 294.37L527.1 295.11L528.1 295.74L529.1 296.27L530.1 296.72L531.1 297.1L532.1 297.42L533.1 297.7L534.1 297.93L535.1 298.12L536.1 298.29L537.1 298.43L538.1 298.55L539.1 298.65L540.1 298.73L540.1 299.67L539.1 299.75L538.1 299.85L537.1 299.97L536.1 300.11L535.1 300.28L534.1 300.47L533.1 300.7L532.1 300.98L531.1 301.3L530.1 301.68L529.1 302.13L528.1 302.66L527.1 303.29L526.1 304.03L525.1 304.9L524.2 304L523.7 305.2L523.2 302.5ZM555.3 295.9L555.8 293.2L556.3 294.4L557.2 293.5L558.2 294.37L559.2 295.11L560.2 295.74L561.2 296.27L562.2 296.72L563.2 297.1L564.2 297.42L565.2 297.7L566.2 297.93L567.2 298.12L568.2 298.29L569.2 298.43L570.2 298.55L571.2 298.65L572.2 298.73L572.2 299.67L571.2 299.75L570.2 299.85L569.2 299.97L568.2 300.11L567.2 300.28L566.2 300.47L565.2 300.7L564.2 300.98L563.2 301.3L562.2 301.68L561.2 302.13L560.2 302.66L559.2 303.29L558.2 304.03L557.2 304.9L556.3 304L555.8 305.2L555.3 302.5ZM587.4 295.9L587.9 293.2L588.4 294.4L589.3 293.5L590.3 294.37L591.3 295.11L592.3 295.74L593.3 296.27L594.3 296.72L595.3 297.1L596.3 297.42L597.3 297.7L598.3 297.93L599.3 298.12L600.3 298.29L601.3 298.43L602.3 298.55L603.3 298.65L604.3 298.73L604.3 299.67L603.3 299.75L602.3 299.85L601.3 299.97L600.3 300.11L599.3 300.28L598.3 300.47L597.3 300.7L596.3 300.98L595.3 301.3L594.3 301.68L593.3 302.13L592.3 302.66L591.3 303.29L590.3 304.03L589.3 304.9L588.4 304L587.9 305.2L587.4 302.5ZM619.5 295.9L620 293.2L620.5 294.4L621.4 293.5L622.4 294.37L623.4 295.11L624.4 295.74L625.4 296.27L626.4 296.72L627.4 297.1L628.4 297.42L629.4 297.7L630.4 297.93L631.4 298.12L632.4 298.29L633.4 298.43L634.4 298.55L635.4 298.65L636.4 298.73L636.4 299.67L635.4 299.75L634.4 299.85L633.4 299.97L632.4 300.11L631.4 300.28L630.4 300.47L629.4 300.7L628.4 300.98L627.4 301.3L626.4 301.68L625.4 302.13L624.4 302.66L623.4 303.29L622.4 304.03L621.4 304.9L620.5 304L620 305.2L619.5 302.5ZM651.6 295.9L652.1 293.2L652.6 294.4L653.5 293.5L654.5 294.37L655.5 295.11L656.5 295.74L657.5 296.27L658.5 296.72L659.5 297.1L660.5 297.42L661.5 297.7L662.5 297.93L663.5 298.12L664.5 298.29L665.5 298.43L666.5 298.55L667.5 298.65L668.5 298.73L668.5 299.67L667.5 299.75L666.5 299.85L665.5 299.97L664.5 300.11L663.5 300.28L662.5 300.47L661.5 300.7L660.5 300.98L659.5 301.3L658.5 301.68L657.5 302.13L656.5 302.66L655.5 303.29L654.5 304.03L653.5 304.9L652.6 304L652.1 305.2L651.6 302.5ZM683.7 295.9L684.2 293.2L684.7 294.4L685.6 293.5L686.6 294.37L687.6 295.11L688.6 295.74L689.6 296.27L690.6 296.72L691.6 297.1L692.6 297.42L693.6 297.7L694.6 297.93L695.6 298.12L696.6 298.29L697.6 298.43L698.6 298.55L699.6 298.65L700.6 298.73L700.6 299.67L699.6 299.75L698.6 299.85L697.6 299.97L696.6 300.11L695.6 300.28L694.6 300.47L693.6 300.7L692.6 300.98L691.6 301.3L690.6 301.68L689.6 302.13L688.6 302.66L687.6 303.29L686.6 304.03L685.6 304.9L684.7 304L684.2 305.2L683.7 302.5Z" fill="#ff62a6"/><path d="M427 291.34V307.06M428.55 292.69V305.71M430.1 293.81V304.59M431.65 294.74V303.66M433.2 295.51V302.89M434.75 296.14V302.26M436.3 296.67V301.73M437.85 297.11V301.29M439.4 297.47V300.93M459.1 291.34V307.06M460.65 292.69V305.71M462.2 293.81V304.59M463.75 294.74V303.66M465.3 295.51V302.89M466.85 296.14V302.26M468.4 296.67V301.73M469.95 297.11V301.29M471.5 297.47V300.93M491.2 291.34V307.06M492.75 292.69V305.71M494.3 293.81V304.59M495.85 294.74V303.66M497.4 295.51V302.89M498.95 296.14V302.26M500.5 296.67V301.73M502.05 297.11V301.29M503.6 297.47V300.93M523.3 291.34V307.06M524.85 292.69V305.71M526.4 293.81V304.59M527.95 294.74V303.66M529.5 295.51V302.89M531.05 296.14V302.26M532.6 296.67V301.73M534.15 297.11V301.29M535.7 297.47V300.93M555.4 291.34V307.06M556.95 292.69V305.71M558.5 293.81V304.59M560.05 294.74V303.66M561.6 295.51V302.89M563.15 296.14V302.26M564.7 296.67V301.73M566.25 297.11V301.29M567.8 297.47V300.93M587.5 291.34V307.06M589.05 292.69V305.71M590.6 293.81V304.59M592.15 294.74V303.66M593.7 295.51V302.89M595.25 296.14V302.26M596.8 296.67V301.73M598.35 297.11V301.29M599.9 297.47V300.93M619.6 291.34V307.06M621.15 292.69V305.71M622.7 293.81V304.59M624.25 294.74V303.66M625.8 295.51V302.89M627.35 296.14V302.26M628.9 296.67V301.73M630.45 297.11V301.29M632 297.47V300.93M651.7 291.34V307.06M653.25 292.69V305.71M654.8 293.81V304.59M656.35 294.74V303.66M657.9 295.51V302.89M659.45 296.14V302.26M661 296.67V301.73M662.55 297.11V301.29M664.1 297.47V300.93M683.8 291.34V307.06M685.35 292.69V305.71M686.9 293.81V304.59M688.45 294.74V303.66M690 295.51V302.89M691.55 296.14V302.26M693.1 296.67V301.73M694.65 297.11V301.29M696.2 297.47V300.93" stroke="#e0285a" stroke-width="0.6"/></g><path d="M372.15 348.81A11.1 11.1 0 1 1 383.25 348.81" fill="none" stroke="#43484d" stroke-width="3.3" stroke-linecap="round"/><circle cx="372.15" cy="348.81" r="3.1" fill="#cbccb6"/><path d="M416.05 348.81A11.1 11.1 0 1 1 427.15 348.81" fill="none" stroke="#43484d" stroke-width="3.3" stroke-linecap="round"/><circle cx="416.05" cy="348.81" r="3.1" fill="#cbccb6"/><path d="M589.6 347.9V340.6Q589.6 339.1 591.1 339.1H604M605 341.6V347.9Q605 349.4 603.5 349.4H590.6" fill="none" stroke="#cbccb6" stroke-width="1.8"/><path d="M602.4 336.4L606.7 339.1L602.4 341.8Z" fill="#cbccb6"/><path d="M592.2 346.7L587.9 349.4L592.2 352.1Z" fill="#cbccb6"/><path d="M633.6 347.9V340.6Q633.6 339.1 635.1 339.1H648M649 341.6V347.9Q649 349.4 647.5 349.4H634.6" fill="none" stroke="#cbccb6" stroke-width="1.8"/><path d="M646.4 336.4L650.7 339.1L646.4 341.8Z" fill="#cbccb6"/><path d="M636.2 346.7L631.9 349.4L636.2 352.1Z" fill="#cbccb6"/><path d="M733.2 379.4L746.2 386.1L733.2 392.8Z" fill="#cbccb6"/></svg>
<div class="t" style="top:237px;font-size:6.8px;color:#c9cdd0;left:141.6px;transform-origin:0 50%;transform:scaleX(0.75);">30.000</div>
<div class="t" style="top:266px;font-size:6.8px;color:#c9cdd0;left:141.8px;transform-origin:0 50%;transform:scaleX(0.69);">1.1.1</div>
<div class="t" style="top:237px;font-size:6.8px;color:#c9cdd0;right:322.7px;transform-origin:100% 50%;transform:scaleX(0.9);">(4) - 4.wav</div>
<div class="t" style="top:264px;font-size:6.8px;color:#c9cdd0;right:322.7px;transform-origin:100% 50%;transform:scaleX(0.84);">125.00/3.6% BPM</div>
<div class="b" style="left:0.3px;top:413.8px;width:40.5px;height:143.3px;border:1px solid #596065;border-radius:4px;"></div>
<div class="b" style="left:18.85px;top:419.8px;width:3.4px;height:132px;background:#399ab3"></div>
<div class="b" style="left:0.3px;top:414.5px;width:40.5px;height:10px;border-radius:4.5px;background:#3fb3d0"></div>
<div class="b" style="left:4.3px;top:419px;width:32.5px;height:1px;background:#297487"></div>
<div class="t" style="top:416px;font-size:9.5px;color:#a9ddea;right:987.8px;transform-origin:100% 50%;transform:scaleX(0.99);">0.0 dB</div>
<div class="t" style="left:32.2px;top:552.2px;font-size:10.5px;color:#3fb3d0;transform-origin:0 50%;transform:translate(0,-50%) rotate(-90deg) scaleX(0.95);">low</div>
<div class="b" style="left:0.1px;top:413.6px;width:40.9px;height:143.6px;background:rgba(114,118,120,0.72);border-radius:4.5px;"></div>
<div class="b" style="left:0.3px;top:558.7px;width:40.5px;height:27.9px;background:#222a31;border:1px solid #596065;border-radius:4px;"></div>
<div class="b" style="left:44.9px;top:413.8px;width:40.5px;height:143.3px;border:1px solid #596065;border-radius:4px;"></div>
<div class="b" style="left:63.45px;top:419.8px;width:3.4px;height:132px;background:#399ab3"></div>
<div class="b" style="left:44.9px;top:414.5px;width:40.5px;height:10px;border-radius:4.5px;background:#3fb3d0"></div>
<div class="b" style="left:48.9px;top:419px;width:32.5px;height:1px;background:#297487"></div>
<div class="t" style="top:416px;font-size:9.5px;color:#a9ddea;right:943.2px;transform-origin:100% 50%;transform:scaleX(0.99);">0.0 dB</div>
<div class="t" style="left:76.8px;top:552.2px;font-size:10.5px;color:#3fb3d0;transform-origin:0 50%;transform:translate(0,-50%) rotate(-90deg) scaleX(0.95);">mid</div>
<div class="b" style="left:44.7px;top:413.6px;width:40.9px;height:143.6px;background:rgba(114,118,120,0.72);border-radius:4.5px;"></div>
<div class="b" style="left:44.9px;top:558.7px;width:40.5px;height:27.9px;background:#222a31;border:1px solid #596065;border-radius:4px;"></div>
<div class="b" style="left:89.5px;top:413.8px;width:40.5px;height:143.3px;border:1px solid #596065;border-radius:4px;"></div>
<div class="b" style="left:108.05px;top:419.8px;width:3.4px;height:132px;background:#399ab3"></div>
<div class="b" style="left:89.5px;top:414.5px;width:40.5px;height:10px;border-radius:4.5px;background:#3fb3d0"></div>
<div class="b" style="left:93.5px;top:419px;width:32.5px;height:1px;background:#297487"></div>
<div class="t" style="top:416px;font-size:9.5px;color:#a9ddea;right:898.6px;transform-origin:100% 50%;transform:scaleX(0.99);">0.0 dB</div>
<div class="t" style="left:121.4px;top:552.2px;font-size:10.5px;color:#3fb3d0;transform-origin:0 50%;transform:translate(0,-50%) rotate(-90deg) scaleX(0.95);">high</div>
<div class="b" style="left:89.3px;top:413.6px;width:40.9px;height:143.6px;background:rgba(114,118,120,0.72);border-radius:4.5px;"></div>
<div class="b" style="left:89.5px;top:558.7px;width:40.5px;height:27.9px;background:#222a31;border:1px solid #596065;border-radius:4px;"></div>
<div class="b" style="left:138.3px;top:415.7px;width:566.3px;height:37.7px;background:#232a31;border:1px solid #555b60;border-radius:4px;"></div>
<div class="b" style="left:138.9px;top:457.8px;width:565.7px;height:43.2px;background:#232a31;border:1px solid #5a6064;border-radius:4px;"></div>
<div class="b" style="left:138px;top:505.3px;width:40.7px;height:39px;background:#222a31;border:1px solid #53595d;border-radius:4.5px;"></div>
<div class="t" style="top:517px;font-size:15.2px;color:#3fb3d0;left:158.3px;transform:translateX(-50%) scaleX(0.88);">1</div>
<div class="b" style="left:138px;top:547.6px;width:40.7px;height:39.1px;background:#222a31;border:1px solid #53595d;border-radius:4.5px;"></div>
<div class="t" style="top:553px;font-size:9.5px;color:#3fb3d0;left:158.3px;transform:translateX(-50%) scaleX(1.1);">&lt;&lt;</div>
<div class="t" style="top:572px;font-size:9.6px;color:#3fb3d0;left:158.3px;transform:translateX(-50%) scaleX(0.97);">16</div>
<div class="b" style="left:181.83px;top:505.3px;width:40.7px;height:39px;background:#222a31;border:1px solid #53595d;border-radius:4.5px;"></div>
<div class="t" style="top:517px;font-size:15.2px;color:#3fb3d0;left:202.13px;transform:translateX(-50%) scaleX(0.88);">2</div>
<div class="b" style="left:181.83px;top:547.6px;width:40.7px;height:39.1px;background:#222a31;border:1px solid #53595d;border-radius:4.5px;"></div>
<div class="t" style="top:554px;font-size:8.6px;color:#3fb3d0;left:202.13px;transform:translateX(-50%) scaleX(0.76);">JUMP SIZE</div>
<div class="t" style="top:572px;font-size:9.6px;color:#3fb3d0;left:202.13px;transform:translateX(-50%) scaleX(1.11);">/2</div>
<div class="b" style="left:225.66px;top:505.3px;width:40.7px;height:39px;background:#222a31;border:1px solid #53595d;border-radius:4.5px;"></div>
<div class="t" style="top:517px;font-size:15.2px;color:#3fb3d0;left:245.96px;transform:translateX(-50%) scaleX(0.88);">3</div>
<div class="b" style="left:225.66px;top:547.6px;width:40.7px;height:39.1px;background:#222a31;border:1px solid #53595d;border-radius:4.5px;"></div>
<div class="t" style="top:554px;font-size:8.6px;color:#3fb3d0;left:245.96px;transform:translateX(-50%) scaleX(0.76);">JUMP SIZE</div>
<div class="t" style="top:572px;font-size:9.6px;color:#3fb3d0;left:245.96px;transform:translateX(-50%) scaleX(0.91);">x2</div>
<div class="b" style="left:269.49px;top:505.3px;width:40.7px;height:39px;background:#222a31;border:1px solid #53595d;border-radius:4.5px;"></div>
<div class="t" style="top:517px;font-size:15.2px;color:#3fb3d0;left:289.79px;transform:translateX(-50%) scaleX(0.88);">4</div>
<div class="b" style="left:269.49px;top:547.6px;width:40.7px;height:39.1px;background:#222a31;border:1px solid #53595d;border-radius:4.5px;"></div>
<div class="t" style="top:553px;font-size:9.5px;color:#3fb3d0;left:289.79px;transform:translateX(-50%) scaleX(1.1);">&gt;&gt;</div>
<div class="t" style="top:572px;font-size:9.6px;color:#3fb3d0;left:289.79px;transform:translateX(-50%) scaleX(0.97);">16</div>
<div class="b" style="left:362.3px;top:504.3px;width:30.6px;height:31.3px;border:1px solid #4a5157;border-radius:4.5px;"></div>
<div class="t" style="top:516px;font-size:7.4px;color:#3fb3d0;left:377.7px;transform:translateX(-50%) scaleX(1);">0.0%</div>
<div class="t" style="top:533px;font-size:7.4px;color:#3fb3d0;left:377.7px;transform:translateX(-50%) scaleX(0.8);">FX1</div>
<div class="b" style="left:358px;top:547.6px;width:40.4px;height:39.1px;background:#222a31;border:1px solid #53595d;border-radius:4.5px;"></div>
<div class="t" style="top:563px;font-size:10px;color:#3fb3d0;left:378.2px;transform:translateX(-50%) scaleX(0.76);">FX1</div>
<div class="b" style="left:406.2px;top:504.3px;width:30.6px;height:31.3px;border:1px solid #4a5157;border-radius:4.5px;"></div>
<div class="t" style="top:516px;font-size:7.4px;color:#3fb3d0;left:421.6px;transform:translateX(-50%) scaleX(1);">0.0%</div>
<div class="t" style="top:533px;font-size:7.4px;color:#3fb3d0;left:421.6px;transform:translateX(-50%) scaleX(0.8);">FX2</div>
<div class="b" style="left:401.4px;top:547.6px;width:40.4px;height:39.1px;background:#222a31;border:1px solid #53595d;border-radius:4.5px;"></div>
<div class="t" style="top:563px;font-size:10px;color:#3fb3d0;left:421.6px;transform:translateX(-50%) scaleX(0.76);">FX2</div>
<div class="b" style="left:488.9px;top:505.3px;width:40.8px;height:39px;background:#222a31;border:1px solid #53595d;border-radius:4.5px;"></div>
<div class="b" style="left:488.9px;top:547.6px;width:40.8px;height:39.1px;background:#222a31;border:1px solid #53595d;border-radius:4.5px;"></div>
<div class="t" style="top:520px;font-size:11.3px;color:#3fb3d0;left:509.3px;transform:translateX(-50%) scaleX(1);">1</div>
<div class="t" style="top:562px;font-size:11.3px;color:#3fb3d0;left:509.3px;transform:translateX(-50%) scaleX(1);">4</div>
<div class="b" style="left:532.9px;top:505.3px;width:40.8px;height:39px;background:#222a31;border:1px solid #53595d;border-radius:4.5px;"></div>
<div class="b" style="left:532.9px;top:547.6px;width:40.8px;height:39.1px;background:#222a31;border:1px solid #53595d;border-radius:4.5px;"></div>
<div class="t" style="top:520px;font-size:11.3px;color:#3fb3d0;left:553.3px;transform:translateX(-50%) scaleX(1);">2</div>
<div class="t" style="top:562px;font-size:11.3px;color:#3fb3d0;left:553.3px;transform:translateX(-50%) scaleX(1);">16</div>
<div class="b" style="left:576.9px;top:505.3px;width:40.8px;height:39px;background:#222a31;border:1px solid #53595d;border-radius:4.5px;"></div>
<div class="b" style="left:576.9px;top:547.6px;width:40.8px;height:39.1px;background:#222a31;border:1px solid #53595d;border-radius:4.5px;"></div>
<div class="t" style="top:512px;font-size:7.8px;color:#3fb3d0;left:597.3px;transform:translateX(-50%) scaleX(0.87);">LOOP</div>
<div class="t" style="top:530px;font-size:8.4px;color:#3fb3d0;left:597.3px;transform:translateX(-50%) scaleX(1);">16</div>
<div class="t" style="top:554px;font-size:8.3px;color:#3fb3d0;left:597.3px;transform:translateX(-50%) scaleX(0.79);">LOOP SIZE</div>
<div class="t" style="top:571px;font-size:9.6px;color:#3fb3d0;left:597.3px;transform:translateX(-50%) scaleX(1.1);">/2</div>
<div class="b" style="left:620.9px;top:505.3px;width:40.8px;height:39px;background:#222a31;border:1px solid #53595d;border-radius:4.5px;"></div>
<div class="b" style="left:620.9px;top:547.6px;width:40.8px;height:39.1px;background:#222a31;border:1px solid #53595d;border-radius:4.5px;"></div>
<div class="t" style="top:512px;font-size:7.8px;color:#3fb3d0;left:641.3px;transform:translateX(-50%) scaleX(0.78);">ROLL</div>
<div class="t" style="top:530px;font-size:8.4px;color:#3fb3d0;left:641.3px;transform:translateX(-50%) scaleX(1);">16</div>
<div class="t" style="top:554px;font-size:8.3px;color:#3fb3d0;left:641.3px;transform:translateX(-50%) scaleX(0.79);">LOOP SIZE</div>
<div class="t" style="top:571px;font-size:9.6px;color:#3fb3d0;left:641.3px;transform:translateX(-50%) scaleX(0.92);">x2</div>
<div class="b" style="left:665.4px;top:505.8px;width:39.8px;height:38px;background:#3fb3d0;border-radius:4.5px;"></div>
<div class="b" style="left:664.9px;top:547.6px;width:40.8px;height:39.1px;background:#222a31;border:1px solid #53595d;border-radius:4.5px;"></div>
<div class="t" style="top:519px;font-size:9.6px;color:#10242b;left:685.3px;transform:translateX(-50%) scaleX(0.85);">SYNC</div>
<div class="t" style="top:562px;font-size:9.6px;color:#3fb3d0;left:685.3px;transform:translateX(-50%) scaleX(0.83);">KEY</div>
<div class="b" style="left:710.9px;top:414.1px;width:54.9px;height:129.6px;border:1px solid #53595d;border-radius:4px;"></div>
<div class="b" style="left:737.1px;top:422.8px;width:3.4px;height:77.5px;background:#28373f"></div>
<div class="b" style="left:737.1px;top:500.3px;width:3.4px;height:38.1px;background:#3fb3d0"></div>
<div class="b" style="left:711.9px;top:495.9px;width:54.2px;height:8.8px;border-radius:4.4px;background:#3fb3d0"></div>
<div class="b" style="left:716px;top:499.7px;width:46px;height:1.2px;background:#1c515e"></div>
<div class="t" style="top:417px;font-size:9px;color:#3fb3d0;right:262.4px;transform-origin:100% 50%;transform:scaleX(0.94);">10.2%</div>
<div class="t" style="left:758.6px;top:539.4px;font-size:10px;color:#3fb3d0;transform-origin:0 50%;transform:translate(0,-50%) rotate(-90deg) scaleX(1);">Volume</div>
<div class="b" style="left:710.9px;top:546.6px;width:57.1px;height:40px;background:#222a31;border:1px solid #53595d;border-radius:4.5px;"></div>
<svg width="1024" height="767"><rect x="9.35" y="563.65" width="6" height="1.7" rx="1.1" fill="#25434e" stroke="#3fb3d0" stroke-width="0.7"/><rect x="9.35" y="566.65" width="6" height="1.7" rx="1.1" fill="#25434e" stroke="#3fb3d0" stroke-width="0.7"/><rect x="9.35" y="569.65" width="6" height="1.7" rx="1.1" fill="#25434e" stroke="#3fb3d0" stroke-width="0.7"/><rect x="9.35" y="572.65" width="6" height="1.7" rx="1.1" fill="#25434e" stroke="#3fb3d0" stroke-width="0.7"/><rect x="9.35" y="575.65" width="6" height="1.7" rx="1.1" fill="#25434e" stroke="#3fb3d0" stroke-width="0.7"/><rect x="9.35" y="578.65" width="6" height="1.7" rx="1.1" fill="#25434e" stroke="#3fb3d0" stroke-width="0.7"/><rect x="16.7" y="563.3" width="6.7" height="2.4" fill="#3fb3d0"/><rect x="16.7" y="566.3" width="6.7" height="2.4" fill="#3fb3d0"/><rect x="16.7" y="569.3" width="6.7" height="2.4" fill="#3fb3d0"/><rect x="16.7" y="572.3" width="6.7" height="2.4" fill="#3fb3d0"/><rect x="16.7" y="575.3" width="6.7" height="2.4" fill="#3fb3d0"/><rect x="16.7" y="578.3" width="6.7" height="2.4" fill="#3fb3d0"/><rect x="24.4" y="563.3" width="6.7" height="2.4" fill="#3fb3d0"/><rect x="24.4" y="566.3" width="6.7" height="2.4" fill="#3fb3d0"/><rect x="24.4" y="569.3" width="6.7" height="2.4" fill="#3fb3d0"/><rect x="24.4" y="572.3" width="6.7" height="2.4" fill="#3fb3d0"/><rect x="24.4" y="575.3" width="6.7" height="2.4" fill="#3fb3d0"/><rect x="24.4" y="578.3" width="6.7" height="2.4" fill="#3fb3d0"/><rect x="53.6" y="563.3" width="6.7" height="2.4" fill="#3fb3d0"/><rect x="53.6" y="566.3" width="6.7" height="2.4" fill="#3fb3d0"/><rect x="53.6" y="569.3" width="6.7" height="2.4" fill="#3fb3d0"/><rect x="53.6" y="572.3" width="6.7" height="2.4" fill="#3fb3d0"/><rect x="53.6" y="575.3" width="6.7" height="2.4" fill="#3fb3d0"/><rect x="53.6" y="578.3" width="6.7" height="2.4" fill="#3fb3d0"/><rect x="61.65" y="563.65" width="6" height="1.7" rx="1.1" fill="#25434e" stroke="#3fb3d0" stroke-width="0.7"/><rect x="61.65" y="566.65" width="6" height="1.7" rx="1.1" fill="#25434e" stroke="#3fb3d0" stroke-width="0.7"/><rect x="61.65" y="569.65" width="6" height="1.7" rx="1.1" fill="#25434e" stroke="#3fb3d0" stroke-width="0.7"/><rect x="61.65" y="572.65" width="6" height="1.7" rx="1.1" fill="#25434e" stroke="#3fb3d0" stroke-width="0.7"/><rect x="61.65" y="575.65" width="6" height="1.7" rx="1.1" fill="#25434e" stroke="#3fb3d0" stroke-width="0.7"/><rect x="61.65" y="578.65" width="6" height="1.7" rx="1.1" fill="#25434e" stroke="#3fb3d0" stroke-width="0.7"/><rect x="69" y="563.3" width="6.7" height="2.4" fill="#3fb3d0"/><rect x="69" y="566.3" width="6.7" height="2.4" fill="#3fb3d0"/><rect x="69" y="569.3" width="6.7" height="2.4" fill="#3fb3d0"/><rect x="69" y="572.3" width="6.7" height="2.4" fill="#3fb3d0"/><rect x="69" y="575.3" width="6.7" height="2.4" fill="#3fb3d0"/><rect x="69" y="578.3" width="6.7" height="2.4" fill="#3fb3d0"/><rect x="98.2" y="563.3" width="6.7" height="2.4" fill="#3fb3d0"/><rect x="98.2" y="566.3" width="6.7" height="2.4" fill="#3fb3d0"/><rect x="98.2" y="569.3" width="6.7" height="2.4" fill="#3fb3d0"/><rect x="98.2" y="572.3" width="6.7" height="2.4" fill="#3fb3d0"/><rect x="98.2" y="575.3" width="6.7" height="2.4" fill="#3fb3d0"/><rect x="98.2" y="578.3" width="6.7" height="2.4" fill="#3fb3d0"/><rect x="105.9" y="563.3" width="6.7" height="2.4" fill="#3fb3d0"/><rect x="105.9" y="566.3" width="6.7" height="2.4" fill="#3fb3d0"/><rect x="105.9" y="569.3" width="6.7" height="2.4" fill="#3fb3d0"/><rect x="105.9" y="572.3" width="6.7" height="2.4" fill="#3fb3d0"/><rect x="105.9" y="575.3" width="6.7" height="2.4" fill="#3fb3d0"/><rect x="105.9" y="578.3" width="6.7" height="2.4" fill="#3fb3d0"/><rect x="113.95" y="563.65" width="6" height="1.7" rx="1.1" fill="#25434e" stroke="#3fb3d0" stroke-width="0.7"/><rect x="113.95" y="566.65" width="6" height="1.7" rx="1.1" fill="#25434e" stroke="#3fb3d0" stroke-width="0.7"/><rect x="113.95" y="569.65" width="6" height="1.7" rx="1.1" fill="#25434e" stroke="#3fb3d0" stroke-width="0.7"/><rect x="113.95" y="572.65" width="6" height="1.7" rx="1.1" fill="#25434e" stroke="#3fb3d0" stroke-width="0.7"/><rect x="113.95" y="575.65" width="6" height="1.7" rx="1.1" fill="#25434e" stroke="#3fb3d0" stroke-width="0.7"/><rect x="113.95" y="578.65" width="6" height="1.7" rx="1.1" fill="#25434e" stroke="#3fb3d0" stroke-width="0.7"/><path d="M372.15 529.21A11.1 11.1 0 1 1 383.25 529.21" fill="none" stroke="#43484d" stroke-width="3.3" stroke-linecap="round"/><circle cx="372.15" cy="529.21" r="3.1" fill="#3fb3d0"/><path d="M416.05 529.21A11.1 11.1 0 1 1 427.15 529.21" fill="none" stroke="#43484d" stroke-width="3.3" stroke-linecap="round"/><circle cx="416.05" cy="529.21" r="3.1" fill="#3fb3d0"/><path d="M589.6 528.3V521Q589.6 519.5 591.1 519.5H604M605 522V528.3Q605 529.8 603.5 529.8H590.6" fill="none" stroke="#3fb3d0" stroke-width="1.8"/><path d="M602.4 516.8L606.7 519.5L602.4 522.2Z" fill="#3fb3d0"/><path d="M592.2 527.1L587.9 529.8L592.2 532.5Z" fill="#3fb3d0"/><path d="M633.6 528.3V521Q633.6 519.5 635.1 519.5H648M649 522V528.3Q649 529.8 647.5 529.8H634.6" fill="none" stroke="#3fb3d0" stroke-width="1.8"/><path d="M646.4 516.8L650.7 519.5L646.4 522.2Z" fill="#3fb3d0"/><path d="M636.2 527.1L631.9 529.8L636.2 532.5Z" fill="#3fb3d0"/><path d="M733.2 559.8L746.2 566.5L733.2 573.2Z" fill="#3fb3d0"/></svg>
<div class="b" style="left:0.3px;top:594.2px;width:40.5px;height:143.3px;border:1px solid #596065;border-radius:4px;"></div>
<div class="b" style="left:18.85px;top:600.2px;width:3.4px;height:132px;background:#82b160"></div>
<div class="b" style="left:0.3px;top:594.9px;width:40.5px;height:10px;border-radius:4.5px;background:#98cf6b"></div>
<div class="b" style="left:4.3px;top:599.4px;width:32.5px;height:1px;background:#638746"></div>
<div class="t" style="top:596px;font-size:9.5px;color:#d1e9bc;right:987.8px;transform-origin:100% 50%;transform:scaleX(0.99);">0.0 dB</div>
<div class="t" style="left:32.2px;top:732.6px;font-size:10.5px;color:#98cf6b;transform-origin:0 50%;transform:translate(0,-50%) rotate(-90deg) scaleX(0.95);">low</div>
<div class="b" style="left:0.3px;top:739.1px;width:40.5px;height:27.9px;background:#222a31;border:1px solid #596065;border-radius:4px;"></div>
<div class="b" style="left:44.9px;top:594.2px;width:40.5px;height:143.3px;border:1px solid #596065;border-radius:4px;"></div>
<div class="b" style="left:63.45px;top:600.2px;width:3.4px;height:132px;background:#82b160"></div>
<div class="b" style="left:44.9px;top:594.9px;width:40.5px;height:10px;border-radius:4.5px;background:#98cf6b"></div>
<div class="b" style="left:48.9px;top:599.4px;width:32.5px;height:1px;background:#638746"></div>
<div class="t" style="top:596px;font-size:9.5px;color:#d1e9bc;right:943.2px;transform-origin:100% 50%;transform:scaleX(0.99);">0.0 dB</div>
<div class="t" style="left:76.8px;top:732.6px;font-size:10.5px;color:#98cf6b;transform-origin:0 50%;transform:translate(0,-50%) rotate(-90deg) scaleX(0.95);">mid</div>
<div class="b" style="left:44.9px;top:739.1px;width:40.5px;height:27.9px;background:#222a31;border:1px solid #596065;border-radius:4px;"></div>
<div class="b" style="left:89.5px;top:594.2px;width:40.5px;height:143.3px;border:1px solid #596065;border-radius:4px;"></div>
<div class="b" style="left:108.05px;top:600.2px;width:3.4px;height:132px;background:#82b160"></div>
<div class="b" style="left:89.5px;top:594.9px;width:40.5px;height:10px;border-radius:4.5px;background:#98cf6b"></div>
<div class="b" style="left:93.5px;top:599.4px;width:32.5px;height:1px;background:#638746"></div>
<div class="t" style="top:596px;font-size:9.5px;color:#d1e9bc;right:898.6px;transform-origin:100% 50%;transform:scaleX(0.99);">0.0 dB</div>
<div class="t" style="left:121.4px;top:732.6px;font-size:10.5px;color:#98cf6b;transform-origin:0 50%;transform:translate(0,-50%) rotate(-90deg) scaleX(0.95);">high</div>
<div class="b" style="left:89.5px;top:739.1px;width:40.5px;height:27.9px;background:#222a31;border:1px solid #596065;border-radius:4px;"></div>
<div class="b" style="left:138.3px;top:596.1px;width:566.3px;height:37.7px;background:#232a31;border:1px solid #555b60;border-radius:4px;"></div>
<div class="b" style="left:138.9px;top:638.2px;width:565.7px;height:43.2px;background:#232a31;border:1px solid #5a6064;border-radius:4px;"></div>
<div class="b" style="left:138px;top:685.7px;width:40.7px;height:39px;background:#222a31;border:1px solid #53595d;border-radius:4.5px;"></div>
<div class="t" style="top:697px;font-size:15.2px;color:#98cf6b;left:158.3px;transform:translateX(-50%) scaleX(0.88);">1</div>
<div class="b" style="left:138px;top:728px;width:40.7px;height:39.1px;background:#222a31;border:1px solid #53595d;border-radius:4.5px;"></div>
<div class="t" style="top:733px;font-size:9.5px;color:#98cf6b;left:158.3px;transform:translateX(-50%) scaleX(1.1);">&lt;&lt;</div>
<div class="t" style="top:752px;font-size:9.6px;color:#98cf6b;left:158.3px;transform:translateX(-50%) scaleX(0.97);">16</div>
<div class="b" style="left:181.83px;top:685.7px;width:40.7px;height:39px;background:#222a31;border:1px solid #53595d;border-radius:4.5px;"></div>
<div class="t" style="top:697px;font-size:15.2px;color:#98cf6b;left:202.13px;transform:translateX(-50%) scaleX(0.88);">2</div>
<div class="b" style="left:181.83px;top:728px;width:40.7px;height:39.1px;background:#222a31;border:1px solid #53595d;border-radius:4.5px;"></div>
<div class="t" style="top:734px;font-size:8.6px;color:#98cf6b;left:202.13px;transform:translateX(-50%) scaleX(0.76);">JUMP SIZE</div>
<div class="t" style="top:752px;font-size:9.6px;color:#98cf6b;left:202.13px;transform:translateX(-50%) scaleX(1.11);">/2</div>
<div class="b" style="left:225.66px;top:685.7px;width:40.7px;height:39px;background:#222a31;border:1px solid #53595d;border-radius:4.5px;"></div>
<div class="t" style="top:697px;font-size:15.2px;color:#98cf6b;left:245.96px;transform:translateX(-50%) scaleX(0.88);">3</div>
<div class="b" style="left:225.66px;top:728px;width:40.7px;height:39.1px;background:#222a31;border:1px solid #53595d;border-radius:4.5px;"></div>
<div class="t" style="top:734px;font-size:8.6px;color:#98cf6b;left:245.96px;transform:translateX(-50%) scaleX(0.76);">JUMP SIZE</div>
<div class="t" style="top:752px;font-size:9.6px;color:#98cf6b;left:245.96px;transform:translateX(-50%) scaleX(0.91);">x2</div>
<div class="b" style="left:269.49px;top:685.7px;width:40.7px;height:39px;background:#222a31;border:1px solid #53595d;border-radius:4.5px;"></div>
<div class="t" style="top:697px;font-size:15.2px;color:#98cf6b;left:289.79px;transform:translateX(-50%) scaleX(0.88);">4</div>
<div class="b" style="left:269.49px;top:728px;width:40.7px;height:39.1px;background:#222a31;border:1px solid #53595d;border-radius:4.5px;"></div>
<div class="t" style="top:733px;font-size:9.5px;color:#98cf6b;left:289.79px;transform:translateX(-50%) scaleX(1.1);">&gt;&gt;</div>
<div class="t" style="top:752px;font-size:9.6px;color:#98cf6b;left:289.79px;transform:translateX(-50%) scaleX(0.97);">16</div>
<div class="b" style="left:362.3px;top:684.7px;width:30.6px;height:31.3px;border:1px solid #4a5157;border-radius:4.5px;"></div>
<div class="t" style="top:697px;font-size:7.4px;color:#98cf6b;left:377.7px;transform:translateX(-50%) scaleX(1);">0.0%</div>
<div class="t" style="top:713px;font-size:7.4px;color:#98cf6b;left:377.7px;transform:translateX(-50%) scaleX(0.8);">FX1</div>
<div class="b" style="left:358px;top:728px;width:40.4px;height:39.1px;background:#222a31;border:1px solid #53595d;border-radius:4.5px;"></div>
<div class="t" style="top:743px;font-size:10px;color:#98cf6b;left:378.2px;transform:translateX(-50%) scaleX(0.76);">FX1</div>
<div class="b" style="left:406.2px;top:684.7px;width:30.6px;height:31.3px;border:1px solid #4a5157;border-radius:4.5px;"></div>
<div class="t" style="top:697px;font-size:7.4px;color:#98cf6b;left:421.6px;transform:translateX(-50%) scaleX(1);">0.0%</div>
<div class="t" style="top:713px;font-size:7.4px;color:#98cf6b;left:421.6px;transform:translateX(-50%) scaleX(0.8);">FX2</div>
<div class="b" style="left:401.4px;top:728px;width:40.4px;height:39.1px;background:#222a31;border:1px solid #53595d;border-radius:4.5px;"></div>
<div class="t" style="top:743px;font-size:10px;color:#98cf6b;left:421.6px;transform:translateX(-50%) scaleX(0.76);">FX2</div>
<div class="b" style="left:488.9px;top:685.7px;width:40.8px;height:39px;background:#222a31;border:1px solid #53595d;border-radius:4.5px;"></div>
<div class="b" style="left:488.9px;top:728px;width:40.8px;height:39.1px;background:#222a31;border:1px solid #53595d;border-radius:4.5px;"></div>
<div class="t" style="top:700px;font-size:11.3px;color:#98cf6b;left:509.3px;transform:translateX(-50%) scaleX(1);">1</div>
<div class="t" style="top:742px;font-size:11.3px;color:#98cf6b;left:509.3px;transform:translateX(-50%) scaleX(1);">4</div>
<div class="b" style="left:532.9px;top:685.7px;width:40.8px;height:39px;background:#222a31;border:1px solid #53595d;border-radius:4.5px;"></div>
<div class="b" style="left:532.9px;top:728px;width:40.8px;height:39.1px;background:#222a31;border:1px solid #53595d;border-radius:4.5px;"></div>
<div class="t" style="top:700px;font-size:11.3px;color:#98cf6b;left:553.3px;transform:translateX(-50%) scaleX(1);">2</div>
<div class="t" style="top:742px;font-size:11.3px;color:#98cf6b;left:553.3px;transform:translateX(-50%) scaleX(1);">16</div>
<div class="b" style="left:576.9px;top:685.7px;width:40.8px;height:39px;background:#222a31;border:1px solid #53595d;border-radius:4.5px;"></div>
<div class="b" style="left:576.9px;top:728px;width:40.8px;height:39.1px;background:#222a31;border:1px solid #53595d;border-radius:4.5px;"></div>
<div class="t" style="top:692px;font-size:7.8px;color:#98cf6b;left:597.3px;transform:translateX(-50%) scaleX(0.87);">LOOP</div>
<div class="t" style="top:711px;font-size:8.4px;color:#98cf6b;left:597.3px;transform:translateX(-50%) scaleX(1);">16</div>
<div class="t" style="top:734px;font-size:8.3px;color:#98cf6b;left:597.3px;transform:translateX(-50%) scaleX(0.79);">LOOP SIZE</div>
<div class="t" style="top:752px;font-size:9.6px;color:#98cf6b;left:597.3px;transform:translateX(-50%) scaleX(1.1);">/2</div>
<div class="b" style="left:620.9px;top:685.7px;width:40.8px;height:39px;background:#222a31;border:1px solid #53595d;border-radius:4.5px;"></div>
<div class="b" style="left:620.9px;top:728px;width:40.8px;height:39.1px;background:#222a31;border:1px solid #53595d;border-radius:4.5px;"></div>
<div class="t" style="top:692px;font-size:7.8px;color:#98cf6b;left:641.3px;transform:translateX(-50%) scaleX(0.78);">ROLL</div>
<div class="t" style="top:711px;font-size:8.4px;color:#98cf6b;left:641.3px;transform:translateX(-50%) scaleX(1);">16</div>
<div class="t" style="top:734px;font-size:8.3px;color:#98cf6b;left:641.3px;transform:translateX(-50%) scaleX(0.79);">LOOP SIZE</div>
<div class="t" style="top:752px;font-size:9.6px;color:#98cf6b;left:641.3px;transform:translateX(-50%) scaleX(0.92);">x2</div>
<div class="b" style="left:665.4px;top:686.2px;width:39.8px;height:38px;background:#98cf6b;border-radius:4.5px;"></div>
<div class="b" style="left:664.9px;top:728px;width:40.8px;height:39.1px;background:#222a31;border:1px solid #53595d;border-radius:4.5px;"></div>
<div class="t" style="top:700px;font-size:9.6px;color:#1c2a14;left:685.3px;transform:translateX(-50%) scaleX(0.85);">SYNC</div>
<div class="t" style="top:742px;font-size:9.6px;color:#98cf6b;left:685.3px;transform:translateX(-50%) scaleX(0.83);">KEY</div>
<div class="b" style="left:710.9px;top:594.5px;width:54.9px;height:129.6px;border:1px solid #53595d;border-radius:4px;"></div>
<div class="b" style="left:737.1px;top:603.2px;width:3.4px;height:36.3px;background:#2e3938"></div>
<div class="b" style="left:737.1px;top:639.5px;width:3.4px;height:79.3px;background:#98cf6b"></div>
<div class="b" style="left:711.9px;top:635.1px;width:54.2px;height:8.8px;border-radius:4.4px;background:#98cf6b"></div>
<div class="b" style="left:716px;top:638.9px;width:46px;height:1.2px;background:#445d30"></div>
<div class="t" style="top:597px;font-size:9px;color:#98cf6b;right:262.4px;transform-origin:100% 50%;transform:scaleX(0.94);">43.9%</div>
<div class="t" style="left:758.6px;top:719.8px;font-size:10px;color:#98cf6b;transform-origin:0 50%;transform:translate(0,-50%) rotate(-90deg) scaleX(1);">Volume</div>
<div class="b" style="left:710.9px;top:727px;width:57.1px;height:40px;background:#222a31;border:1px solid #53595d;border-radius:4.5px;"></div>
<svg width="1024" height="767"><rect x="9.35" y="744.05" width="6" height="1.7" rx="1.1" fill="#37493a" stroke="#98cf6b" stroke-width="0.7"/><rect x="9.35" y="747.05" width="6" height="1.7" rx="1.1" fill="#37493a" stroke="#98cf6b" stroke-width="0.7"/><rect x="9.35" y="750.05" width="6" height="1.7" rx="1.1" fill="#37493a" stroke="#98cf6b" stroke-width="0.7"/><rect x="9.35" y="753.05" width="6" height="1.7" rx="1.1" fill="#37493a" stroke="#98cf6b" stroke-width="0.7"/><rect x="9.35" y="756.05" width="6" height="1.7" rx="1.1" fill="#37493a" stroke="#98cf6b" stroke-width="0.7"/><rect x="9.35" y="759.05" width="6" height="1.7" rx="1.1" fill="#37493a" stroke="#98cf6b" stroke-width="0.7"/><rect x="16.7" y="743.7" width="6.7" height="2.4" fill="#98cf6b"/><rect x="16.7" y="746.7" width="6.7" height="2.4" fill="#98cf6b"/><rect x="16.7" y="749.7" width="6.7" height="2.4" fill="#98cf6b"/><rect x="16.7" y="752.7" width="6.7" height="2.4" fill="#98cf6b"/><rect x="16.7" y="755.7" width="6.7" height="2.4" fill="#98cf6b"/><rect x="16.7" y="758.7" width="6.7" height="2.4" fill="#98cf6b"/><rect x="24.4" y="743.7" width="6.7" height="2.4" fill="#98cf6b"/><rect x="24.4" y="746.7" width="6.7" height="2.4" fill="#98cf6b"/><rect x="24.4" y="749.7" width="6.7" height="2.4" fill="#98cf6b"/><rect x="24.4" y="752.7" width="6.7" height="2.4" fill="#98cf6b"/><rect x="24.4" y="755.7" width="6.7" height="2.4" fill="#98cf6b"/><rect x="24.4" y="758.7" width="6.7" height="2.4" fill="#98cf6b"/><rect x="53.6" y="743.7" width="6.7" height="2.4" fill="#98cf6b"/><rect x="53.6" y="746.7" width="6.7" height="2.4" fill="#98cf6b"/><rect x="53.6" y="749.7" width="6.7" height="2.4" fill="#98cf6b"/><rect x="53.6" y="752.7" width="6.7" height="2.4" fill="#98cf6b"/><rect x="53.6" y="755.7" width="6.7" height="2.4" fill="#98cf6b"/><rect x="53.6" y="758.7" width="6.7" height="2.4" fill="#98cf6b"/><rect x="61.65" y="744.05" width="6" height="1.7" rx="1.1" fill="#37493a" stroke="#98cf6b" stroke-width="0.7"/><rect x="61.65" y="747.05" width="6" height="1.7" rx="1.1" fill="#37493a" stroke="#98cf6b" stroke-width="0.7"/><rect x="61.65" y="750.05" width="6" height="1.7" rx="1.1" fill="#37493a" stroke="#98cf6b" stroke-width="0.7"/><rect x="61.65" y="753.05" width="6" height="1.7" rx="1.1" fill="#37493a" stroke="#98cf6b" stroke-width="0.7"/><rect x="61.65" y="756.05" width="6" height="1.7" rx="1.1" fill="#37493a" stroke="#98cf6b" stroke-width="0.7"/><rect x="61.65" y="759.05" width="6" height="1.7" rx="1.1" fill="#37493a" stroke="#98cf6b" stroke-width="0.7"/><rect x="69" y="743.7" width="6.7" height="2.4" fill="#98cf6b"/><rect x="69" y="746.7" width="6.7" height="2.4" fill="#98cf6b"/><rect x="69" y="749.7" width="6.7" height="2.4" fill="#98cf6b"/><rect x="69" y="752.7" width="6.7" height="2.4" fill="#98cf6b"/><rect x="69" y="755.7" width="6.7" height="2.4" fill="#98cf6b"/><rect x="69" y="758.7" width="6.7" height="2.4" fill="#98cf6b"/><rect x="98.2" y="743.7" width="6.7" height="2.4" fill="#98cf6b"/><rect x="98.2" y="746.7" width="6.7" height="2.4" fill="#98cf6b"/><rect x="98.2" y="749.7" width="6.7" height="2.4" fill="#98cf6b"/><rect x="98.2" y="752.7" width="6.7" height="2.4" fill="#98cf6b"/><rect x="98.2" y="755.7" width="6.7" height="2.4" fill="#98cf6b"/><rect x="98.2" y="758.7" width="6.7" height="2.4" fill="#98cf6b"/><rect x="105.9" y="743.7" width="6.7" height="2.4" fill="#98cf6b"/><rect x="105.9" y="746.7" width="6.7" height="2.4" fill="#98cf6b"/><rect x="105.9" y="749.7" width="6.7" height="2.4" fill="#98cf6b"/><rect x="105.9" y="752.7" width="6.7" height="2.4" fill="#98cf6b"/><rect x="105.9" y="755.7" width="6.7" height="2.4" fill="#98cf6b"/><rect x="105.9" y="758.7" width="6.7" height="2.4" fill="#98cf6b"/><rect x="113.95" y="744.05" width="6" height="1.7" rx="1.1" fill="#37493a" stroke="#98cf6b" stroke-width="0.7"/><rect x="113.95" y="747.05" width="6" height="1.7" rx="1.1" fill="#37493a" stroke="#98cf6b" stroke-width="0.7"/><rect x="113.95" y="750.05" width="6" height="1.7" rx="1.1" fill="#37493a" stroke="#98cf6b" stroke-width="0.7"/><rect x="113.95" y="753.05" width="6" height="1.7" rx="1.1" fill="#37493a" stroke="#98cf6b" stroke-width="0.7"/><rect x="113.95" y="756.05" width="6" height="1.7" rx="1.1" fill="#37493a" stroke="#98cf6b" stroke-width="0.7"/><rect x="113.95" y="759.05" width="6" height="1.7" rx="1.1" fill="#37493a" stroke="#98cf6b" stroke-width="0.7"/><path d="M372.15 709.61A11.1 11.1 0 1 1 383.25 709.61" fill="none" stroke="#43484d" stroke-width="3.3" stroke-linecap="round"/><circle cx="372.15" cy="709.61" r="3.1" fill="#98cf6b"/><path d="M416.05 709.61A11.1 11.1 0 1 1 427.15 709.61" fill="none" stroke="#43484d" stroke-width="3.3" stroke-linecap="round"/><circle cx="416.05" cy="709.61" r="3.1" fill="#98cf6b"/><path d="M589.6 708.7V701.4Q589.6 699.9 591.1 699.9H604M605 702.4V708.7Q605 710.2 603.5 710.2H590.6" fill="none" stroke="#98cf6b" stroke-width="1.8"/><path d="M602.4 697.2L606.7 699.9L602.4 702.6Z" fill="#98cf6b"/><path d="M592.2 707.5L587.9 710.2L592.2 712.9Z" fill="#98cf6b"/><path d="M633.6 708.7V701.4Q633.6 699.9 635.1 699.9H648M649 702.4V708.7Q649 710.2 647.5 710.2H634.6" fill="none" stroke="#98cf6b" stroke-width="1.8"/><path d="M646.4 697.2L650.7 699.9L646.4 702.6Z" fill="#98cf6b"/><path d="M636.2 707.5L631.9 710.2L636.2 712.9Z" fill="#98cf6b"/><path d="M733.2 740.2L746.2 746.9L733.2 753.6Z" fill="#98cf6b"/></svg>
<div class="b" style="left:776px;top:52.6px;width:240px;height:713.4px;background:#0a1d25;border-radius:5px;"></div>
<div class="b" style="left:777px;top:54px;width:238px;height:53.5px;background:#2a323a;border-radius:4px 4px 0 0;"></div>
<div class="t" style="top:76px;font-size:9.8px;color:#d0d3d5;left:896px;transform:translateX(-50%) scaleX(0.92);">MIDI MAP</div>
<div class="b" style="left:777.6px;top:109.8px;width:236.8px;height:52.1px;background:#3b474f;"></div>
<div class="b" style="left:777.6px;top:163.2px;width:236.8px;height:51.3px;background:#3b474f;"></div>
<div class="b" style="left:777.6px;top:216.4px;width:236.8px;height:51.3px;background:#3b474f;"></div>
<div class="b" style="left:777.6px;top:269.4px;width:236.8px;height:51.4px;background:#3b474f;"></div>
<div class="b" style="left:777.6px;top:322.2px;width:236.8px;height:51.6px;background:#3b474f;border-radius:0 0 4px 4px;"></div>
<div class="t" style="top:131px;font-size:10px;color:#d0d3d5;left:781.6px;transform-origin:0 50%;transform:scaleX(0.95);">Parameter:</div>
<div class="t" style="top:131px;font-size:10px;color:#d0d3d5;left:895.8px;transform:translateX(-50%) scaleX(0.95);">Low Gain</div>
<div class="t" style="top:184px;font-size:10px;color:#d0d3d5;left:781.6px;transform-origin:0 50%;transform:scaleX(0.91);">Range:</div>
<div class="t" style="top:238px;font-size:10px;color:#d0d3d5;left:781.6px;transform-origin:0 50%;transform:scaleX(0.91);">MIDI Range:</div>
<div class="t" style="top:291px;font-size:10px;color:#d0d3d5;left:781.6px;transform-origin:0 50%;transform:scaleX(0.95);">Flip</div>
<div class="t" style="top:344px;font-size:10px;color:#d0d3d5;left:781.6px;transform-origin:0 50%;transform:scaleX(0.95);">Control Type:</div>
<div class="t" style="top:344px;font-size:10px;color:#d0d3d5;left:954.8px;transform:translateX(-50%) scaleX(0.95);">Continous</div>
<div class="b" style="left:844.2px;top:170.4px;width:162.8px;height:37.3px;background:#2a323a;border:1px solid #1b242b;border-radius:4.5px;"></div>
<div class="t" style="top:184px;font-size:9.6px;color:#d0d3d5;left:848.2px;transform-origin:0 50%;transform:scaleX(0.9);">0%</div>
<div class="t" style="top:184px;font-size:9.6px;color:#d0d3d5;right:21.5px;transform-origin:100% 50%;transform:scaleX(0.9);">100%</div>
<div class="b" style="left:844.2px;top:223.6px;width:162.8px;height:37.3px;background:#2a323a;border:1px solid #1b242b;border-radius:4.5px;"></div>
<div class="t" style="top:237px;font-size:9.6px;color:#d0d3d5;left:848.2px;transform-origin:0 50%;transform:scaleX(0.9);">0</div>
<div class="t" style="top:237px;font-size:9.6px;color:#d0d3d5;right:21.5px;transform-origin:100% 50%;transform:scaleX(0.9);">127</div>
<div class="b" style="left:987px;top:285px;width:20.6px;height:20px;border:1px solid #7b7d7c;border-radius:4.5px;"></div>
<div class="b" style="left:777px;top:382.5px;width:238px;height:54.6px;background:#2a323a;border-radius:4px 4px 0 0;"></div>
<svg width="1024" height="767"><path d="M804.4 81.8H802V87.3H815.6V81.8H813.2" fill="none" stroke="#d2d2d2" stroke-width="1.5"/><path d="M808.7 82.7V75M805.3 78.1L808.7 74.7L812.1 78.1" fill="none" stroke="#d2d2d2" stroke-width="1.5"/><path d="M978.2 81.8H975.8V87.3H989.4V81.8H987" fill="none" stroke="#d2d2d2" stroke-width="1.5"/><path d="M982.6 72.8V81M979.3 78L982.6 81.3L985.9 78" fill="none" stroke="#d2d2d2" stroke-width="1.5"/><rect x="983" y="127.3" width="14.5" height="3.2" fill="#cbcbcb"/><path d="M987.6 127.3V126.6Q987.6 125.8 988.4 125.8H992.2Q993 125.8 993 126.6V127.3" fill="none" stroke="#cbcbcb" stroke-width="0.9"/><path d="M983.9 132H996.9V144.4Q996.9 145.6 995.7 145.6H985.1Q983.9 145.6 983.9 144.4Z" fill="#cbcbcb"/><path d="M986.4 133.2V143.8M990.1 133.2V143.8M994.1 133.2V143.8" stroke="#3b474f" stroke-width="1.5"/><path d="M803.2 404.6L798.4 409.6L803.2 414.6" fill="none" stroke="#d2d2d2" stroke-width="1.3"/></svg>
<div class="t" style="top:404px;font-size:9.6px;color:#d0d3d5;left:895.6px;transform:translateX(-50%) scaleX(0.86);">EQUALIZER</div>
<div class="b" style="left:777.4px;top:437.9px;width:237.2px;height:45.7px;background:#737373;"></div>
<div class="t" style="top:456px;font-size:9.8px;color:#1c1c1c;left:781.2px;transform-origin:0 50%;transform:scaleX(0.87);">LOW GAIN</div>
<div class="t" style="top:456px;font-size:9.8px;color:#1c1c1c;right:12.8px;transform-origin:100% 50%;transform:scaleX(0.9);">190 - 12</div>
<div class="b" style="left:777.4px;top:484.62px;width:237.2px;height:45.7px;background:#3b474f;"></div>
<div class="t" style="top:503px;font-size:9.8px;color:#d0d3d5;left:781.2px;transform-origin:0 50%;transform:scaleX(0.9);">MID GAIN</div>
<div class="t" style="top:503px;font-size:9.8px;color:#d0d3d5;right:12.8px;transform-origin:100% 50%;transform:scaleX(0.9);">190 - 8</div>
<div class="b" style="left:777.4px;top:531.34px;width:237.2px;height:45.7px;background:#3b474f;"></div>
<div class="t" style="top:549px;font-size:9.8px;color:#d0d3d5;left:781.2px;transform-origin:0 50%;transform:scaleX(0.88);">HIGH GAIN</div>
<div class="t" style="top:549px;font-size:9.8px;color:#d0d3d5;right:12.8px;transform-origin:100% 50%;transform:scaleX(0.9);">190 - 4</div>
<div class="b" style="left:777.4px;top:578.06px;width:237.2px;height:45.7px;background:#3b474f;"></div>
<div class="t" style="top:596px;font-size:9.8px;color:#d0d3d5;left:781.2px;transform-origin:0 50%;transform:scaleX(0.89);">LOW KILL</div>
<div class="b" style="left:777.4px;top:624.78px;width:237.2px;height:45.7px;background:#3b474f;"></div>
<div class="t" style="top:643px;font-size:9.8px;color:#d0d3d5;left:781.2px;transform-origin:0 50%;transform:scaleX(0.9);">MID KILL</div>
<div class="b" style="left:777.4px;top:671.5px;width:237.2px;height:45.7px;background:#3b474f;border-radius:0 0 4px 4px;"></div>
<div class="t" style="top:690px;font-size:9.8px;color:#d0d3d5;left:781.2px;transform-origin:0 50%;transform:scaleX(0.9);">HIGH KILL</div>
</div></body></html>
